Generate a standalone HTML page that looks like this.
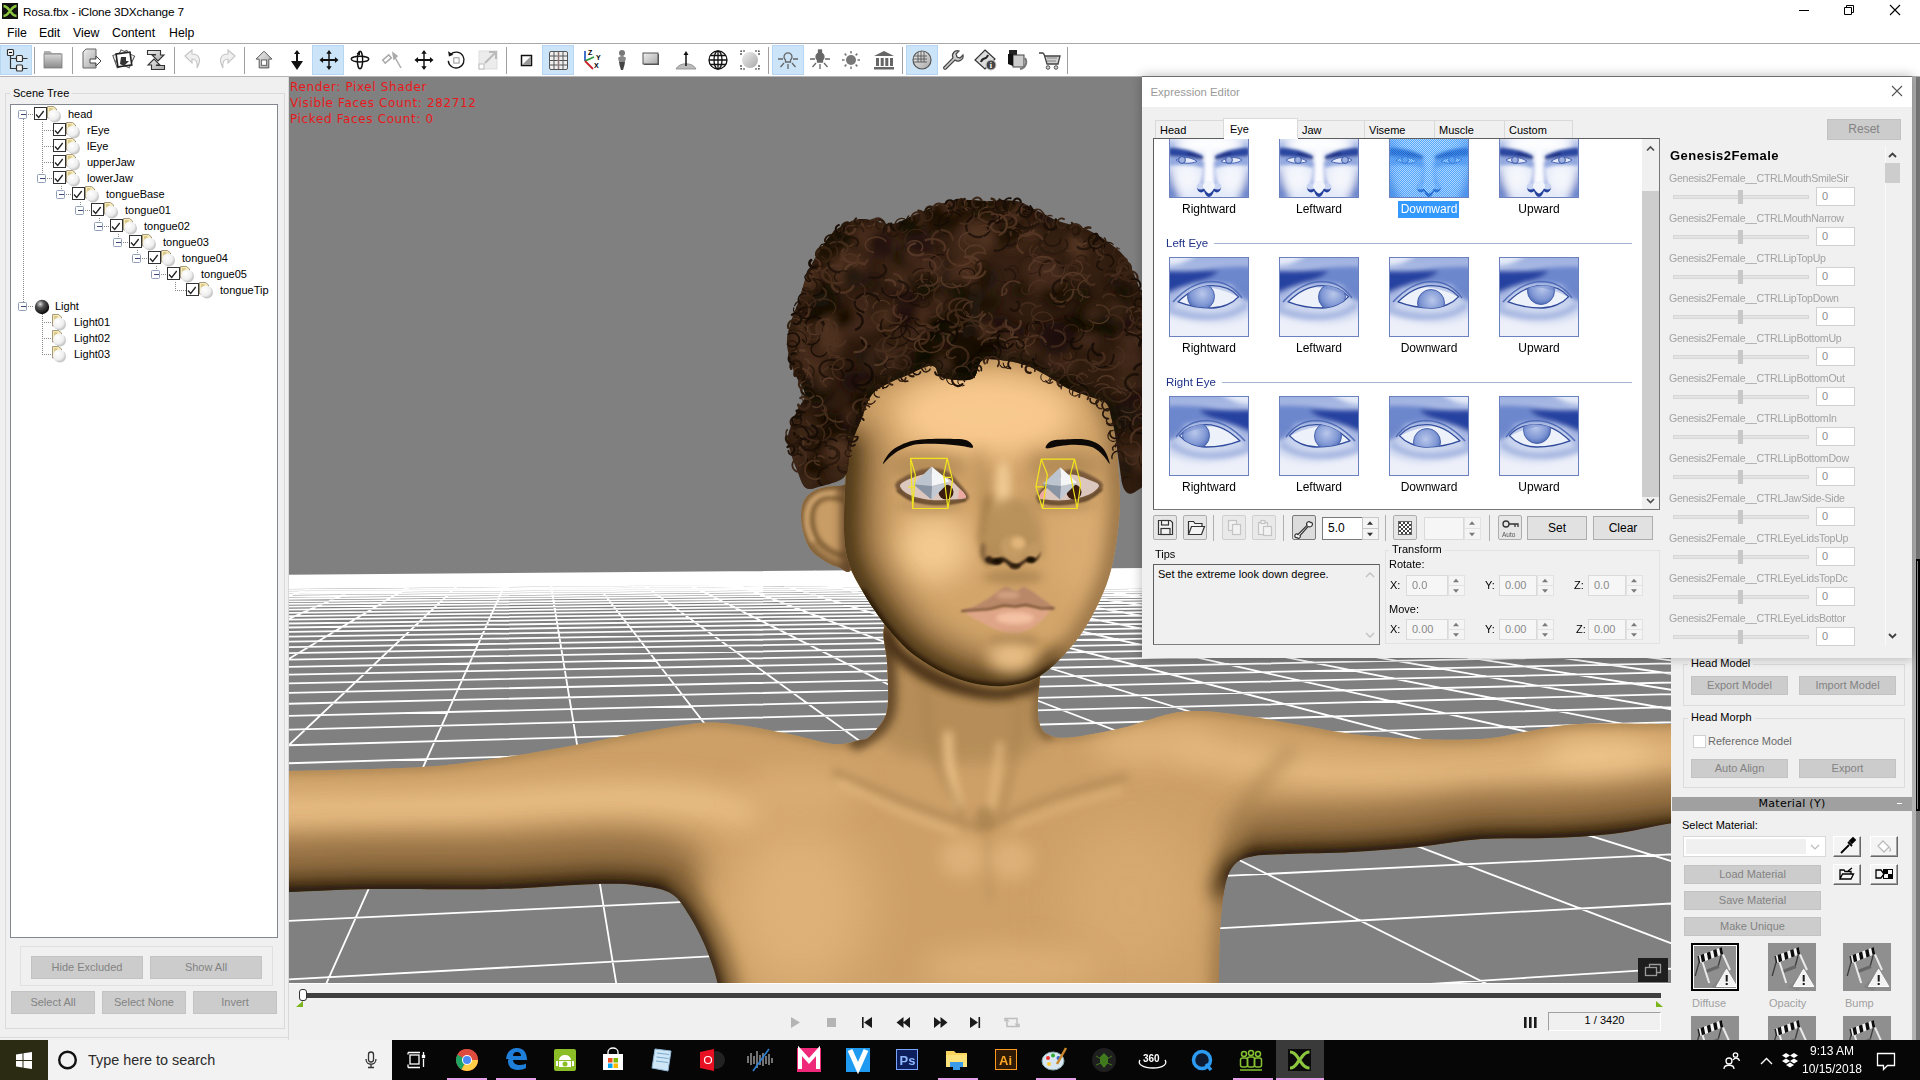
<!DOCTYPE html><html><head><meta charset="utf-8"><title>Rosa.fbx - iClone 3DXchange 7</title><style>*{box-sizing:border-box;margin:0;padding:0}
html,body{width:1920px;height:1080px;overflow:hidden;background:#f0f0f0;font-family:"Liberation Sans",sans-serif;font-size:12px;color:#000}
.a{position:absolute}
.t{position:absolute;white-space:nowrap;line-height:14px}
.btn{position:absolute;background:#ccc;border:1px solid #c3c3c3;color:#838383;text-align:center;font-size:11px;line-height:17px;white-space:nowrap}
.gb{position:absolute;border:1px solid #dcdcdc}
.hl{position:absolute;background:#cce4f7;border:1px solid #b5d7f3}
.sep{position:absolute;width:1px;background:#a0a0a0}
.glab{position:absolute;font-size:10.6px;color:#a2a2a2;white-space:nowrap;line-height:13px;letter-spacing:-0.27px}
.strk{position:absolute;height:4px;background:#e4e4e4;border:1px solid #d6d6d6}
.sthm{position:absolute;width:5px;height:14px;background:#c8c8c8}
.vbox{position:absolute;width:39px;height:19px;background:#fff;border:1px solid #d0d0d0;color:#8c8c8c;font-size:11px;line-height:17px;padding-left:5px}
.thl{position:absolute;font-size:12px;text-align:center;width:110px;line-height:14px}
.tab{position:absolute;background:#f0f0f0;border:1px solid #d9d9d9;border-bottom:none;font-size:11px;line-height:13px;padding:3px 0 0 4px}
.spin{position:absolute;width:38px;height:20px;background:#f4f4f4;border:1px solid #d5d5d5;color:#8a8a8a;font-size:11px;line-height:18px;padding-left:5px}
.lbl{position:absolute;font-size:11px;line-height:13px;white-space:nowrap}
.ti{position:absolute;font-size:11px;line-height:13px;white-space:nowrap}
svg{position:absolute;overflow:visible}
</style></head><body>
<div class="a" style="left:0;top:0;width:1920px;height:43px;background:#fff"></div>
<div class="a" style="left:0;top:43px;width:1920px;height:1px;background:#a8a8a8"></div>
<div class="a" style="left:0;top:44px;width:1920px;height:32px;background:#fff"></div>
<div class="a" style="left:0;top:76px;width:1920px;height:1px;background:#b4b4b4"></div>
<svg style="left:2px;top:3px" width="16" height="16" viewBox="0 0 16 16"><rect width="16" height="16" fill="#111"/><path d="M1.5 3 C5 3 6.5 6 8 8 C9.5 10 11 13 14.5 13 M14.5 3 C11 3 9.5 6 8 8 C6.5 10 5 13 1.5 13" stroke="#8cc63f" stroke-width="2.4" fill="none"/></svg>
<div class="t" style="left:23px;top:5px;font-size:11.8px;letter-spacing:-.15px;line-height:15px">Rosa.fbx - iClone 3DXchange 7</div>
<svg style="left:1790px;top:0" width="120" height="22" viewBox="0 0 120 22"><path d="M9 10.5h10" stroke="#000" stroke-width="1"/><path d="M54.5 7.5h7v7h-7z M56.5 7.5v-2h7v7h-2" stroke="#000" fill="none" stroke-width="1"/><path d="M100 5l10 10M110 5l-10 10" stroke="#000" stroke-width="1.1"/></svg>
<div class="t" style="left:7px;top:26px;font-size:12.3px;line-height:15px">File</div>
<div class="t" style="left:39px;top:26px;font-size:12.3px;line-height:15px">Edit</div>
<div class="t" style="left:73px;top:26px;font-size:12.3px;line-height:15px">View</div>
<div class="t" style="left:112px;top:26px;font-size:12.3px;line-height:15px">Content</div>
<div class="t" style="left:169px;top:26px;font-size:12.3px;line-height:15px">Help</div>
<div class="hl" style="left:0px;top:45px;width:32px;height:30px"></div>
<div class="hl" style="left:312px;top:45px;width:32px;height:30px"></div>
<div class="hl" style="left:542px;top:45px;width:32px;height:30px"></div>
<div class="hl" style="left:772px;top:45px;width:32px;height:30px"></div>
<div class="hl" style="left:906px;top:45px;width:32px;height:30px"></div>
<div class="sep" style="left:34px;top:47px;height:27px"></div>
<div class="sep" style="left:72px;top:47px;height:27px"></div>
<div class="sep" style="left:174px;top:47px;height:27px"></div>
<div class="sep" style="left:244px;top:47px;height:27px"></div>
<div class="sep" style="left:506px;top:47px;height:27px"></div>
<div class="sep" style="left:768px;top:47px;height:27px"></div>
<div class="sep" style="left:902px;top:47px;height:27px"></div>
<div class="sep" style="left:1067px;top:47px;height:27px"></div>
<svg width="0" height="0" style="left:0;top:0"><defs><linearGradient id="gg" x1="0" y1="0" x2="0" y2="1"><stop offset="0" stop-color="#d8d8d8"/><stop offset="1" stop-color="#8a8a8a"/></linearGradient><linearGradient id="gl" x1="0" y1="0" x2="1" y2="1"><stop offset="0" stop-color="#efefef"/><stop offset="1" stop-color="#a8a8a8"/></linearGradient></defs></svg>
<svg style="left:5px;top:48px" width="24" height="24" viewBox="0 0 24 24"><g fill="none" stroke="#333" stroke-width="1.2"><rect x="2.5" y="1.5" width="6" height="6" rx="1" fill="#fff"/><path d="M4 4.5h3" stroke="#000"/><path d="M5.5 7.5v13h6M5.5 10.5h6M17.5 10.5h5M17.5 20.500h5"/><rect x="11.500" y="7.500" width="6" height="6" rx="1" fill="#f4f4f4"/><rect x="11.500" y="17" width="6" height="6" rx="1" fill="#f4f4f4"/></g></svg>
<svg style="left:41px;top:48px" width="24" height="24" viewBox="0 0 24 24"><path d="M3 3h6l2 2h9v2H3z" fill="#b0b0b0"/><rect x="3" y="6" width="18" height="14" fill="url(#gg)" stroke="#7a7a7a" stroke-width=".8"/></svg>
<svg style="left:78px;top:48px" width="24" height="24" viewBox="0 0 24 24"><path d="M5 4l3-3h10v19H5z" fill="url(#gl)" stroke="#666" stroke-width="1"/><path d="M12 11h6v-3l5 5-5 5v-3h-6z" fill="#fff" stroke="#444" stroke-width="1"/></svg>
<svg style="left:112px;top:48px" width="24" height="24" viewBox="0 0 24 24"><g stroke="#555" stroke-width="1" fill="#f2f2f2"><rect x="3" y="4" width="15" height="13" transform="rotate(-20 12 12)"/><rect x="5" y="4" width="15" height="13" transform="rotate(25 12 12)"/><rect x="5" y="5" width="14" height="13" transform="rotate(-8 12 12)" fill="#fff" stroke="#222" stroke-width="1.6"/></g><path d="M9 9h5v4h3l-5 5-4-2z" fill="#333"/></svg>
<svg style="left:144px;top:48px" width="24" height="24" viewBox="0 0 24 24"><path d="M3.500 2.500h13v4.500h3.500l-6 6-6-6h3.500v-.5h-8z" fill="url(#gl)" stroke="#333" stroke-width="1.100"/><path d="M20.500 21.500h-13v-4.500h-3.500l6-6 6 6h-3.500v.5h8z" fill="url(#gl)" stroke="#333" stroke-width="1.100"/></svg>
<svg style="left:182px;top:48px" width="24" height="24" viewBox="0 0 24 24"><path d="M3 8l7-6v4c7 0 10 5 5 14 1-6-1-9-5-9v4z" fill="#f0f0f0" stroke="#c4c4c4" stroke-width="1.1"/></svg>
<svg style="left:214px;top:48px" width="24" height="24" viewBox="0 0 24 24"><path d="M21 8l-7-6v4c-7 0-10 5-5 14-1-6 1-9 5-9v4z" fill="#f0f0f0" stroke="#c4c4c4" stroke-width="1.1"/></svg>
<svg style="left:252px;top:48px" width="24" height="24" viewBox="0 0 24 24"><g transform="translate(12 12) scale(0.88) translate(-12 -12)"><path d="M12 2l9 9h-3.500v10h-11V11H3z" fill="url(#gl)" stroke="#555" stroke-width="1.1"/><rect x="9" y="12" width="6" height="6" fill="#fff" stroke="#555"/></g></svg>
<svg style="left:285px;top:48px" width="24" height="24" viewBox="0 0 24 24"><path d="M12 2l3 4h-2v7h5l-6 9-6-9h5V6H9z" fill="#111"/></svg>
<svg style="left:317px;top:48px" width="24" height="24" viewBox="0 0 24 24"><g transform="translate(12 12) scale(0.9) translate(-12 -12)"><g fill="#111"><path d="M12 1l3 4h-2.200v5.800H18.600V8.600l4 3.400-4 3.400v-2.200h-5.800V19H15l-3 4-3-4h2.200v-5.800H5.400v2.200L1.400 12l4-3.400v2.200h5.800V5H9z"/></g></g></svg>
<svg style="left:348px;top:48px" width="24" height="24" viewBox="0 0 24 24"><g transform="translate(12 12) scale(0.88) translate(-12 -12)"><g fill="none" stroke="#111" stroke-width="1.6"><ellipse cx="12" cy="11" rx="10" ry="3.200"/><ellipse cx="12" cy="12" rx="3" ry="10"/></g><path d="M8 5l4-3v5z" fill="#111"/></g></svg>
<svg style="left:380px;top:48px" width="24" height="24" viewBox="0 0 24 24"><g stroke="#aaa" stroke-width="1.5" fill="none"><rect x="3" y="9" width="8" height="4" transform="rotate(-40 7 11)"/><path d="M13 6l8 14"/><path d="M13 5l1 6 3-3z" fill="#aaa"/></g></svg>
<svg style="left:412px;top:48px" width="24" height="24" viewBox="0 0 24 24"><g transform="translate(12 12) scale(0.9) translate(-12 -12)"><g fill="#111"><path d="M12 1l3 4h-2.200v5.800H18.600V8.600l4 3.400-4 3.400v-2.200h-5.800V19H15l-3 4-3-4h2.200v-5.800H5.400v2.200L1.400 12l4-3.400v2.200h5.800V5H9z"/></g></g></svg>
<svg style="left:444px;top:48px" width="24" height="24" viewBox="0 0 24 24"><g transform="translate(12 12) scale(0.88) translate(-12 -12)"><path d="M6 5.500A9 9 0 1 1 3.200 13" fill="none" stroke="#111" stroke-width="1.500"/><path d="M3 2l1 6 5-2z" fill="#111"/><rect x="9.500" y="9.500" width="6" height="6" fill="#fff" stroke="#888"/></g></svg>
<svg style="left:476px;top:48px" width="24" height="24" viewBox="0 0 24 24"><rect x="3" y="3" width="18" height="18" fill="#ececec" stroke="#ddd"/><path d="M9 15L19 5M13 4h7v7" fill="none" stroke="#bbb" stroke-width="2"/><rect x="3" y="16" width="5" height="5" fill="#fff" stroke="#bbb"/></svg>
<svg style="left:514px;top:48px" width="24" height="24" viewBox="0 0 24 24"><rect x="7.500" y="7.500" width="10" height="10" fill="#fff" stroke="#111" stroke-width="1.500"/><path d="M17 8v9H8z" fill="#999"/></svg>
<svg style="left:546px;top:48px" width="24" height="24" viewBox="0 0 24 24"><rect x="3.500" y="3.500" width="18" height="18" rx="1.500" fill="#eee" stroke="#555"/><path d="M8 4v17M12.500 4v17M17 4v17M4 8h17M4 12.500h17M4 17h17" stroke="#555" stroke-width="1"/><path d="M12.500 4v17" stroke="#b99" stroke-width="2.500" opacity=".5"/></svg>
<svg style="left:579px;top:48px" width="24" height="24" viewBox="0 0 24 24"><path d="M6 3v10" stroke="#2e62c8" stroke-width="1.800"/><path d="M6 13l9-4" stroke="#2a9a3a" stroke-width="1.800"/><path d="M6 13l8 8" stroke="#c8232c" stroke-width="1.800"/><text x="9" y="7" font-size="7" font-weight="bold" font-family="Liberation Sans,sans-serif">Z</text><text x="17" y="12" font-size="7" font-weight="bold" font-family="Liberation Sans,sans-serif">Y</text><text x="15" y="20" font-size="7" font-weight="bold" font-family="Liberation Sans,sans-serif">X</text></svg>
<svg style="left:610px;top:48px" width="24" height="24" viewBox="0 0 24 24"><circle cx="12" cy="5" r="3" fill="#777"/><path d="M8.500 10c0-2 7-2 7 0l-1 7-1.500 5h-2l-1.500-5z" fill="#444"/><path d="M8.500 10c0-2 7-2 7 0l-.5 4h-6z" fill="#888"/></svg>
<svg style="left:640px;top:48px" width="24" height="24" viewBox="0 0 24 24"><rect x="4" y="6" width="15" height="11" fill="#555"/><rect x="3" y="5" width="15" height="11" fill="url(#gl)" stroke="#555"/></svg>
<svg style="left:674px;top:48px" width="24" height="24" viewBox="0 0 24 24"><path d="M2 21c3-7 17-7 20 0z" fill="#bbb" stroke="#888" stroke-width=".8"/><path d="M12 18V6" stroke="#111" stroke-width="1.500"/><path d="M12 3l2.500 4h-5z" fill="#111"/></svg>
<svg style="left:706px;top:48px" width="24" height="24" viewBox="0 0 24 24"><g fill="none" stroke="#111" stroke-width="1.300"><circle cx="12" cy="12" r="9"/><ellipse cx="12" cy="12" rx="4" ry="9"/><path d="M12 3v18M3 12h18M4.500 7.500h15M4.500 16.500h15"/></g></svg>
<svg style="left:738px;top:48px" width="24" height="24" viewBox="0 0 24 24"><circle cx="12" cy="12" r="8" fill="url(#gl)"/><path d="M3 7V3h4M17 3h4v4M21 17v4h-4M7 21H3v-4" fill="none" stroke="#333" stroke-width="1.200" stroke-dasharray="2 1"/></svg>
<svg style="left:776px;top:48px" width="24" height="24" viewBox="0 0 24 24"><g fill="none" stroke="#666" stroke-width="1.300"><path d="M9.500 12a4 4 0 1 1 5 0v2h-5z"/><path d="M2 11h5M17 11h5M12 16v5M8 15l-3.500 4M16 15l3.500 4"/></g></svg>
<svg style="left:808px;top:48px" width="24" height="24" viewBox="0 0 24 24"><g stroke="#666" stroke-width="1.300"><path d="M9.500 12a4 4 0 1 1 5 0v2h-5z" fill="#666"/><rect x="10.500" y="2" width="3" height="3" fill="#666"/><path d="M2 11h5M17 11h5M12 16v5M8 15l-3.500 4M16 15l3.500 4"/></g></svg>
<svg style="left:839px;top:48px" width="24" height="24" viewBox="0 0 24 24"><circle cx="12" cy="12" r="5" fill="#777"/><g stroke="#777" stroke-width="1.500" stroke-dasharray="2.500 30"><path d="M12 3v3M12 21v-3M3 12h3M21 12h-3M5.600 5.600l2 2M18.400 18.400l-2-2M5.600 18.400l2-2M18.400 5.600l-2 2"/></g></svg>
<svg style="left:872px;top:48px" width="24" height="24" viewBox="0 0 24 24"><path d="M12 3l10 5H2z" fill="#666"/><path d="M4 10h3v8H4zM8.700 10h3v8h-3zM13.300 10h3v8h-3zM18 10h3v8h-3z" fill="#666"/><rect x="2" y="19" width="20" height="2.500" fill="#666"/></svg>
<svg style="left:910px;top:48px" width="24" height="24" viewBox="0 0 24 24"><circle cx="12" cy="12" r="9" fill="url(#gl)" stroke="#555" stroke-width="1.200"/><path d="M8 4v10M11 3v11M14 3.500v10.500M4 8h13M3.500 11h13.500M4 14h13" stroke="#555" stroke-width=".9"/></svg>
<svg style="left:941px;top:48px" width="24" height="24" viewBox="0 0 24 24"><path d="M4 20l9-9a5 5 0 0 1 6-7l-3 3 1 3 3 1 3-3a5 5 0 0 1-8 5l-9 9c-2 1-3-1-2-2z" fill="url(#gl)" stroke="#444" stroke-width="1.200" transform="translate(-1,-1)"/></svg>
<svg style="left:973px;top:48px" width="24" height="24" viewBox="0 0 24 24"><path d="M12 2l10 9-10 10L2 12z" fill="#ddd" stroke="#333" stroke-width="1.200"/><path d="M8 14c2-6 5-1 7-7" stroke="#222" stroke-width="2" fill="none"/><circle cx="18" cy="17" r="5" fill="#444" stroke="#ccc"/><text x="16.700" y="20" font-size="8" font-weight="bold" fill="#fff" font-family="Liberation Serif,serif">i</text></svg>
<svg style="left:1005px;top:48px" width="24" height="24" viewBox="0 0 24 24"><rect x="4" y="2" width="8" height="12" fill="#222"/><rect x="8" y="7" width="11" height="12" fill="#ccc" stroke="#444"/><path d="M3 6l5 0v12l-5-2z" fill="#111"/><path d="M20 10c3 5 0 10-5 11" stroke="#777" stroke-width="2" fill="none"/></svg>
<svg style="left:1038px;top:48px" width="24" height="24" viewBox="0 0 24 24"><path d="M1 5h4l2 3h15l-2 8H9L6 6" fill="#d0d0d0" stroke="#444" stroke-width="1.300"/><path d="M9 10h10M9 13h9" stroke="#888"/><circle cx="10" cy="19.500" r="1.800" fill="#ccc" stroke="#555"/><circle cx="18" cy="19.500" r="1.800" fill="#ccc" stroke="#555"/></svg>
<div class="a" style="left:0;top:77px;width:289px;height:963px;background:#f0f0f0"></div>
<div class="gb" style="left:5px;top:93px;width:280px;height:936px;border-color:#dadada"></div>
<div class="t" style="left:10px;top:86px;font-size:11px;background:#f0f0f0;padding:0 3px">Scene Tree</div>
<div class="a" style="left:10px;top:104px;width:268px;height:834px;background:#fff;border:1px solid #828790"></div>
<div class="gb" style="left:20px;top:946px;width:253px;height:40px;border-color:#e0e0e0"></div>
<div class="btn" style="left:31px;top:956px;width:112px;height:23px;line-height:21px">Hide Excluded</div>
<div class="btn" style="left:150px;top:956px;width:112px;height:23px;line-height:21px">Show All</div>
<div class="btn" style="left:11px;top:991px;width:84px;height:23px;line-height:21px">Select All</div>
<div class="btn" style="left:102px;top:991px;width:84px;height:23px;line-height:21px">Select None</div>
<div class="btn" style="left:193px;top:991px;width:84px;height:23px;line-height:21px">Invert</div>
<svg style="left:0;top:0" width="289" height="400" viewBox="0 0 289 400"><defs><radialGradient id="ball" cx=".4" cy=".35" r=".7"><stop offset="0" stop-color="#fff"/><stop offset=".7" stop-color="#eee"/><stop offset="1" stop-color="#c8c8c8"/></radialGradient><radialGradient id="bball" cx=".38" cy=".3" r=".75"><stop offset="0" stop-color="#ddd"/><stop offset=".35" stop-color="#555"/><stop offset="1" stop-color="#000"/></radialGradient></defs><path d="M23.500 119V306" stroke="#888" stroke-width="1" stroke-dasharray="1 1" fill="none"/><path d="M42.500 122V178" stroke="#888" stroke-width="1" stroke-dasharray="1 1" fill="none"/><path d="M42.500 314V354" stroke="#888" stroke-width="1" stroke-dasharray="1 1" fill="none"/><rect x="18.5" y="110.5" width="8" height="8" rx="1" fill="#fff" stroke="#919eb8"/><path d="M21 114.5h5" stroke="#3b4a7a"/><path d="M28 114.5h6" stroke="#888" stroke-width="1" stroke-dasharray="1 1" fill="none"/><rect x="34.5" y="107.5" width="12" height="12" fill="#fff" stroke="#333"/><path d="M36 114.5l2.700 3 5-6.500" stroke="#222" stroke-width="1.300" fill="none"/><path d="M47.5 106.5h6l3 2.500v9h-9z" fill="#f7eab5" stroke="#8d8468" stroke-width=".8"/><path d="M49 109h3.500M49 111h3.500" stroke="#b9a25a" stroke-width=".9"/><circle cx="55.0" cy="116.5" r="6" fill="#9a9a9a" opacity=".55"/><circle cx="54.0" cy="115.5" r="6" fill="url(#ball)"/><path d="M42 130.5H53" stroke="#888" stroke-width="1" stroke-dasharray="1 1" fill="none"/><rect x="53.5" y="123.5" width="12" height="12" fill="#fff" stroke="#333"/><path d="M55 130.5l2.700 3 5-6.500" stroke="#222" stroke-width="1.300" fill="none"/><path d="M66.5 122.5h6l3 2.500v9h-9z" fill="#f7eab5" stroke="#8d8468" stroke-width=".8"/><path d="M68 125h3.500M68 127h3.500" stroke="#b9a25a" stroke-width=".9"/><circle cx="74.0" cy="132.5" r="6" fill="#9a9a9a" opacity=".55"/><circle cx="73.0" cy="131.5" r="6" fill="url(#ball)"/><path d="M42 146.5H53" stroke="#888" stroke-width="1" stroke-dasharray="1 1" fill="none"/><rect x="53.5" y="139.5" width="12" height="12" fill="#fff" stroke="#333"/><path d="M55 146.5l2.700 3 5-6.500" stroke="#222" stroke-width="1.300" fill="none"/><path d="M66.5 138.5h6l3 2.500v9h-9z" fill="#f7eab5" stroke="#8d8468" stroke-width=".8"/><path d="M68 141h3.500M68 143h3.500" stroke="#b9a25a" stroke-width=".9"/><circle cx="74.0" cy="148.5" r="6" fill="#9a9a9a" opacity=".55"/><circle cx="73.0" cy="147.5" r="6" fill="url(#ball)"/><path d="M42 162.5H53" stroke="#888" stroke-width="1" stroke-dasharray="1 1" fill="none"/><rect x="53.5" y="155.5" width="12" height="12" fill="#fff" stroke="#333"/><path d="M55 162.5l2.700 3 5-6.500" stroke="#222" stroke-width="1.300" fill="none"/><path d="M66.5 154.5h6l3 2.500v9h-9z" fill="#f7eab5" stroke="#8d8468" stroke-width=".8"/><path d="M68 157h3.500M68 159h3.500" stroke="#b9a25a" stroke-width=".9"/><circle cx="74.0" cy="164.5" r="6" fill="#9a9a9a" opacity=".55"/><circle cx="73.0" cy="163.5" r="6" fill="url(#ball)"/><rect x="37.5" y="174.5" width="8" height="8" rx="1" fill="#fff" stroke="#919eb8"/><path d="M40 178.5h5" stroke="#3b4a7a"/><path d="M47 178.5h6" stroke="#888" stroke-width="1" stroke-dasharray="1 1" fill="none"/><rect x="53.5" y="171.5" width="12" height="12" fill="#fff" stroke="#333"/><path d="M55 178.5l2.700 3 5-6.500" stroke="#222" stroke-width="1.300" fill="none"/><path d="M66.5 170.5h6l3 2.500v9h-9z" fill="#f7eab5" stroke="#8d8468" stroke-width=".8"/><path d="M68 173h3.500M68 175h3.500" stroke="#b9a25a" stroke-width=".9"/><circle cx="74.0" cy="180.5" r="6" fill="#9a9a9a" opacity=".55"/><circle cx="73.0" cy="179.5" r="6" fill="url(#ball)"/><path d="M61.5 186V190" stroke="#888" stroke-width="1" stroke-dasharray="1 1" fill="none"/><rect x="56.5" y="190.5" width="8" height="8" rx="1" fill="#fff" stroke="#919eb8"/><path d="M59 194.5h5" stroke="#3b4a7a"/><path d="M66 194.5h6" stroke="#888" stroke-width="1" stroke-dasharray="1 1" fill="none"/><rect x="72.5" y="187.5" width="12" height="12" fill="#fff" stroke="#333"/><path d="M74 194.5l2.700 3 5-6.500" stroke="#222" stroke-width="1.300" fill="none"/><path d="M85.5 186.5h6l3 2.500v9h-9z" fill="#f7eab5" stroke="#8d8468" stroke-width=".8"/><path d="M87 189h3.500M87 191h3.500" stroke="#b9a25a" stroke-width=".9"/><circle cx="93.0" cy="196.5" r="6" fill="#9a9a9a" opacity=".55"/><circle cx="92.0" cy="195.5" r="6" fill="url(#ball)"/><path d="M80.5 202V206" stroke="#888" stroke-width="1" stroke-dasharray="1 1" fill="none"/><rect x="75.5" y="206.5" width="8" height="8" rx="1" fill="#fff" stroke="#919eb8"/><path d="M78 210.5h5" stroke="#3b4a7a"/><path d="M85 210.5h6" stroke="#888" stroke-width="1" stroke-dasharray="1 1" fill="none"/><rect x="91.5" y="203.5" width="12" height="12" fill="#fff" stroke="#333"/><path d="M93 210.5l2.700 3 5-6.500" stroke="#222" stroke-width="1.300" fill="none"/><path d="M104.5 202.5h6l3 2.500v9h-9z" fill="#f7eab5" stroke="#8d8468" stroke-width=".8"/><path d="M106 205h3.500M106 207h3.500" stroke="#b9a25a" stroke-width=".9"/><circle cx="112.0" cy="212.5" r="6" fill="#9a9a9a" opacity=".55"/><circle cx="111.0" cy="211.5" r="6" fill="url(#ball)"/><path d="M99.5 218V222" stroke="#888" stroke-width="1" stroke-dasharray="1 1" fill="none"/><rect x="94.5" y="222.5" width="8" height="8" rx="1" fill="#fff" stroke="#919eb8"/><path d="M97 226.5h5" stroke="#3b4a7a"/><path d="M104 226.5h6" stroke="#888" stroke-width="1" stroke-dasharray="1 1" fill="none"/><rect x="110.5" y="219.5" width="12" height="12" fill="#fff" stroke="#333"/><path d="M112 226.5l2.700 3 5-6.500" stroke="#222" stroke-width="1.300" fill="none"/><path d="M123.5 218.5h6l3 2.500v9h-9z" fill="#f7eab5" stroke="#8d8468" stroke-width=".8"/><path d="M125 221h3.500M125 223h3.500" stroke="#b9a25a" stroke-width=".9"/><circle cx="131.0" cy="228.5" r="6" fill="#9a9a9a" opacity=".55"/><circle cx="130.0" cy="227.5" r="6" fill="url(#ball)"/><path d="M118.5 234V238" stroke="#888" stroke-width="1" stroke-dasharray="1 1" fill="none"/><rect x="113.5" y="238.5" width="8" height="8" rx="1" fill="#fff" stroke="#919eb8"/><path d="M116 242.5h5" stroke="#3b4a7a"/><path d="M123 242.5h6" stroke="#888" stroke-width="1" stroke-dasharray="1 1" fill="none"/><rect x="129.5" y="235.5" width="12" height="12" fill="#fff" stroke="#333"/><path d="M131 242.5l2.700 3 5-6.500" stroke="#222" stroke-width="1.300" fill="none"/><path d="M142.5 234.5h6l3 2.500v9h-9z" fill="#f7eab5" stroke="#8d8468" stroke-width=".8"/><path d="M144 237h3.500M144 239h3.500" stroke="#b9a25a" stroke-width=".9"/><circle cx="150.0" cy="244.5" r="6" fill="#9a9a9a" opacity=".55"/><circle cx="149.0" cy="243.5" r="6" fill="url(#ball)"/><path d="M137.5 250V254" stroke="#888" stroke-width="1" stroke-dasharray="1 1" fill="none"/><rect x="132.5" y="254.5" width="8" height="8" rx="1" fill="#fff" stroke="#919eb8"/><path d="M135 258.5h5" stroke="#3b4a7a"/><path d="M142 258.5h6" stroke="#888" stroke-width="1" stroke-dasharray="1 1" fill="none"/><rect x="148.5" y="251.5" width="12" height="12" fill="#fff" stroke="#333"/><path d="M150 258.5l2.700 3 5-6.500" stroke="#222" stroke-width="1.300" fill="none"/><path d="M161.5 250.5h6l3 2.500v9h-9z" fill="#f7eab5" stroke="#8d8468" stroke-width=".8"/><path d="M163 253h3.500M163 255h3.500" stroke="#b9a25a" stroke-width=".9"/><circle cx="169.0" cy="260.5" r="6" fill="#9a9a9a" opacity=".55"/><circle cx="168.0" cy="259.5" r="6" fill="url(#ball)"/><path d="M156.5 266V270" stroke="#888" stroke-width="1" stroke-dasharray="1 1" fill="none"/><rect x="151.5" y="270.5" width="8" height="8" rx="1" fill="#fff" stroke="#919eb8"/><path d="M154 274.5h5" stroke="#3b4a7a"/><path d="M161 274.5h6" stroke="#888" stroke-width="1" stroke-dasharray="1 1" fill="none"/><rect x="167.5" y="267.5" width="12" height="12" fill="#fff" stroke="#333"/><path d="M169 274.5l2.700 3 5-6.500" stroke="#222" stroke-width="1.300" fill="none"/><path d="M180.5 266.5h6l3 2.500v9h-9z" fill="#f7eab5" stroke="#8d8468" stroke-width=".8"/><path d="M182 269h3.500M182 271h3.500" stroke="#b9a25a" stroke-width=".9"/><circle cx="188.0" cy="276.5" r="6" fill="#9a9a9a" opacity=".55"/><circle cx="187.0" cy="275.5" r="6" fill="url(#ball)"/><path d="M175 290.5H186" stroke="#888" stroke-width="1" stroke-dasharray="1 1" fill="none"/><path d="M175.5 282V290" stroke="#888" stroke-width="1" stroke-dasharray="1 1" fill="none"/><rect x="186.5" y="283.5" width="12" height="12" fill="#fff" stroke="#333"/><path d="M188 290.5l2.700 3 5-6.500" stroke="#222" stroke-width="1.300" fill="none"/><path d="M199.5 282.5h6l3 2.500v9h-9z" fill="#f7eab5" stroke="#8d8468" stroke-width=".8"/><path d="M201 285h3.500M201 287h3.500" stroke="#b9a25a" stroke-width=".9"/><circle cx="207.0" cy="292.5" r="6" fill="#9a9a9a" opacity=".55"/><circle cx="206.0" cy="291.5" r="6" fill="url(#ball)"/><rect x="18.5" y="302.5" width="8" height="8" rx="1" fill="#fff" stroke="#919eb8"/><path d="M21 306.5h5" stroke="#3b4a7a"/><path d="M28 306.5h6" stroke="#888" stroke-width="1" stroke-dasharray="1 1" fill="none"/><circle cx="42" cy="307" r="7.200" fill="url(#bball)"/><path d="M42 322.5H53" stroke="#888" stroke-width="1" stroke-dasharray="1 1" fill="none"/><path d="M52.5 314.5h6l3 2.500v9h-9z" fill="#f7eab5" stroke="#8d8468" stroke-width=".8"/><path d="M54 317h3.500M54 319h3.500" stroke="#b9a25a" stroke-width=".9"/><circle cx="60.0" cy="324.5" r="6" fill="#9a9a9a" opacity=".55"/><circle cx="59.0" cy="323.5" r="6" fill="url(#ball)"/><path d="M42 338.5H53" stroke="#888" stroke-width="1" stroke-dasharray="1 1" fill="none"/><path d="M52.5 330.5h6l3 2.500v9h-9z" fill="#f7eab5" stroke="#8d8468" stroke-width=".8"/><path d="M54 333h3.500M54 335h3.500" stroke="#b9a25a" stroke-width=".9"/><circle cx="60.0" cy="340.5" r="6" fill="#9a9a9a" opacity=".55"/><circle cx="59.0" cy="339.5" r="6" fill="url(#ball)"/><path d="M42 354.5H53" stroke="#888" stroke-width="1" stroke-dasharray="1 1" fill="none"/><path d="M52.5 346.5h6l3 2.500v9h-9z" fill="#f7eab5" stroke="#8d8468" stroke-width=".8"/><path d="M54 349h3.500M54 351h3.500" stroke="#b9a25a" stroke-width=".9"/><circle cx="60.0" cy="356.5" r="6" fill="#9a9a9a" opacity=".55"/><circle cx="59.0" cy="355.5" r="6" fill="url(#ball)"/></svg>
<div class="ti" style="left:68px;top:108px">head</div>
<div class="ti" style="left:87px;top:124px">rEye</div>
<div class="ti" style="left:87px;top:140px">lEye</div>
<div class="ti" style="left:87px;top:156px">upperJaw</div>
<div class="ti" style="left:87px;top:172px">lowerJaw</div>
<div class="ti" style="left:106px;top:188px">tongueBase</div>
<div class="ti" style="left:125px;top:204px">tongue01</div>
<div class="ti" style="left:144px;top:220px">tongue02</div>
<div class="ti" style="left:163px;top:236px">tongue03</div>
<div class="ti" style="left:182px;top:252px">tongue04</div>
<div class="ti" style="left:201px;top:268px">tongue05</div>
<div class="ti" style="left:220px;top:284px">tongueTip</div>
<div class="ti" style="left:55px;top:300px">Light</div>
<div class="ti" style="left:74px;top:316px">Light01</div>
<div class="ti" style="left:74px;top:332px">Light02</div>
<div class="ti" style="left:74px;top:348px">Light03</div>
<div class="a" style="left:0;top:1037px;width:289px;height:1px;background:#dcdcdc"></div>
<svg style="left:289px;top:77px;overflow:hidden" width="1382" height="906" viewBox="289 77 1382 906"><rect x="289" y="77" width="1382" height="906" fill="#808080"/><path d="M-42416.4 10944.8L265.2 575.8M-36035.4 10944.8L306.9 575.5M-29654.5 10944.8L348.2 575.2M-23273.5 10944.8L389.2 574.8M-16892.5 10944.8L429.7 574.5M-10511.6 10944.8L469.8 574.2M-4130.6 10944.8L509.6 573.9M2250.4 10944.8L549.0 573.6M8631.3 10944.8L588.0 573.3M15012.3 10944.8L626.7 573.0M21393.3 10944.8L665.0 572.7M27774.2 10944.8L702.9 572.4M34155.2 10944.8L740.5 572.1M40536.2 10944.8L777.8 571.8M46917.1 10944.8L814.7 571.5M53298.1 10944.8L851.2 571.3M59679.1 10944.8L887.5 571.0M45529.5 7675.0L923.4 570.7M32866.0 5201.2L959.0 570.4M26702.3 3997.1L994.2 570.2M23056.2 3284.8L1029.2 569.9M20646.7 2814.2L1063.8 569.6M18936.0 2480.0L1098.2 569.4M17658.5 2230.4L1132.2 569.1M16668.3 2037.0L1166.0 568.8M15878.1 1882.6L1199.4 568.6M15233.0 1756.6L1232.6 568.3M14696.3 1651.8L1265.4 568.1M14242.9 1563.2L1298.0 567.8M13854.7 1487.4L1330.3 567.6M13518.6 1421.7L1362.4 567.3M13224.9 1364.3L1394.1 567.1M12965.9 1313.7L1425.6 566.8M12735.8 1268.8L1456.9 566.6M12530.1 1228.6L1487.8 566.3M12345.0 1192.4L1518.5 566.1M12177.7 1159.8L1549.0 565.9M12025.7 1130.1L1579.2 565.6M11886.9 1102.9L1609.1 565.4M11759.8 1078.1L1638.8 565.2M11642.8 1055.3L1668.3 564.9M11534.9 1034.2L1697.5 564.7M11435.1 1014.7L1726.5 564.5M11342.3 996.6L1755.3 564.3M11256.0 979.7L1783.8 564.0M11175.5 964.0L1812.1 563.8M11100.2 949.3L1840.2 563.6M11029.6 935.5L1868.0 563.4M10963.3 922.5L1895.6 563.2M10900.9 910.3L1923.0 563.0M10842.1 898.8L1950.2 562.8M10786.6 888.0L1977.2 562.6M10734.0 877.7L2004.0 562.3M10684.3 868.0L2030.5 562.1M10637.1 858.8L2056.9 561.9M10592.3 850.0L2083.1 561.7M10549.6 841.7L2109.0 561.5M10509.0 833.8L2134.8 561.3M61351.5 10944.8L10474.9 832.7M34398.1 10944.8L9567.7 803.2M7444.7 10944.8L8812.3 778.6M-19508.8 10944.8L8173.5 757.8M-46462.2 10944.8L7626.3 740.0M-73415.6 10944.8L7152.3 724.6M-100369.0 10944.8L6737.7 711.1M-127322.5 10944.8L6372.0 699.2M-154275.9 10944.8L6047.1 688.6M-181229.3 10944.8L5756.4 679.2M-208182.8 10944.8L5494.9 670.6M-235136.2 10944.8L5258.4 663.0M-120463.6 5490.0L5043.4 656.0M-46950.0 2464.1L4847.1 649.6M-29002.6 1725.3L4667.2 643.7M-20900.2 1391.8L4501.7 638.3M-16285.8 1201.9L4349.0 633.4M-13305.9 1079.2L4207.7 628.8M-11222.8 993.5L4076.4 624.5M-9684.6 930.2L3954.2 620.5M-8502.2 881.5L3840.2 616.8M-7564.9 842.9L3733.5 613.3M-6803.7 811.6L3633.5 610.1M-6173.3 785.7L3539.6 607.0M-5642.6 763.8L3451.2 604.2M-5189.6 745.2L3367.8 601.4M-4798.5 729.1L3289.1 598.9M-4457.4 715.0L3214.7 596.5M-4157.3 702.7L3144.2 594.2M-3891.2 691.7L3077.3 592.0M-3653.6 681.9L3013.8 589.9M-3440.2 673.2L2953.3 588.0M-3247.5 665.2L2895.7 586.1M-3072.6 658.0L2840.9 584.3M-2913.1 651.5L2788.5 582.6M-2767.2 645.5L2738.4 581.0M-2633.0 639.9L2690.6 579.4M-2509.4 634.9L2644.7 577.9M-2395.0 630.1L2600.8 576.5M-2288.9 625.8L2558.7 575.1M-2190.2 621.7L2518.2 573.8M-2098.1 617.9L2479.4 572.5M-2012.1 614.4L2442.0 571.3M-1931.5 611.1L2406.1 570.2M-1855.9 608.0L2371.5 569.0M-1784.7 605.0L2338.1 567.9M-1717.6 602.3L2305.9 566.9M-1654.3 599.7L2274.9 565.9M-1594.5 597.2L2244.9 564.9M-1537.8 594.9L2216.0 564.0M-1484.1 592.7L2188.0 563.1M-1433.1 590.6L2160.9 562.2M-1384.6 588.6L2134.8 561.3" stroke="#fff" stroke-width="1.8" fill="none"/><defs>
<filter id="b4" filterUnits="userSpaceOnUse" x="289" y="77" width="1382" height="906"><feGaussianBlur stdDeviation="4"/></filter>
<filter id="b8" filterUnits="userSpaceOnUse" x="289" y="77" width="1382" height="906"><feGaussianBlur stdDeviation="8"/></filter>
<filter id="b14" filterUnits="userSpaceOnUse" x="289" y="77" width="1382" height="906"><feGaussianBlur stdDeviation="14"/></filter>
<filter id="b25" filterUnits="userSpaceOnUse" x="289" y="77" width="1382" height="906"><feGaussianBlur stdDeviation="25"/></filter>
<filter id="b2" filterUnits="userSpaceOnUse" x="289" y="77" width="1382" height="906"><feGaussianBlur stdDeviation="2"/></filter>
<filter id="b1" filterUnits="userSpaceOnUse" x="289" y="77" width="1382" height="906"><feGaussianBlur stdDeviation="1"/></filter>
</defs><clipPath id="cpT"><path d="M260.0 771.0C264.7 750.8 261.0 771.7 288.0 771.0C315.0 770.3 385.7 769.3 422.0 767.0C458.3 764.7 479.5 760.8 506.0 757.0C532.5 753.2 558.2 748.2 581.0 744.0C603.8 739.8 623.0 735.5 643.0 732.0C663.0 728.5 685.0 724.2 701.0 723.0C717.0 721.8 724.3 723.2 739.0 725.0C753.7 726.8 773.2 730.8 789.0 734.0C804.8 737.2 822.2 743.0 834.0 744.0C845.8 745.0 854.2 741.2 860.0 740.0C865.8 738.8 865.0 740.5 869.0 737.0C873.0 733.5 880.8 725.2 884.0 719.0C887.2 712.8 887.5 709.5 888.0 700.0C888.5 690.5 887.7 674.0 887.0 662.0C886.3 650.0 881.8 635.3 884.0 628.0C886.2 620.7 875.7 616.0 900.0 618.0C924.3 620.0 1006.5 633.0 1030.0 640.0C1053.5 647.0 1039.3 653.7 1041.0 660.0C1042.7 666.3 1040.5 671.3 1040.0 678.0C1039.5 684.7 1038.2 692.7 1038.0 700.0C1037.8 707.3 1037.5 716.3 1039.0 722.0C1040.5 727.7 1042.0 731.4 1047.0 734.0C1052.0 736.6 1056.5 738.5 1069.0 737.5C1081.5 736.5 1105.3 731.9 1122.0 728.0C1138.7 724.1 1156.0 716.8 1169.0 714.0C1182.0 711.2 1187.0 710.7 1200.0 711.0C1213.0 711.3 1230.3 713.7 1247.0 716.0C1263.7 718.3 1282.5 722.0 1300.0 725.0C1317.5 728.0 1332.5 731.7 1352.0 734.0C1371.5 736.3 1395.5 738.2 1417.0 739.0C1438.5 739.8 1462.2 740.3 1481.0 739.0C1499.8 737.7 1513.7 733.5 1530.0 731.0C1546.3 728.5 1555.3 725.2 1579.0 724.0C1602.7 722.8 1651.8 724.0 1672.0 724.0C1692.2 724.0 1695.3 707.5 1700.0 724.0C1704.7 740.5 1704.7 806.5 1700.0 823.0C1695.3 839.5 1686.8 821.2 1672.0 823.0C1657.2 824.8 1632.0 831.5 1611.0 834.0C1590.0 836.5 1567.7 837.2 1546.0 838.0C1524.3 838.8 1502.5 837.5 1481.0 839.0C1459.5 840.5 1438.5 844.8 1417.0 847.0C1395.5 849.2 1373.7 850.8 1352.0 852.0C1330.3 853.2 1303.3 853.3 1287.0 854.0C1270.7 854.7 1262.7 854.3 1254.0 856.0C1245.3 857.7 1239.8 859.0 1235.0 864.0C1230.2 869.0 1227.5 874.7 1225.0 886.0C1222.5 897.3 1221.0 915.5 1220.0 932.0C1219.0 948.5 1219.2 972.0 1219.0 985.0C1218.8 998.0 1302.5 1005.8 1219.0 1010.0C1135.5 1014.2 801.5 1014.2 718.0 1010.0C634.5 1005.8 720.0 995.3 718.0 985.0C716.0 974.7 710.8 959.7 706.0 948.0C701.2 936.3 694.7 924.0 689.0 915.0C683.3 906.0 679.7 898.8 672.0 894.0C664.3 889.2 655.5 887.7 643.0 886.0C630.5 884.3 621.3 883.5 597.0 884.0C572.7 884.5 534.5 888.2 497.0 889.0C459.5 889.8 406.8 888.5 372.0 889.0C337.2 889.5 306.7 891.5 288.0 892.0C269.3 892.5 264.7 912.2 260.0 892.0C255.3 871.8 255.3 791.2 260.0 771.0Z"/></clipPath><path d="M260.0 771.0C264.7 750.8 261.0 771.7 288.0 771.0C315.0 770.3 385.7 769.3 422.0 767.0C458.3 764.7 479.5 760.8 506.0 757.0C532.5 753.2 558.2 748.2 581.0 744.0C603.8 739.8 623.0 735.5 643.0 732.0C663.0 728.5 685.0 724.2 701.0 723.0C717.0 721.8 724.3 723.2 739.0 725.0C753.7 726.8 773.2 730.8 789.0 734.0C804.8 737.2 822.2 743.0 834.0 744.0C845.8 745.0 854.2 741.2 860.0 740.0C865.8 738.8 865.0 740.5 869.0 737.0C873.0 733.5 880.8 725.2 884.0 719.0C887.2 712.8 887.5 709.5 888.0 700.0C888.5 690.5 887.7 674.0 887.0 662.0C886.3 650.0 881.8 635.3 884.0 628.0C886.2 620.7 875.7 616.0 900.0 618.0C924.3 620.0 1006.5 633.0 1030.0 640.0C1053.5 647.0 1039.3 653.7 1041.0 660.0C1042.7 666.3 1040.5 671.3 1040.0 678.0C1039.5 684.7 1038.2 692.7 1038.0 700.0C1037.8 707.3 1037.5 716.3 1039.0 722.0C1040.5 727.7 1042.0 731.4 1047.0 734.0C1052.0 736.6 1056.5 738.5 1069.0 737.5C1081.5 736.5 1105.3 731.9 1122.0 728.0C1138.7 724.1 1156.0 716.8 1169.0 714.0C1182.0 711.2 1187.0 710.7 1200.0 711.0C1213.0 711.3 1230.3 713.7 1247.0 716.0C1263.7 718.3 1282.5 722.0 1300.0 725.0C1317.5 728.0 1332.5 731.7 1352.0 734.0C1371.5 736.3 1395.5 738.2 1417.0 739.0C1438.5 739.8 1462.2 740.3 1481.0 739.0C1499.8 737.7 1513.7 733.5 1530.0 731.0C1546.3 728.5 1555.3 725.2 1579.0 724.0C1602.7 722.8 1651.8 724.0 1672.0 724.0C1692.2 724.0 1695.3 707.5 1700.0 724.0C1704.7 740.5 1704.7 806.5 1700.0 823.0C1695.3 839.5 1686.8 821.2 1672.0 823.0C1657.2 824.8 1632.0 831.5 1611.0 834.0C1590.0 836.5 1567.7 837.2 1546.0 838.0C1524.3 838.8 1502.5 837.5 1481.0 839.0C1459.5 840.5 1438.5 844.8 1417.0 847.0C1395.5 849.2 1373.7 850.8 1352.0 852.0C1330.3 853.2 1303.3 853.3 1287.0 854.0C1270.7 854.7 1262.7 854.3 1254.0 856.0C1245.3 857.7 1239.8 859.0 1235.0 864.0C1230.2 869.0 1227.5 874.7 1225.0 886.0C1222.5 897.3 1221.0 915.5 1220.0 932.0C1219.0 948.5 1219.2 972.0 1219.0 985.0C1218.8 998.0 1302.5 1005.8 1219.0 1010.0C1135.5 1014.2 801.5 1014.2 718.0 1010.0C634.5 1005.8 720.0 995.3 718.0 985.0C716.0 974.7 710.8 959.7 706.0 948.0C701.2 936.3 694.7 924.0 689.0 915.0C683.3 906.0 679.7 898.8 672.0 894.0C664.3 889.2 655.5 887.7 643.0 886.0C630.5 884.3 621.3 883.5 597.0 884.0C572.7 884.5 534.5 888.2 497.0 889.0C459.5 889.8 406.8 888.5 372.0 889.0C337.2 889.5 306.7 891.5 288.0 892.0C269.3 892.5 264.7 912.2 260.0 892.0C255.3 871.8 255.3 791.2 260.0 771.0Z" fill="#cda068"/><g clip-path="url(#cpT)"><path d="M260.0 813.0C287.0 812.5 381.0 811.3 422.0 810.0C463.0 808.7 479.5 806.7 506.0 805.0C532.5 803.3 558.2 801.0 581.0 800.0C603.8 799.0 623.0 798.5 643.0 799.0C663.0 799.5 684.0 800.7 701.0 803.0C718.0 805.3 737.7 811.3 745.0 813.0" fill="none" stroke="#edc389" stroke-width="32" filter="url(#b14)" opacity="0.95" stroke-linecap="round"/><path d="M260.0 871.0C278.7 870.5 332.5 868.5 372.0 868.0C411.5 867.5 459.5 868.8 497.0 868.0C534.5 867.2 572.7 863.5 597.0 863.0C621.3 862.5 630.5 863.3 643.0 865.0C655.5 866.7 667.2 871.7 672.0 873.0" fill="none" stroke="#8a683c" stroke-width="62" filter="url(#b14)" opacity="0.9" stroke-linecap="round"/><path d="M260.0 893.0C278.7 892.5 332.5 890.5 372.0 890.0C411.5 889.5 459.5 890.8 497.0 890.0C534.5 889.2 572.7 885.5 597.0 885.0C621.3 884.5 630.5 885.3 643.0 887.0C655.5 888.7 664.3 890.2 672.0 895.0C679.7 899.8 683.3 907.0 689.0 916.0C694.7 925.0 701.3 937.5 706.0 949.0C710.7 960.5 714.7 974.8 717.0 985.0C719.3 995.2 719.5 1005.8 720.0 1010.0" fill="none" stroke="#553c1e" stroke-width="36" filter="url(#b8)" opacity="0.95" stroke-linecap="round"/><path d="M260.0 893.0C278.7 892.5 332.5 890.5 372.0 890.0C411.5 889.5 459.5 890.8 497.0 890.0C534.5 889.2 572.7 885.5 597.0 885.0C621.3 884.5 630.5 885.3 643.0 887.0C655.5 888.7 664.3 890.2 672.0 895.0C679.7 899.8 683.3 907.0 689.0 916.0C694.7 925.0 701.3 937.5 706.0 949.0C710.7 960.5 714.7 974.8 717.0 985.0C719.3 995.2 719.5 1005.8 720.0 1010.0" fill="none" stroke="#24170a" stroke-width="11" filter="url(#b4)" opacity="0.95" stroke-linecap="round"/><path d="M260.0 770.0C287.0 769.3 381.0 768.3 422.0 766.0C463.0 763.7 479.5 759.8 506.0 756.0C532.5 752.2 558.2 747.2 581.0 743.0C603.8 738.8 623.0 734.5 643.0 731.0C663.0 727.5 685.0 723.2 701.0 722.0C717.0 720.8 724.3 722.2 739.0 724.0C753.7 725.8 773.2 729.8 789.0 733.0C804.8 736.2 822.2 742.0 834.0 743.0C845.8 744.0 855.7 739.7 860.0 739.0" fill="none" stroke="#a27d4b" stroke-width="9" filter="url(#b4)" opacity="0.75" stroke-linecap="round"/><path d="M1190.0 748.0C1206.2 751.3 1260.0 763.7 1287.0 768.0C1314.0 772.3 1319.7 773.0 1352.0 774.0C1384.3 775.0 1443.2 775.7 1481.0 774.0C1518.8 772.3 1542.5 766.7 1579.0 764.0C1615.5 761.3 1679.8 759.0 1700.0 758.0" fill="none" stroke="#e8bd83" stroke-width="30" filter="url(#b14)" opacity="0.95" stroke-linecap="round"/><ellipse cx="1600" cy="757" rx="55" ry="20" fill="#f1c88e" filter="url(#b14)" opacity="0.8"/><path d="M1700.0 804.0C1685.2 805.8 1636.7 812.5 1611.0 815.0C1585.3 817.5 1567.7 818.2 1546.0 819.0C1524.3 819.8 1502.5 818.5 1481.0 820.0C1459.5 821.5 1438.5 825.8 1417.0 828.0C1395.5 830.2 1373.7 831.8 1352.0 833.0C1330.3 834.2 1303.3 834.3 1287.0 835.0C1270.7 835.7 1259.5 836.7 1254.0 837.0" fill="none" stroke="#8a683c" stroke-width="56" filter="url(#b14)" opacity="0.9" stroke-linecap="round"/><path d="M1700.0 824.0C1685.2 825.8 1636.7 832.5 1611.0 835.0C1585.3 837.5 1567.7 838.2 1546.0 839.0C1524.3 839.8 1502.5 838.5 1481.0 840.0C1459.5 841.5 1438.5 845.8 1417.0 848.0C1395.5 850.2 1373.7 851.8 1352.0 853.0C1330.3 854.2 1303.3 854.3 1287.0 855.0C1270.7 855.7 1262.5 855.3 1254.0 857.0C1245.5 858.7 1240.7 860.0 1236.0 865.0C1231.3 870.0 1227.7 883.3 1226.0 887.0" fill="none" stroke="#553c1e" stroke-width="34" filter="url(#b8)" opacity="0.95" stroke-linecap="round"/><path d="M1700.0 824.0C1685.2 825.8 1636.7 832.5 1611.0 835.0C1585.3 837.5 1567.7 838.2 1546.0 839.0C1524.3 839.8 1502.5 838.5 1481.0 840.0C1459.5 841.5 1438.5 845.8 1417.0 848.0C1395.5 850.2 1373.7 851.8 1352.0 853.0C1330.3 854.2 1303.3 854.3 1287.0 855.0C1270.7 855.7 1262.5 855.3 1254.0 857.0C1245.5 858.7 1240.7 860.0 1236.0 865.0C1231.3 870.0 1227.7 883.3 1226.0 887.0" fill="none" stroke="#24170a" stroke-width="11" filter="url(#b4)" opacity="0.95" stroke-linecap="round"/><path d="M1226.0 887.0C1225.2 894.5 1222.0 915.7 1221.0 932.0C1220.0 948.3 1220.2 972.0 1220.0 985.0C1219.8 998.0 1220.0 1005.8 1220.0 1010.0" fill="none" stroke="#8a683c" stroke-width="16" filter="url(#b8)" opacity="0.8" stroke-linecap="round"/><path d="M1047.0 733.0C1050.7 733.6 1056.5 737.5 1069.0 736.5C1081.5 735.5 1105.3 730.9 1122.0 727.0C1138.7 723.1 1156.0 715.8 1169.0 713.0C1182.0 710.2 1187.0 709.7 1200.0 710.0C1213.0 710.3 1230.3 712.7 1247.0 715.0C1263.7 717.3 1282.5 721.0 1300.0 724.0C1317.5 727.0 1332.5 730.7 1352.0 733.0C1371.5 735.3 1395.5 737.2 1417.0 738.0C1438.5 738.8 1462.2 739.3 1481.0 738.0C1499.8 736.7 1513.7 732.5 1530.0 730.0C1546.3 727.5 1550.7 724.2 1579.0 723.0C1607.3 721.8 1679.8 723.0 1700.0 723.0" fill="none" stroke="#a27d4b" stroke-width="9" filter="url(#b4)" opacity="0.75" stroke-linecap="round"/><ellipse cx="800" cy="905" rx="70" ry="85" fill="#e3b77d" filter="url(#b25)" opacity="0.75"/><ellipse cx="1130" cy="900" rx="70" ry="80" fill="#ddb177" filter="url(#b25)" opacity="0.55"/><ellipse cx="1010" cy="968" rx="90" ry="22" fill="#e2b67c" filter="url(#b14)" opacity="0.7"/><ellipse cx="800" cy="790" rx="60" ry="24" fill="#e0b47b" filter="url(#b14)" opacity="0.6"/><ellipse cx="1150" cy="745" rx="60" ry="20" fill="#e4b87e" filter="url(#b14)" opacity="0.8"/><path d="M676.0 884.0C680.3 888.0 694.2 897.3 702.0 908.0C709.8 918.7 717.0 931.8 723.0 948.0C729.0 964.2 735.5 995.5 738.0 1005.0" fill="none" stroke="#a07b49" stroke-width="12" filter="url(#b8)" opacity="0.6" stroke-linecap="round"/><path d="M1290.0 752.0C1285.3 757.0 1270.3 770.3 1262.0 782.0C1253.7 793.7 1245.0 809.0 1240.0 822.0C1235.0 835.0 1233.3 853.7 1232.0 860.0" fill="none" stroke="#a37e4c" stroke-width="14" filter="url(#b8)" opacity="0.5" stroke-linecap="round"/><path d="M880.0 620.0C907.7 600.8 1018.7 600.8 1046.0 620.0C1073.3 639.2 1051.7 711.7 1044.0 735.0C1036.3 758.3 1017.3 755.8 1000.0 760.0C982.7 764.2 960.0 764.2 940.0 760.0C920.0 755.8 890.0 758.3 880.0 735.0C870.0 711.7 852.3 639.2 880.0 620.0Z" fill="#b58d59" filter="url(#b8)" opacity=".95"/><path d="M886.0 628.0C886.3 633.7 887.5 650.0 888.0 662.0C888.5 674.0 889.5 690.7 889.0 700.0C888.5 709.3 887.7 712.5 885.0 718.0C882.3 723.5 877.7 729.0 873.0 733.0C868.3 737.0 859.7 740.5 857.0 742.0" fill="none" stroke="#5f4526" stroke-width="16" filter="url(#b4)" opacity="0.9" stroke-linecap="round"/><path d="M1041.0 672.0C1040.7 678.8 1039.0 703.8 1039.0 713.0C1039.0 722.2 1039.5 723.3 1041.0 727.0C1042.5 730.7 1046.8 733.7 1048.0 735.0" fill="none" stroke="#7d5e37" stroke-width="12" filter="url(#b4)" opacity="0.85" stroke-linecap="round"/><path d="M884.0 628.0C888.0 629.2 899.5 645.2 908.0 652.0C916.5 658.8 924.8 663.8 935.0 669.0C945.2 674.2 957.8 679.8 969.0 683.0C980.2 686.2 991.8 688.3 1002.0 688.0C1012.2 687.7 1023.3 683.3 1030.0 681.0C1036.7 678.7 1040.0 673.5 1042.0 674.0C1044.0 674.5 1044.0 680.7 1042.0 684.0C1040.0 687.3 1037.0 691.3 1030.0 694.0C1023.0 696.7 1010.8 699.7 1000.0 700.0C989.2 700.3 976.7 698.7 965.0 696.0C953.3 693.3 940.8 689.3 930.0 684.0C919.2 678.7 907.7 670.5 900.0 664.0C892.3 657.5 886.7 651.0 884.0 645.0C881.3 639.0 880.0 626.8 884.0 628.0Z" fill="#4a3318" filter="url(#b4)" opacity=".95"/><path d="M948.0 735.0C948.3 740.8 948.3 758.3 950.0 770.0C951.7 781.7 956.7 799.2 958.0 805.0" fill="none" stroke="#f0c88e" stroke-width="9" filter="url(#b4)" opacity="0.85" stroke-linecap="round"/><path d="M1000.0 745.0C999.3 750.8 997.3 769.5 996.0 780.0C994.7 790.5 992.7 803.3 992.0 808.0" fill="none" stroke="#e8be84" stroke-width="8" filter="url(#b4)" opacity="0.7" stroke-linecap="round"/><path d="M925.0 690.0C926.2 700.0 925.8 729.2 932.0 750.0C938.2 770.8 957.0 804.2 962.0 815.0" fill="none" stroke="#a8834f" stroke-width="8" filter="url(#b4)" opacity="0.55" stroke-linecap="round"/><path d="M1020.0 700.0C1019.0 710.0 1017.3 740.8 1014.0 760.0C1010.7 779.2 1002.3 805.8 1000.0 815.0" fill="none" stroke="#a8834f" stroke-width="8" filter="url(#b4)" opacity="0.5" stroke-linecap="round"/><path d="M835.0 772.0C845.8 776.7 880.0 792.0 900.0 800.0C920.0 808.0 941.3 815.3 955.0 820.0C968.7 824.7 977.5 826.7 982.0 828.0" fill="none" stroke="#ad8652" stroke-width="7" filter="url(#b4)" opacity="0.8" stroke-linecap="round"/><path d="M988.0 828.0C992.0 825.7 1000.0 819.5 1012.0 814.0C1024.0 808.5 1041.2 801.2 1060.0 795.0C1078.8 788.8 1114.2 780.0 1125.0 777.0" fill="none" stroke="#ad8652" stroke-width="7" filter="url(#b4)" opacity="0.75" stroke-linecap="round"/><path d="M840.0 783.0C850.0 787.7 880.8 802.8 900.0 811.0C919.2 819.2 945.8 828.5 955.0 832.0" fill="none" stroke="#e6bb82" stroke-width="7" filter="url(#b4)" opacity="0.7" stroke-linecap="round"/><path d="M1015.0 826.0C1022.5 823.0 1042.5 814.0 1060.0 808.0C1077.5 802.0 1110.0 793.0 1120.0 790.0" fill="none" stroke="#e4b97f" stroke-width="7" filter="url(#b4)" opacity="0.6" stroke-linecap="round"/><ellipse cx="985" cy="818" rx="10" ry="12" fill="#9c7847" filter="url(#b4)" opacity="0.6"/><path d="M987.0 835.0C987.5 845.8 989.5 889.2 990.0 900.0" fill="none" stroke="#b78f5b" stroke-width="6" filter="url(#b4)" opacity="0.5" stroke-linecap="round"/><ellipse cx="962" cy="858" rx="22" ry="20" fill="#e3b880" filter="url(#b8)" opacity="0.7"/><ellipse cx="1012" cy="860" rx="22" ry="20" fill="#e3b880" filter="url(#b8)" opacity="0.7"/></g><clipPath id="cpF"><path d="M846.0 470.0C846.7 453.3 846.0 442.5 848.0 430.0C850.0 417.5 852.7 405.0 858.0 395.0C863.3 385.0 869.7 377.5 880.0 370.0C890.3 362.5 906.7 354.2 920.0 350.0C933.3 345.8 945.3 346.3 960.0 345.0C974.7 343.7 993.0 340.8 1008.0 342.0C1023.0 343.2 1037.2 347.0 1050.0 352.0C1062.8 357.0 1075.7 364.8 1085.0 372.0C1094.3 379.2 1101.2 385.3 1106.0 395.0C1110.8 404.7 1112.0 418.8 1114.0 430.0C1116.0 441.2 1117.0 449.8 1118.0 462.0C1119.0 474.2 1120.2 490.5 1120.0 503.0C1119.8 515.5 1118.5 525.8 1117.0 537.0C1115.5 548.2 1113.8 559.5 1111.0 570.0C1108.2 580.5 1105.0 589.3 1100.0 600.0C1095.0 610.7 1088.2 623.7 1081.0 634.0C1073.8 644.3 1064.8 654.5 1057.0 662.0C1049.2 669.5 1042.8 675.0 1034.0 679.0C1025.2 683.0 1014.3 685.3 1004.0 686.0C993.7 686.7 982.0 685.2 972.0 683.0C962.0 680.8 953.2 677.3 944.0 673.0C934.8 668.7 924.7 662.5 917.0 657.0C909.3 651.5 904.2 646.5 898.0 640.0C891.8 633.5 885.8 626.0 880.0 618.0C874.2 610.0 868.2 601.0 863.0 592.0C857.8 583.0 852.2 574.3 849.0 564.0C845.8 553.7 844.5 545.7 844.0 530.0C843.5 514.3 845.3 486.7 846.0 470.0Z"/></clipPath><clipPath id="cpE"><path d="M852.0 492.0C849.7 478.7 843.7 486.5 838.0 486.0C832.3 485.5 823.5 486.8 818.0 489.0C812.5 491.2 807.8 494.7 805.0 499.0C802.2 503.3 801.2 509.0 801.0 515.0C800.8 521.0 802.3 529.2 804.0 535.0C805.7 540.8 807.8 545.8 811.0 550.0C814.2 554.2 818.5 557.2 823.0 560.0C827.5 562.8 833.2 566.0 838.0 567.0C842.8 568.0 849.7 578.5 852.0 566.0C854.3 553.5 854.3 505.3 852.0 492.0Z"/></clipPath><path d="M852.0 492.0C849.7 478.7 843.7 486.5 838.0 486.0C832.3 485.5 823.5 486.8 818.0 489.0C812.5 491.2 807.8 494.7 805.0 499.0C802.2 503.3 801.2 509.0 801.0 515.0C800.8 521.0 802.3 529.2 804.0 535.0C805.7 540.8 807.8 545.8 811.0 550.0C814.2 554.2 818.5 557.2 823.0 560.0C827.5 562.8 833.2 566.0 838.0 567.0C842.8 568.0 849.7 578.5 852.0 566.0C854.3 553.5 854.3 505.3 852.0 492.0Z" fill="#c99d66"/><g clip-path="url(#cpE)"><path d="M852.0 492.0C849.7 478.7 843.7 486.5 838.0 486.0C832.3 485.5 823.5 486.8 818.0 489.0C812.5 491.2 807.8 494.7 805.0 499.0C802.2 503.3 801.2 509.0 801.0 515.0C800.8 521.0 802.3 529.2 804.0 535.0C805.7 540.8 807.8 545.8 811.0 550.0C814.2 554.2 818.5 557.2 823.0 560.0C827.5 562.8 833.2 566.0 838.0 567.0C842.8 568.0 849.7 578.5 852.0 566.0C854.3 553.5 854.3 505.3 852.0 492.0Z" fill="none" stroke="#6a4d2b" stroke-width="9" filter="url(#b4)"/><path d="M845.0 500.0C842.2 499.5 833.0 496.2 828.0 497.0C823.0 497.8 817.7 500.8 815.0 505.0C812.3 509.2 811.5 516.2 812.0 522.0C812.5 527.8 814.7 535.0 818.0 540.0C821.3 545.0 827.3 549.3 832.0 552.0C836.7 554.7 843.7 555.3 846.0 556.0" fill="none" stroke="#7d5d36" stroke-width="6" filter="url(#b2)" opacity=".9"/><path d="M836.0 493.0C833.3 493.3 824.5 492.8 820.0 495.0C815.5 497.2 811.2 501.0 809.0 506.0C806.8 511.0 806.3 519.0 807.0 525.0C807.7 531.0 812.0 539.2 813.0 542.0" fill="none" stroke="#e0b47c" stroke-width="4" filter="url(#b2)" opacity=".9"/><rect x="840" y="480" width="16" height="95" fill="#5e4325" filter="url(#b4)" opacity=".8"/></g><path d="M846.0 470.0C846.7 453.3 846.0 442.5 848.0 430.0C850.0 417.5 852.7 405.0 858.0 395.0C863.3 385.0 869.7 377.5 880.0 370.0C890.3 362.5 906.7 354.2 920.0 350.0C933.3 345.8 945.3 346.3 960.0 345.0C974.7 343.7 993.0 340.8 1008.0 342.0C1023.0 343.2 1037.2 347.0 1050.0 352.0C1062.8 357.0 1075.7 364.8 1085.0 372.0C1094.3 379.2 1101.2 385.3 1106.0 395.0C1110.8 404.7 1112.0 418.8 1114.0 430.0C1116.0 441.2 1117.0 449.8 1118.0 462.0C1119.0 474.2 1120.2 490.5 1120.0 503.0C1119.8 515.5 1118.5 525.8 1117.0 537.0C1115.5 548.2 1113.8 559.5 1111.0 570.0C1108.2 580.5 1105.0 589.3 1100.0 600.0C1095.0 610.7 1088.2 623.7 1081.0 634.0C1073.8 644.3 1064.8 654.5 1057.0 662.0C1049.2 669.5 1042.8 675.0 1034.0 679.0C1025.2 683.0 1014.3 685.3 1004.0 686.0C993.7 686.7 982.0 685.2 972.0 683.0C962.0 680.8 953.2 677.3 944.0 673.0C934.8 668.7 924.7 662.5 917.0 657.0C909.3 651.5 904.2 646.5 898.0 640.0C891.8 633.5 885.8 626.0 880.0 618.0C874.2 610.0 868.2 601.0 863.0 592.0C857.8 583.0 852.2 574.3 849.0 564.0C845.8 553.7 844.5 545.7 844.0 530.0C843.5 514.3 845.3 486.7 846.0 470.0Z" fill="#d2a56b"/><g clip-path="url(#cpF)"><ellipse cx="985" cy="415" rx="90" ry="42" fill="#facb90" filter="url(#b14)" opacity="0.95"/><ellipse cx="1078" cy="545" rx="28" ry="52" fill="#dbae74" filter="url(#b14)" opacity="0.8"/><ellipse cx="934" cy="548" rx="36" ry="34" fill="#f6cc93" filter="url(#b14)" opacity="0.95"/><path d="M846.0 450.0C845.7 463.3 843.5 511.0 844.0 530.0C844.5 549.0 845.8 553.7 849.0 564.0C852.2 574.3 857.8 583.0 863.0 592.0C868.2 601.0 874.2 610.0 880.0 618.0C885.8 626.0 891.8 633.5 898.0 640.0C904.2 646.5 909.3 651.5 917.0 657.0C924.7 662.5 934.8 668.7 944.0 673.0C953.2 677.3 967.3 681.3 972.0 683.0" fill="none" stroke="#7a5a32" stroke-width="64" filter="url(#b14)" opacity="0.85" stroke-linecap="round"/><path d="M846.0 450.0C845.7 463.3 843.5 511.0 844.0 530.0C844.5 549.0 845.8 553.7 849.0 564.0C852.2 574.3 857.8 583.0 863.0 592.0C868.2 601.0 874.2 610.0 880.0 618.0C885.8 626.0 891.8 633.5 898.0 640.0C904.2 646.5 909.3 651.5 917.0 657.0C924.7 662.5 934.8 668.7 944.0 673.0C953.2 677.3 962.0 680.8 972.0 683.0C982.0 685.2 993.7 686.7 1004.0 686.0C1014.3 685.3 1025.2 683.0 1034.0 679.0C1042.8 675.0 1053.2 664.8 1057.0 662.0" fill="none" stroke="#4e3719" stroke-width="26" filter="url(#b8)" opacity="0.95" stroke-linecap="round"/><path d="M863.0 592.0C865.8 596.3 874.2 610.0 880.0 618.0C885.8 626.0 891.8 633.5 898.0 640.0C904.2 646.5 909.3 651.5 917.0 657.0C924.7 662.5 934.8 668.7 944.0 673.0C953.2 677.3 962.0 680.8 972.0 683.0C982.0 685.2 993.7 686.7 1004.0 686.0C1014.3 685.3 1025.2 683.0 1034.0 679.0C1042.8 675.0 1053.2 664.8 1057.0 662.0" fill="none" stroke="#1a1006" stroke-width="5" filter="url(#b2)" opacity="0.9" stroke-linecap="round"/><path d="M1057.0 662.0C1061.0 657.3 1073.8 644.3 1081.0 634.0C1088.2 623.7 1095.0 610.7 1100.0 600.0C1105.0 589.3 1108.2 580.5 1111.0 570.0C1113.8 559.5 1115.5 548.2 1117.0 537.0C1118.5 525.8 1119.8 515.5 1120.0 503.0C1120.2 490.5 1119.0 474.2 1118.0 462.0C1117.0 449.8 1116.0 441.2 1114.0 430.0C1112.0 418.8 1107.3 400.8 1106.0 395.0" fill="none" stroke="#8a683c" stroke-width="20" filter="url(#b8)" opacity="0.8" stroke-linecap="round"/><path d="M858.0 400.0C861.7 396.7 869.7 386.0 880.0 380.0C890.3 374.0 906.7 367.3 920.0 364.0C933.3 360.7 945.3 361.3 960.0 360.0C974.7 358.7 993.0 355.0 1008.0 356.0C1023.0 357.0 1037.2 361.3 1050.0 366.0C1062.8 370.7 1076.0 377.7 1085.0 384.0C1094.0 390.3 1100.8 400.7 1104.0 404.0" fill="none" stroke="#9b7746" stroke-width="14" filter="url(#b8)" opacity="0.6" stroke-linecap="round"/><ellipse cx="928" cy="466" rx="40" ry="13" fill="#a8824f" filter="url(#b8)" opacity="0.75"/><ellipse cx="1066" cy="465" rx="38" ry="13" fill="#a8824f" filter="url(#b8)" opacity="0.75"/><ellipse cx="930" cy="506" rx="34" ry="7" fill="#b58e5a" filter="url(#b4)" opacity="0.6"/><ellipse cx="1062" cy="505" rx="34" ry="7" fill="#b58e5a" filter="url(#b4)" opacity="0.6"/><path d="M978.0 455.0C979.0 458.8 982.7 470.5 984.0 478.0C985.3 485.5 985.7 496.3 986.0 500.0" fill="none" stroke="#a8824f" stroke-width="12" filter="url(#b8)" opacity="0.6" stroke-linecap="round"/><path d="M1038.0 455.0C1037.3 458.8 1034.7 470.5 1034.0 478.0C1033.3 485.5 1034.0 496.3 1034.0 500.0" fill="none" stroke="#b08956" stroke-width="10" filter="url(#b8)" opacity="0.5" stroke-linecap="round"/><ellipse cx="1003" cy="488" rx="8" ry="28" fill="#f1cc96" filter="url(#b4)" opacity="0.9"/><ellipse cx="1010" cy="522" rx="7" ry="12" fill="#d9ae74" filter="url(#b4)" opacity="0.6"/><path d="M988.0 500.0C987.5 503.3 985.8 513.3 985.0 520.0C984.2 526.7 983.3 536.7 983.0 540.0" fill="none" stroke="#94713f" stroke-width="10" filter="url(#b4)" opacity="0.7" stroke-linecap="round"/><path d="M1036.0 515.0C1036.5 518.3 1038.5 531.7 1039.0 535.0" fill="none" stroke="#b08956" stroke-width="7" filter="url(#b4)" opacity="0.5" stroke-linecap="round"/><path d="M992.0 508.0C995.0 501.3 997.0 501.3 1002.0 500.0C1007.0 498.7 1017.2 498.3 1022.0 500.0C1026.8 501.7 1028.0 503.3 1031.0 510.0C1034.0 516.7 1038.5 532.3 1040.0 540.0C1041.5 547.7 1044.7 552.3 1040.0 556.0C1035.3 559.7 1021.0 561.7 1012.0 562.0C1003.0 562.3 990.7 561.7 986.0 558.0C981.3 554.3 983.0 548.3 984.0 540.0C985.0 531.7 989.0 514.7 992.0 508.0Z" fill="#b48d59" filter="url(#b4)" opacity="0.85"/><ellipse cx="992" cy="553" rx="9" ry="9" fill="#b58d58" filter="url(#b2)" opacity="0.95"/><ellipse cx="1034" cy="551" rx="8" ry="8.5" fill="#c39a63" filter="url(#b2)" opacity="0.9"/><ellipse cx="1014" cy="547" rx="13" ry="12" fill="#c59c65" filter="url(#b2)" opacity="0.95"/><ellipse cx="1018" cy="543" rx="7" ry="6" fill="#e3b77d" filter="url(#b2)" opacity="0.95"/><path d="M983.0 545.0C983.0 546.8 982.2 553.0 983.0 556.0C983.8 559.0 987.2 561.8 988.0 563.0" fill="none" stroke="#6d5030" stroke-width="4" filter="url(#b2)" opacity="0.9" stroke-linecap="round"/><path d="M985.0 560.0C985.2 561.3 987.8 563.2 990.0 564.0C992.2 564.8 995.7 565.3 998.0 565.0C1000.3 564.7 1002.2 561.8 1004.0 562.0C1005.8 562.2 1007.2 564.8 1009.0 566.0C1010.8 567.2 1013.0 569.0 1015.0 569.0C1017.0 569.0 1019.2 567.2 1021.0 566.0C1022.8 564.8 1024.2 562.5 1026.0 562.0C1027.8 561.5 1030.0 563.5 1032.0 563.0C1034.0 562.5 1036.5 560.8 1038.0 559.0C1039.5 557.2 1041.3 552.2 1041.0 552.0C1040.7 551.8 1038.0 557.2 1036.0 558.0C1034.0 558.8 1031.0 556.7 1029.0 557.0C1027.0 557.3 1026.2 558.8 1024.0 560.0C1021.8 561.2 1018.7 564.0 1016.0 564.0C1013.3 564.0 1010.3 561.2 1008.0 560.0C1005.7 558.8 1004.2 557.2 1002.0 557.0C999.8 556.8 997.2 559.2 995.0 559.0C992.8 558.8 990.7 555.8 989.0 556.0C987.3 556.2 984.8 558.7 985.0 560.0Z" fill="#2e1e0e" filter="url(#b1)" opacity="0.95"/><ellipse cx="997" cy="561" rx="4.5" ry="2.8" fill="#120a04" filter="url(#b1)" opacity="1.0"/><ellipse cx="1031" cy="559.5" rx="4" ry="2.6" fill="#120a04" filter="url(#b1)" opacity="1.0"/><ellipse cx="1015" cy="566.5" rx="5" ry="2.2" fill="#120a04" filter="url(#b1)" opacity="0.85"/><ellipse cx="1013" cy="577" rx="30" ry="7" fill="#a47e4b" filter="url(#b4)" opacity="0.7"/><path d="M962.0 611.0C959.7 610.5 970.5 608.2 975.0 606.0C979.5 603.8 984.2 601.1 989.0 598.0C993.8 594.9 1000.2 589.2 1003.7 587.5C1007.2 585.8 1008.0 587.4 1010.0 588.0C1012.0 588.6 1013.9 591.0 1015.7 591.0C1017.5 591.0 1019.3 588.6 1021.0 588.0C1022.7 587.4 1022.8 586.0 1026.0 587.5C1029.2 589.0 1035.4 593.5 1040.0 597.0C1044.6 600.5 1053.6 606.4 1053.7 608.3C1053.8 610.2 1045.3 608.8 1040.7 608.3C1036.1 607.8 1030.3 605.5 1026.0 605.2C1021.7 604.9 1018.5 606.4 1014.8 606.5C1011.1 606.6 1008.0 605.2 1003.7 605.6C999.4 606.0 996.0 608.1 989.0 609.0C982.0 609.9 964.3 611.5 962.0 611.0Z" fill="#b98869" filter="url(#b1)" opacity="1.0"/><path d="M966.0 612.0C966.7 609.7 982.7 610.8 989.0 610.0C995.3 609.2 999.4 607.3 1003.7 607.0C1008.0 606.7 1011.1 608.1 1014.8 608.0C1018.5 607.9 1021.7 606.2 1026.0 606.5C1030.3 606.8 1036.7 608.9 1040.7 609.5C1044.7 610.1 1050.1 607.9 1050.0 610.0C1049.9 612.1 1043.7 618.7 1040.0 622.0C1036.3 625.3 1032.2 628.1 1028.0 630.0C1023.8 631.9 1019.5 633.1 1014.8 633.3C1010.1 633.5 1005.0 632.5 1000.0 631.0C995.0 629.5 990.7 627.2 985.0 624.0C979.3 620.8 965.3 614.3 966.0 612.0Z" fill="#dfa587" filter="url(#b1)" opacity="1.0"/><ellipse cx="1015" cy="618" rx="19" ry="6" fill="#f5c3a6" filter="url(#b2)" opacity="0.95"/><ellipse cx="1008" cy="595" rx="12" ry="3.5" fill="#d9aa8a" filter="url(#b2)" opacity="0.8"/><path d="M962.0 611.0C966.5 610.7 982.0 609.9 989.0 609.0C996.0 608.1 999.4 606.0 1003.7 605.6C1008.0 605.2 1011.1 606.6 1014.8 606.5C1018.5 606.4 1021.7 604.9 1026.0 605.2C1030.3 605.5 1036.1 607.8 1040.7 608.3C1045.3 608.8 1051.5 608.3 1053.7 608.3" fill="none" stroke="#6e4a30" stroke-width="2.2" filter="url(#b1)" opacity="0.9" stroke-linecap="round"/><ellipse cx="1014" cy="641" rx="26" ry="6" fill="#9c7747" filter="url(#b4)" opacity="0.75"/><ellipse cx="1011" cy="657" rx="22" ry="13" fill="#edc48c" filter="url(#b8)" opacity="0.9"/></g><path d="M895.0 485.0C895.3 481.0 904.2 476.8 910.0 474.0C915.8 471.2 923.7 468.3 930.0 468.0C936.3 467.7 943.0 469.3 948.0 472.0C953.0 474.7 956.5 479.7 960.0 484.0C963.5 488.3 969.8 495.0 969.0 498.0C968.2 501.0 961.3 501.2 955.0 502.0C948.7 502.8 938.8 503.7 931.0 503.0C923.2 502.3 914.0 501.0 908.0 498.0C902.0 495.0 894.7 489.0 895.0 485.0Z" fill="#7a5a3a" filter="url(#b1)"/><path d="M900.0 485.5C900.3 482.7 907.0 480.0 912.0 478.0C917.0 476.0 924.3 473.7 930.0 473.5C935.7 473.3 941.3 474.8 946.0 477.0C950.7 479.2 954.7 483.6 958.0 487.0C961.3 490.4 967.0 495.4 966.0 497.5C965.0 499.6 957.8 499.1 952.0 499.5C946.2 499.9 938.0 500.8 931.0 500.0C924.0 499.2 915.2 497.4 910.0 495.0C904.8 492.6 899.7 488.3 900.0 485.5Z" fill="#dcc7be"/><circle cx="946" cy="492" r="7.500" fill="#3a1d0e"/><path d="M959 489q6 3 7 9l-8 1z" fill="#eeaaa2"/><path d="M897.0 490.0C899.2 491.5 904.3 496.8 910.0 499.0C915.7 501.2 924.0 502.8 931.0 503.5C938.0 504.2 946.2 503.6 952.0 503.0C957.8 502.4 963.7 500.5 966.0 500.0" fill="none" stroke="#5a4028" stroke-width="2.500" filter="url(#b1)"/><path d="M1036.0 498.0C1035.7 494.8 1042.3 488.0 1046.0 484.0C1049.7 480.0 1053.7 476.5 1058.0 474.0C1062.3 471.5 1067.0 469.0 1072.0 469.0C1077.0 469.0 1082.8 471.3 1088.0 474.0C1093.2 476.7 1102.7 481.0 1103.0 485.0C1103.3 489.0 1096.2 495.0 1090.0 498.0C1083.8 501.0 1073.0 502.2 1066.0 503.0C1059.0 503.8 1053.0 503.8 1048.0 503.0C1043.0 502.2 1036.3 501.2 1036.0 498.0Z" fill="#7a5a3a" filter="url(#b1)"/><path d="M1039.0 497.5C1038.7 495.3 1044.5 490.2 1048.0 487.0C1051.5 483.8 1056.0 480.1 1060.0 478.0C1064.0 475.9 1067.5 474.3 1072.0 474.5C1076.5 474.7 1082.5 477.2 1087.0 479.0C1091.5 480.8 1098.8 482.8 1099.0 485.5C1099.2 488.2 1093.5 492.6 1088.0 495.0C1082.5 497.4 1072.3 499.2 1066.0 500.0C1059.7 500.8 1054.5 500.4 1050.0 500.0C1045.5 499.6 1039.3 499.7 1039.0 497.5Z" fill="#dcc7be"/><circle cx="1074" cy="492" r="7.500" fill="#3a1d0e"/><path d="M1039 498q1 -6 6 -9l1 10z" fill="#eeaaa2"/><path d="M1038.0 501.0C1040.0 501.4 1045.3 503.1 1050.0 503.5C1054.7 503.9 1059.7 504.2 1066.0 503.5C1072.3 502.8 1082.0 501.4 1088.0 499.0C1094.0 496.6 1099.7 490.7 1102.0 489.0" fill="none" stroke="#5a4028" stroke-width="2.500" filter="url(#b1)"/><path d="M931.6 466.6L932 486L913.3 484.2Z" fill="#bcc4cf"/><path d="M931.6 466.6L949.9 481.5L932 486Z" fill="#f3f5f7"/><path d="M913.3 484.2L932 486L931.6 499.7Z" fill="#8893a3"/><path d="M932 486L949.9 481.5L931.6 499.7Z" fill="#c3c9d2"/><path d="M1060.3 467.2L1061 486L1042.6 484.2Z" fill="#bcc4cf"/><path d="M1060.3 467.2L1077.2 482.8L1061 486Z" fill="#f3f5f7"/><path d="M1042.6 484.2L1061 486L1060.3 499.7Z" fill="#8893a3"/><path d="M1061 486L1077.2 482.8L1060.3 499.7Z" fill="#c3c9d2"/><path d="M910.600 458.400H947.200L952.600 480.100L947.900 508.500H912.700ZM910.600 458.400L915.300 474.700L912.700 508.500M947.200 458.400L943.800 474.700L947.900 508.500M907.900 487H914.700M943.200 477.400H951" stroke="#f2e61c" stroke-width="1.200" fill="none" stroke-linejoin="round"/><path d="M1041.300 459.100H1074.500L1080.600 484.200L1077.200 508.500H1042.600L1035.900 486.900ZM1041.300 459.100L1047.400 474.700L1042.600 508.500M1074.500 459.100L1070.400 474.700L1077.200 508.500M1035.900 486.900H1044" stroke="#f2e61c" stroke-width="1.200" fill="none" stroke-linejoin="round"/><path d="M882.9 463.9C882.6 463.4 886.1 456.8 888.5 454.0C890.9 451.2 893.3 449.1 897.0 447.0C900.7 444.9 905.9 442.5 910.6 441.2C915.3 439.9 919.3 439.6 925.0 439.2C930.7 438.8 938.1 438.6 945.0 438.8C951.9 439.0 961.9 438.7 966.5 440.2C971.1 441.7 974.0 446.7 972.9 447.6C971.8 448.5 965.5 446.4 960.0 445.8C954.5 445.2 946.7 444.3 940.0 444.0C933.3 443.7 925.2 443.6 920.0 444.0C914.8 444.4 912.7 445.0 909.0 446.2C905.3 447.4 901.2 449.2 898.0 451.0C894.8 452.8 892.5 454.9 890.0 457.0C887.5 459.1 883.1 464.4 882.9 463.9Z" fill="#0c0906"/><path d="M1046.0 448.3C1044.6 447.5 1047.4 442.5 1051.4 441.0C1055.4 439.5 1064.4 439.6 1070.0 439.3C1075.6 439.1 1080.7 438.9 1085.0 439.5C1089.3 440.1 1093.0 441.3 1096.0 442.8C1099.0 444.3 1101.2 446.3 1103.0 448.3C1104.8 450.3 1105.9 452.4 1107.0 455.0C1108.1 457.6 1110.1 463.6 1109.7 463.9C1109.3 464.2 1106.4 459.1 1104.5 457.0C1102.6 454.9 1100.9 452.8 1098.5 451.0C1096.1 449.2 1093.9 447.5 1090.0 446.5C1086.1 445.5 1080.0 444.9 1075.0 444.8C1070.0 444.7 1064.8 445.4 1060.0 446.0C1055.2 446.6 1047.4 449.1 1046.0 448.3Z" fill="#0c0906"/><clipPath id="cpH"><path d="M806.0 488.0C801.8 485.3 799.7 476.3 797.0 470.0C794.3 463.7 791.5 455.7 790.0 450.0C788.5 444.3 786.8 442.5 788.0 436.0C789.2 429.5 794.2 418.0 797.0 411.0C799.8 404.0 805.5 400.5 805.0 394.0C804.5 387.5 797.0 380.3 794.0 372.0C791.0 363.7 787.5 352.3 787.0 344.0C786.5 335.7 789.0 329.3 791.0 322.0C793.0 314.7 796.2 308.3 799.0 300.0C801.8 291.7 804.2 280.8 808.0 272.0C811.8 263.2 817.3 254.0 822.0 247.0C826.7 240.0 829.7 234.7 836.0 230.0C842.3 225.3 850.8 220.0 860.0 219.0C869.2 218.0 882.7 224.3 891.0 224.0C899.3 223.7 902.5 220.0 910.0 217.0C917.5 214.0 928.0 208.8 936.0 206.0C944.0 203.2 949.7 200.8 958.0 200.0C966.3 199.2 976.3 200.8 986.0 201.0C995.7 201.2 1007.7 199.5 1016.0 201.0C1024.3 202.5 1029.0 206.7 1036.0 210.0C1043.0 213.3 1049.7 217.8 1058.0 221.0C1066.3 224.2 1077.7 225.5 1086.0 229.0C1094.3 232.5 1101.7 237.5 1108.0 242.0C1114.3 246.5 1119.8 251.0 1124.0 256.0C1128.2 261.0 1130.2 265.7 1133.0 272.0C1135.8 278.3 1138.2 284.3 1141.0 294.0C1143.8 303.7 1147.2 312.3 1150.0 330.0C1152.8 347.7 1157.7 376.7 1158.0 400.0C1158.3 423.3 1155.8 454.7 1152.0 470.0C1148.2 485.3 1139.7 488.8 1135.0 492.0C1130.3 495.2 1126.7 494.0 1124.0 489.0C1121.3 484.0 1120.5 471.2 1119.0 462.0C1117.5 452.8 1116.2 441.0 1115.0 434.0C1113.8 427.0 1113.5 425.2 1112.0 420.0C1110.5 414.8 1109.8 406.9 1106.0 403.0C1102.2 399.1 1095.5 399.0 1089.0 396.5C1082.5 394.0 1074.2 391.6 1067.0 388.0C1059.8 384.4 1053.0 378.8 1046.0 375.0C1039.0 371.2 1032.0 367.4 1025.0 365.0C1018.0 362.6 1011.2 361.2 1004.0 360.5C996.8 359.8 987.3 357.4 982.0 360.5C976.7 363.6 978.7 376.2 972.0 379.0C965.3 381.8 948.2 379.5 942.0 377.5C935.8 375.5 937.8 368.8 935.0 367.0C932.2 365.2 929.5 365.7 925.0 367.0C920.5 368.3 913.7 372.5 908.0 375.0C902.3 377.5 897.0 378.8 891.0 382.0C885.0 385.2 877.0 388.2 872.0 394.5C867.0 400.8 864.2 412.4 861.0 420.0C857.8 427.6 855.0 433.7 853.0 440.0C851.0 446.3 850.0 452.7 849.0 458.0C848.0 463.3 848.5 468.3 847.0 472.0C845.5 475.7 844.2 477.7 840.0 480.0C835.8 482.3 827.7 484.7 822.0 486.0C816.3 487.3 810.2 490.7 806.0 488.0Z"/></clipPath><path d="M806.0 488.0C801.8 485.3 799.7 476.3 797.0 470.0C794.3 463.7 791.5 455.7 790.0 450.0C788.5 444.3 786.8 442.5 788.0 436.0C789.2 429.5 794.2 418.0 797.0 411.0C799.8 404.0 805.5 400.5 805.0 394.0C804.5 387.5 797.0 380.3 794.0 372.0C791.0 363.7 787.5 352.3 787.0 344.0C786.5 335.7 789.0 329.3 791.0 322.0C793.0 314.7 796.2 308.3 799.0 300.0C801.8 291.7 804.2 280.8 808.0 272.0C811.8 263.2 817.3 254.0 822.0 247.0C826.7 240.0 829.7 234.7 836.0 230.0C842.3 225.3 850.8 220.0 860.0 219.0C869.2 218.0 882.7 224.3 891.0 224.0C899.3 223.7 902.5 220.0 910.0 217.0C917.5 214.0 928.0 208.8 936.0 206.0C944.0 203.2 949.7 200.8 958.0 200.0C966.3 199.2 976.3 200.8 986.0 201.0C995.7 201.2 1007.7 199.5 1016.0 201.0C1024.3 202.5 1029.0 206.7 1036.0 210.0C1043.0 213.3 1049.7 217.8 1058.0 221.0C1066.3 224.2 1077.7 225.5 1086.0 229.0C1094.3 232.5 1101.7 237.5 1108.0 242.0C1114.3 246.5 1119.8 251.0 1124.0 256.0C1128.2 261.0 1130.2 265.7 1133.0 272.0C1135.8 278.3 1138.2 284.3 1141.0 294.0C1143.8 303.7 1147.2 312.3 1150.0 330.0C1152.8 347.7 1157.7 376.7 1158.0 400.0C1158.3 423.3 1155.8 454.7 1152.0 470.0C1148.2 485.3 1139.7 488.8 1135.0 492.0C1130.3 495.2 1126.7 494.0 1124.0 489.0C1121.3 484.0 1120.5 471.2 1119.0 462.0C1117.5 452.8 1116.2 441.0 1115.0 434.0C1113.8 427.0 1113.5 425.2 1112.0 420.0C1110.5 414.8 1109.8 406.9 1106.0 403.0C1102.2 399.1 1095.5 399.0 1089.0 396.5C1082.5 394.0 1074.2 391.6 1067.0 388.0C1059.8 384.4 1053.0 378.8 1046.0 375.0C1039.0 371.2 1032.0 367.4 1025.0 365.0C1018.0 362.6 1011.2 361.2 1004.0 360.5C996.8 359.8 987.3 357.4 982.0 360.5C976.7 363.6 978.7 376.2 972.0 379.0C965.3 381.8 948.2 379.5 942.0 377.5C935.8 375.5 937.8 368.8 935.0 367.0C932.2 365.2 929.5 365.7 925.0 367.0C920.5 368.3 913.7 372.5 908.0 375.0C902.3 377.5 897.0 378.8 891.0 382.0C885.0 385.2 877.0 388.2 872.0 394.5C867.0 400.8 864.2 412.4 861.0 420.0C857.8 427.6 855.0 433.7 853.0 440.0C851.0 446.3 850.0 452.7 849.0 458.0C848.0 463.3 848.5 468.3 847.0 472.0C845.5 475.7 844.2 477.7 840.0 480.0C835.8 482.3 827.7 484.7 822.0 486.0C816.3 487.3 810.2 490.7 806.0 488.0Z" fill="#2f1c0f"/><g clip-path="url(#cpH)"><g filter="url(#b4)" opacity=".9"><ellipse cx="955" cy="364" rx="16" ry="13" fill="#130a05" transform="rotate(47 955 364)"/><ellipse cx="1086" cy="339" rx="13" ry="9" fill="#44291a" transform="rotate(23 1086 339)"/><ellipse cx="934" cy="333" rx="14" ry="12" fill="#1a0f08" transform="rotate(15 934 333)"/><ellipse cx="798" cy="459" rx="13" ry="12" fill="#44291a" transform="rotate(132 798 459)"/><ellipse cx="873" cy="285" rx="7" ry="4" fill="#0d0703" transform="rotate(141 873 285)"/><ellipse cx="1050" cy="292" rx="9" ry="7" fill="#4b2e1d" transform="rotate(102 1050 292)"/><ellipse cx="825" cy="284" rx="8" ry="5" fill="#130a05" transform="rotate(53 825 284)"/><ellipse cx="942" cy="366" rx="9" ry="8" fill="#523422" transform="rotate(85 942 366)"/><ellipse cx="959" cy="343" rx="14" ry="9" fill="#130a05" transform="rotate(107 959 343)"/><ellipse cx="1026" cy="233" rx="11" ry="8" fill="#523422" transform="rotate(5 1026 233)"/><ellipse cx="864" cy="315" rx="16" ry="13" fill="#44291a" transform="rotate(54 864 315)"/><ellipse cx="930" cy="220" rx="9" ry="8" fill="#523422" transform="rotate(95 930 220)"/><ellipse cx="1018" cy="236" rx="13" ry="12" fill="#3e2516" transform="rotate(46 1018 236)"/><ellipse cx="1020" cy="290" rx="9" ry="8" fill="#130a05" transform="rotate(161 1020 290)"/><ellipse cx="1141" cy="460" rx="13" ry="10" fill="#4b2e1d" transform="rotate(131 1141 460)"/><ellipse cx="1049" cy="274" rx="15" ry="13" fill="#44291a" transform="rotate(17 1049 274)"/><ellipse cx="832" cy="340" rx="14" ry="11" fill="#44291a" transform="rotate(52 832 340)"/><ellipse cx="939" cy="272" rx="7" ry="5" fill="#130a05" transform="rotate(23 939 272)"/><ellipse cx="1153" cy="393" rx="14" ry="12" fill="#4b2e1d" transform="rotate(4 1153 393)"/><ellipse cx="963" cy="304" rx="10" ry="6" fill="#1a0f08" transform="rotate(123 963 304)"/><ellipse cx="810" cy="290" rx="8" ry="5" fill="#523422" transform="rotate(11 810 290)"/><ellipse cx="1123" cy="417" rx="14" ry="13" fill="#1f120a" transform="rotate(21 1123 417)"/><ellipse cx="1112" cy="322" rx="15" ry="14" fill="#0d0703" transform="rotate(97 1112 322)"/><ellipse cx="815" cy="388" rx="17" ry="16" fill="#0d0703" transform="rotate(177 815 388)"/><ellipse cx="1003" cy="329" rx="15" ry="10" fill="#1a0f08" transform="rotate(79 1003 329)"/><ellipse cx="1010" cy="341" rx="9" ry="8" fill="#3e2516" transform="rotate(65 1010 341)"/><ellipse cx="1121" cy="307" rx="8" ry="7" fill="#1f120a" transform="rotate(168 1121 307)"/><ellipse cx="1134" cy="346" rx="9" ry="7" fill="#3e2516" transform="rotate(51 1134 346)"/><ellipse cx="1115" cy="312" rx="13" ry="9" fill="#3e2516" transform="rotate(89 1115 312)"/><ellipse cx="889" cy="248" rx="12" ry="8" fill="#3e2516" transform="rotate(97 889 248)"/><ellipse cx="1020" cy="345" rx="10" ry="10" fill="#0d0703" transform="rotate(82 1020 345)"/><ellipse cx="1051" cy="367" rx="10" ry="9" fill="#44291a" transform="rotate(103 1051 367)"/><ellipse cx="956" cy="205" rx="15" ry="11" fill="#4b2e1d" transform="rotate(161 956 205)"/><ellipse cx="923" cy="221" rx="9" ry="8" fill="#4b2e1d" transform="rotate(120 923 221)"/><ellipse cx="986" cy="209" rx="9" ry="8" fill="#130a05" transform="rotate(100 986 209)"/><ellipse cx="869" cy="320" rx="16" ry="12" fill="#44291a" transform="rotate(160 869 320)"/><ellipse cx="914" cy="295" rx="17" ry="11" fill="#1a0f08" transform="rotate(54 914 295)"/><ellipse cx="876" cy="314" rx="8" ry="6" fill="#1f120a" transform="rotate(67 876 314)"/><ellipse cx="1126" cy="452" rx="10" ry="7" fill="#3e2516" transform="rotate(70 1126 452)"/><ellipse cx="968" cy="206" rx="15" ry="9" fill="#130a05" transform="rotate(136 968 206)"/><ellipse cx="838" cy="242" rx="12" ry="11" fill="#0d0703" transform="rotate(126 838 242)"/><ellipse cx="1069" cy="329" rx="13" ry="12" fill="#130a05" transform="rotate(133 1069 329)"/><ellipse cx="1143" cy="456" rx="13" ry="9" fill="#523422" transform="rotate(146 1143 456)"/><ellipse cx="972" cy="320" rx="8" ry="5" fill="#4b2e1d" transform="rotate(132 972 320)"/><ellipse cx="1129" cy="360" rx="17" ry="11" fill="#44291a" transform="rotate(16 1129 360)"/><ellipse cx="1134" cy="334" rx="16" ry="15" fill="#44291a" transform="rotate(121 1134 334)"/><ellipse cx="970" cy="299" rx="16" ry="16" fill="#1f120a" transform="rotate(27 970 299)"/><ellipse cx="857" cy="382" rx="16" ry="11" fill="#1a0f08" transform="rotate(9 857 382)"/><ellipse cx="858" cy="265" rx="14" ry="10" fill="#3e2516" transform="rotate(26 858 265)"/><ellipse cx="972" cy="371" rx="16" ry="13" fill="#0d0703" transform="rotate(5 972 371)"/><ellipse cx="926" cy="321" rx="12" ry="8" fill="#44291a" transform="rotate(135 926 321)"/><ellipse cx="866" cy="359" rx="13" ry="8" fill="#1f120a" transform="rotate(46 866 359)"/><ellipse cx="903" cy="292" rx="16" ry="11" fill="#1a0f08" transform="rotate(34 903 292)"/><ellipse cx="818" cy="313" rx="11" ry="11" fill="#130a05" transform="rotate(51 818 313)"/><ellipse cx="992" cy="351" rx="13" ry="8" fill="#44291a" transform="rotate(44 992 351)"/><ellipse cx="808" cy="481" rx="12" ry="11" fill="#3e2516" transform="rotate(109 808 481)"/><ellipse cx="978" cy="326" rx="13" ry="8" fill="#130a05" transform="rotate(46 978 326)"/><ellipse cx="938" cy="305" rx="11" ry="10" fill="#1a0f08" transform="rotate(131 938 305)"/><ellipse cx="1082" cy="294" rx="8" ry="7" fill="#0d0703" transform="rotate(145 1082 294)"/><ellipse cx="1010" cy="348" rx="17" ry="16" fill="#4b2e1d" transform="rotate(40 1010 348)"/><ellipse cx="1090" cy="318" rx="16" ry="15" fill="#0d0703" transform="rotate(46 1090 318)"/><ellipse cx="811" cy="299" rx="12" ry="7" fill="#4b2e1d" transform="rotate(59 811 299)"/><ellipse cx="897" cy="262" rx="11" ry="7" fill="#3e2516" transform="rotate(164 897 262)"/><ellipse cx="865" cy="234" rx="11" ry="9" fill="#4b2e1d" transform="rotate(60 865 234)"/><ellipse cx="881" cy="317" rx="8" ry="5" fill="#4b2e1d" transform="rotate(66 881 317)"/><ellipse cx="991" cy="349" rx="17" ry="14" fill="#0d0703" transform="rotate(165 991 349)"/><ellipse cx="814" cy="375" rx="15" ry="9" fill="#130a05" transform="rotate(98 814 375)"/><ellipse cx="962" cy="248" rx="12" ry="10" fill="#3e2516" transform="rotate(107 962 248)"/><ellipse cx="892" cy="316" rx="10" ry="8" fill="#523422" transform="rotate(143 892 316)"/><ellipse cx="1134" cy="395" rx="14" ry="9" fill="#1a0f08" transform="rotate(162 1134 395)"/><ellipse cx="844" cy="422" rx="11" ry="10" fill="#1a0f08" transform="rotate(148 844 422)"/><ellipse cx="813" cy="467" rx="11" ry="9" fill="#130a05" transform="rotate(11 813 467)"/><ellipse cx="1056" cy="337" rx="17" ry="16" fill="#1a0f08" transform="rotate(12 1056 337)"/><ellipse cx="1019" cy="333" rx="9" ry="6" fill="#1a0f08" transform="rotate(93 1019 333)"/><ellipse cx="956" cy="276" rx="13" ry="10" fill="#130a05" transform="rotate(74 956 276)"/><ellipse cx="1060" cy="269" rx="8" ry="8" fill="#1f120a" transform="rotate(70 1060 269)"/><ellipse cx="856" cy="272" rx="17" ry="16" fill="#1a0f08" transform="rotate(160 856 272)"/><ellipse cx="808" cy="278" rx="11" ry="10" fill="#523422" transform="rotate(18 808 278)"/><ellipse cx="845" cy="268" rx="17" ry="13" fill="#523422" transform="rotate(87 845 268)"/><ellipse cx="970" cy="238" rx="16" ry="14" fill="#44291a" transform="rotate(113 970 238)"/><ellipse cx="944" cy="275" rx="15" ry="11" fill="#1f120a" transform="rotate(74 944 275)"/><ellipse cx="1130" cy="325" rx="11" ry="7" fill="#1a0f08" transform="rotate(139 1130 325)"/><ellipse cx="816" cy="366" rx="12" ry="10" fill="#4b2e1d" transform="rotate(19 816 366)"/><ellipse cx="867" cy="393" rx="10" ry="10" fill="#3e2516" transform="rotate(145 867 393)"/><ellipse cx="1043" cy="281" rx="12" ry="12" fill="#44291a" transform="rotate(102 1043 281)"/><ellipse cx="1148" cy="415" rx="12" ry="8" fill="#1a0f08" transform="rotate(93 1148 415)"/><ellipse cx="923" cy="314" rx="9" ry="7" fill="#4b2e1d" transform="rotate(116 923 314)"/><ellipse cx="1115" cy="282" rx="7" ry="6" fill="#1f120a" transform="rotate(5 1115 282)"/><ellipse cx="809" cy="360" rx="15" ry="9" fill="#4b2e1d" transform="rotate(80 809 360)"/><ellipse cx="817" cy="386" rx="8" ry="8" fill="#130a05" transform="rotate(56 817 386)"/><ellipse cx="912" cy="334" rx="11" ry="10" fill="#44291a" transform="rotate(126 912 334)"/><ellipse cx="812" cy="382" rx="7" ry="7" fill="#1f120a" transform="rotate(0 812 382)"/><ellipse cx="1025" cy="354" rx="14" ry="13" fill="#3e2516" transform="rotate(37 1025 354)"/><ellipse cx="877" cy="246" rx="13" ry="12" fill="#3e2516" transform="rotate(108 877 246)"/><ellipse cx="983" cy="279" rx="16" ry="13" fill="#1f120a" transform="rotate(165 983 279)"/><ellipse cx="843" cy="471" rx="16" ry="15" fill="#3e2516" transform="rotate(9 843 471)"/><ellipse cx="902" cy="257" rx="11" ry="9" fill="#0d0703" transform="rotate(152 902 257)"/><ellipse cx="976" cy="329" rx="16" ry="12" fill="#1f120a" transform="rotate(160 976 329)"/><ellipse cx="965" cy="275" rx="16" ry="15" fill="#4b2e1d" transform="rotate(123 965 275)"/><ellipse cx="1108" cy="317" rx="9" ry="6" fill="#1f120a" transform="rotate(14 1108 317)"/><ellipse cx="1032" cy="269" rx="7" ry="6" fill="#44291a" transform="rotate(107 1032 269)"/><ellipse cx="1012" cy="245" rx="9" ry="6" fill="#44291a" transform="rotate(163 1012 245)"/><ellipse cx="1063" cy="382" rx="12" ry="8" fill="#130a05" transform="rotate(0 1063 382)"/><ellipse cx="841" cy="236" rx="11" ry="9" fill="#0d0703" transform="rotate(177 841 236)"/><ellipse cx="819" cy="443" rx="9" ry="7" fill="#130a05" transform="rotate(79 819 443)"/><ellipse cx="904" cy="318" rx="13" ry="13" fill="#1a0f08" transform="rotate(92 904 318)"/><ellipse cx="831" cy="330" rx="16" ry="14" fill="#523422" transform="rotate(144 831 330)"/><ellipse cx="827" cy="427" rx="16" ry="15" fill="#130a05" transform="rotate(74 827 427)"/><ellipse cx="1068" cy="363" rx="8" ry="5" fill="#4b2e1d" transform="rotate(84 1068 363)"/><ellipse cx="901" cy="279" rx="12" ry="10" fill="#3e2516" transform="rotate(23 901 279)"/><ellipse cx="823" cy="383" rx="8" ry="7" fill="#44291a" transform="rotate(102 823 383)"/><ellipse cx="799" cy="336" rx="14" ry="9" fill="#4b2e1d" transform="rotate(111 799 336)"/><ellipse cx="938" cy="220" rx="16" ry="12" fill="#130a05" transform="rotate(37 938 220)"/><ellipse cx="1093" cy="313" rx="10" ry="8" fill="#3e2516" transform="rotate(156 1093 313)"/><ellipse cx="1013" cy="204" rx="10" ry="8" fill="#1a0f08" transform="rotate(142 1013 204)"/><ellipse cx="927" cy="349" rx="15" ry="14" fill="#130a05" transform="rotate(64 927 349)"/><ellipse cx="991" cy="303" rx="12" ry="8" fill="#130a05" transform="rotate(145 991 303)"/><ellipse cx="1139" cy="384" rx="9" ry="6" fill="#3e2516" transform="rotate(178 1139 384)"/><ellipse cx="910" cy="225" rx="16" ry="11" fill="#0d0703" transform="rotate(34 910 225)"/><ellipse cx="874" cy="367" rx="12" ry="8" fill="#130a05" transform="rotate(85 874 367)"/><ellipse cx="1011" cy="234" rx="15" ry="11" fill="#130a05" transform="rotate(146 1011 234)"/><ellipse cx="921" cy="247" rx="13" ry="12" fill="#3e2516" transform="rotate(46 921 247)"/><ellipse cx="1125" cy="381" rx="13" ry="12" fill="#3e2516" transform="rotate(119 1125 381)"/><ellipse cx="797" cy="355" rx="8" ry="6" fill="#44291a" transform="rotate(67 797 355)"/><ellipse cx="805" cy="431" rx="14" ry="13" fill="#3e2516" transform="rotate(153 805 431)"/><ellipse cx="823" cy="301" rx="16" ry="15" fill="#0d0703" transform="rotate(72 823 301)"/><ellipse cx="938" cy="327" rx="13" ry="12" fill="#0d0703" transform="rotate(107 938 327)"/><ellipse cx="1124" cy="293" rx="8" ry="7" fill="#0d0703" transform="rotate(152 1124 293)"/><ellipse cx="1150" cy="339" rx="8" ry="8" fill="#0d0703" transform="rotate(60 1150 339)"/><ellipse cx="923" cy="360" rx="13" ry="8" fill="#0d0703" transform="rotate(145 923 360)"/><ellipse cx="980" cy="237" rx="16" ry="13" fill="#523422" transform="rotate(62 980 237)"/><ellipse cx="850" cy="329" rx="12" ry="9" fill="#44291a" transform="rotate(11 850 329)"/><ellipse cx="900" cy="333" rx="10" ry="7" fill="#3e2516" transform="rotate(52 900 333)"/><ellipse cx="1045" cy="216" rx="10" ry="10" fill="#1a0f08" transform="rotate(44 1045 216)"/><ellipse cx="995" cy="356" rx="9" ry="9" fill="#1a0f08" transform="rotate(78 995 356)"/><ellipse cx="1057" cy="291" rx="16" ry="15" fill="#130a05" transform="rotate(85 1057 291)"/><ellipse cx="952" cy="221" rx="9" ry="7" fill="#130a05" transform="rotate(68 952 221)"/><ellipse cx="853" cy="268" rx="14" ry="13" fill="#4b2e1d" transform="rotate(151 853 268)"/><ellipse cx="870" cy="237" rx="14" ry="11" fill="#4b2e1d" transform="rotate(135 870 237)"/><ellipse cx="1005" cy="358" rx="11" ry="9" fill="#44291a" transform="rotate(62 1005 358)"/><ellipse cx="852" cy="416" rx="7" ry="7" fill="#4b2e1d" transform="rotate(159 852 416)"/><ellipse cx="972" cy="251" rx="13" ry="11" fill="#3e2516" transform="rotate(8 972 251)"/><ellipse cx="979" cy="348" rx="15" ry="14" fill="#130a05" transform="rotate(152 979 348)"/><ellipse cx="1077" cy="247" rx="13" ry="9" fill="#523422" transform="rotate(60 1077 247)"/><ellipse cx="882" cy="360" rx="16" ry="13" fill="#44291a" transform="rotate(152 882 360)"/><ellipse cx="828" cy="251" rx="13" ry="11" fill="#130a05" transform="rotate(13 828 251)"/><ellipse cx="982" cy="277" rx="13" ry="8" fill="#130a05" transform="rotate(96 982 277)"/><ellipse cx="881" cy="245" rx="14" ry="13" fill="#1a0f08" transform="rotate(80 881 245)"/><ellipse cx="939" cy="306" rx="9" ry="9" fill="#3e2516" transform="rotate(153 939 306)"/><ellipse cx="932" cy="287" rx="11" ry="7" fill="#44291a" transform="rotate(75 932 287)"/><ellipse cx="880" cy="362" rx="9" ry="7" fill="#1f120a" transform="rotate(79 880 362)"/><ellipse cx="1014" cy="210" rx="11" ry="9" fill="#523422" transform="rotate(145 1014 210)"/><ellipse cx="958" cy="315" rx="15" ry="12" fill="#130a05" transform="rotate(107 958 315)"/><ellipse cx="915" cy="253" rx="12" ry="8" fill="#44291a" transform="rotate(152 915 253)"/><ellipse cx="960" cy="290" rx="11" ry="11" fill="#0d0703" transform="rotate(52 960 290)"/><ellipse cx="988" cy="322" rx="7" ry="5" fill="#1a0f08" transform="rotate(132 988 322)"/><ellipse cx="853" cy="276" rx="11" ry="11" fill="#1f120a" transform="rotate(26 853 276)"/><ellipse cx="920" cy="244" rx="16" ry="12" fill="#1a0f08" transform="rotate(5 920 244)"/><ellipse cx="928" cy="274" rx="16" ry="14" fill="#44291a" transform="rotate(125 928 274)"/><ellipse cx="1008" cy="207" rx="10" ry="8" fill="#130a05" transform="rotate(132 1008 207)"/><ellipse cx="1050" cy="275" rx="14" ry="12" fill="#44291a" transform="rotate(71 1050 275)"/><ellipse cx="986" cy="331" rx="8" ry="7" fill="#4b2e1d" transform="rotate(74 986 331)"/><ellipse cx="838" cy="450" rx="14" ry="11" fill="#523422" transform="rotate(169 838 450)"/><ellipse cx="866" cy="403" rx="14" ry="13" fill="#130a05" transform="rotate(161 866 403)"/><ellipse cx="830" cy="344" rx="12" ry="12" fill="#523422" transform="rotate(56 830 344)"/><ellipse cx="844" cy="318" rx="12" ry="8" fill="#130a05" transform="rotate(133 844 318)"/><ellipse cx="820" cy="300" rx="11" ry="7" fill="#1f120a" transform="rotate(179 820 300)"/><ellipse cx="1128" cy="466" rx="8" ry="8" fill="#1f120a" transform="rotate(13 1128 466)"/><ellipse cx="925" cy="286" rx="15" ry="14" fill="#0d0703" transform="rotate(157 925 286)"/><ellipse cx="866" cy="220" rx="7" ry="6" fill="#1a0f08" transform="rotate(70 866 220)"/></g><g fill="none" stroke-linecap="round" opacity=".75"><path d="M819.5 334.0A9.0 8.3 0 0 1 802.6 339.6" stroke="#0f0804" stroke-width="1.5"/><path d="M838.2 251.3A7.1 4.2 0 0 1 847.6 257.0" stroke="#23140b" stroke-width="1.0"/><path d="M885.8 225.2A5.2 3.9 0 0 1 886.1 232.5" stroke="#583a28" stroke-width="2.5"/><path d="M1083.6 245.8A10.6 7.9 0 1 1 1104.6 246.8" stroke="#0f0804" stroke-width="1.6"/><path d="M1028.5 354.0A10.8 10.5 0 1 1 1046.0 343.6" stroke="#583a28" stroke-width="2.4"/><path d="M1104.5 289.5A12.6 7.8 0 1 1 1127.3 294.7" stroke="#23140b" stroke-width="2.4"/><path d="M914.1 289.0A11.8 9.8 0 1 1 895.7 297.3" stroke="#23140b" stroke-width="2.0"/><path d="M836.0 423.2A7.4 6.3 0 0 1 824.9 416.4" stroke="#0f0804" stroke-width="1.4"/><path d="M1034.3 329.0A10.7 10.6 0 1 1 1051.5 328.7" stroke="#4e3222" stroke-width="1.3"/><path d="M860.8 294.9A9.8 9.5 0 0 1 856.6 313.3" stroke="#5e3f2c" stroke-width="1.3"/><path d="M802.7 319.1A12.8 11.4 0 0 1 822.8 330.8" stroke="#23140b" stroke-width="2.2"/><path d="M1052.6 366.4A12.2 7.8 0 0 1 1033.1 359.6" stroke="#0f0804" stroke-width="2.4"/><path d="M945.6 252.2A13.0 9.2 0 1 1 952.0 234.6" stroke="#23140b" stroke-width="1.4"/><path d="M869.8 346.4A8.3 5.2 0 0 1 862.8 339.0" stroke="#0f0804" stroke-width="2.1"/><path d="M825.7 438.0A13.9 10.3 0 0 1 833.9 422.4" stroke="#23140b" stroke-width="1.9"/><path d="M865.4 390.1A12.4 8.9 0 0 1 856.7 374.9" stroke="#160c06" stroke-width="2.6"/><path d="M1059.4 253.1A5.2 3.3 0 0 1 1051.6 250.1" stroke="#48301f" stroke-width="1.0"/><path d="M1000.3 212.2A9.2 6.9 0 0 1 996.2 223.2" stroke="#0f0804" stroke-width="2.3"/><path d="M1141.4 324.4A11.3 6.9 0 1 1 1152.0 315.0" stroke="#583a28" stroke-width="1.4"/><path d="M934.7 299.0A10.9 9.3 0 0 1 930.0 317.0" stroke="#48301f" stroke-width="1.5"/><path d="M809.1 399.0A10.3 7.0 0 0 1 803.7 386.5" stroke="#4e3222" stroke-width="2.2"/><path d="M847.8 232.5A6.3 3.8 0 0 1 854.5 226.1" stroke="#4e3222" stroke-width="1.6"/><path d="M909.4 367.0A13.6 9.9 0 1 1 915.7 350.9" stroke="#40271a" stroke-width="1.9"/><path d="M892.1 338.7A13.4 12.8 0 1 1 914.6 348.1" stroke="#0f0804" stroke-width="1.1"/><path d="M1125.3 429.5A9.7 8.4 0 1 1 1108.5 423.1" stroke="#4e3222" stroke-width="1.3"/><path d="M1097.4 381.0A9.5 8.9 0 0 1 1114.0 379.7" stroke="#5e3f2c" stroke-width="1.7"/><path d="M982.6 311.6A9.9 8.0 0 1 1 972.4 301.5" stroke="#5e3f2c" stroke-width="1.7"/><path d="M1073.3 290.2A11.6 11.0 0 0 1 1050.6 294.1" stroke="#583a28" stroke-width="2.2"/><path d="M1086.0 242.9A6.0 4.2 0 0 1 1075.2 240.2" stroke="#583a28" stroke-width="2.4"/><path d="M1040.1 275.8A12.3 11.6 0 1 1 1064.0 271.0" stroke="#160c06" stroke-width="1.8"/><path d="M833.7 322.2A11.8 9.4 0 0 1 829.2 337.7" stroke="#4e3222" stroke-width="2.2"/><path d="M1090.5 246.7A8.3 6.1 0 0 1 1077.0 246.6" stroke="#160c06" stroke-width="2.3"/><path d="M834.0 245.3A8.5 8.2 0 1 1 821.8 256.3" stroke="#40271a" stroke-width="1.1"/><path d="M1035.9 354.3A7.8 6.5 0 1 1 1024.8 350.3" stroke="#23140b" stroke-width="1.6"/><path d="M1032.5 254.2A6.9 5.7 0 0 1 1036.6 264.1" stroke="#4e3222" stroke-width="1.2"/><path d="M822.0 485.7A10.5 10.5 0 0 1 827.3 467.1" stroke="#160c06" stroke-width="2.2"/><path d="M925.4 295.5A8.7 6.7 0 1 1 918.2 283.6" stroke="#23140b" stroke-width="1.4"/><path d="M829.3 234.3A5.9 4.7 0 0 1 841.0 234.3" stroke="#40271a" stroke-width="1.5"/><path d="M1106.6 272.0A12.7 12.4 0 0 1 1118.7 293.7" stroke="#23140b" stroke-width="1.3"/><path d="M933.1 270.1A10.8 9.0 0 0 1 943.7 255.0" stroke="#0f0804" stroke-width="1.5"/><path d="M881.7 317.3A6.2 4.8 0 0 1 875.1 324.8" stroke="#48301f" stroke-width="1.2"/><path d="M1111.8 423.0A5.9 4.1 0 0 1 1118.7 429.6" stroke="#48301f" stroke-width="1.0"/><path d="M807.6 372.6A11.3 10.7 0 1 1 789.1 365.1" stroke="#583a28" stroke-width="1.8"/><path d="M916.9 329.3A7.8 7.8 0 1 1 921.8 343.7" stroke="#4e3222" stroke-width="2.6"/><path d="M960.5 324.5A10.9 7.5 0 1 1 968.6 314.7" stroke="#48301f" stroke-width="2.3"/><path d="M990.5 226.7A12.2 10.7 0 1 1 975.8 216.0" stroke="#0f0804" stroke-width="2.1"/><path d="M1136.9 342.7A13.0 9.7 0 0 1 1151.8 329.3" stroke="#48301f" stroke-width="2.5"/><path d="M924.2 361.7A9.8 7.1 0 1 1 916.6 350.1" stroke="#40271a" stroke-width="1.1"/><path d="M976.4 296.0A8.2 6.4 0 1 1 978.4 283.4" stroke="#160c06" stroke-width="1.9"/><path d="M853.8 226.1A6.2 5.0 0 1 1 842.8 227.6" stroke="#583a28" stroke-width="2.6"/><path d="M988.7 312.6A10.5 8.0 0 1 1 972.6 314.9" stroke="#4e3222" stroke-width="1.4"/><path d="M1075.6 237.4A11.6 9.9 0 0 1 1087.1 221.0" stroke="#23140b" stroke-width="1.2"/><path d="M801.9 327.1A5.7 5.5 0 0 1 797.6 318.4" stroke="#48301f" stroke-width="2.4"/><path d="M1007.4 233.7A13.8 11.8 0 0 1 994.5 250.7" stroke="#0f0804" stroke-width="2.2"/><path d="M873.1 308.3A8.9 6.8 0 0 1 889.7 304.1" stroke="#5e3f2c" stroke-width="1.2"/><path d="M896.9 359.8A6.5 6.0 0 0 1 904.2 350.2" stroke="#40271a" stroke-width="2.1"/><path d="M1140.6 344.3A9.7 8.2 0 0 1 1145.4 359.9" stroke="#40271a" stroke-width="1.0"/><path d="M914.5 283.0A10.5 8.4 0 0 1 933.8 288.3" stroke="#48301f" stroke-width="1.1"/><path d="M821.9 266.1A7.4 7.0 0 0 1 818.8 279.8" stroke="#23140b" stroke-width="1.1"/><path d="M1000.9 232.1A8.6 5.3 0 0 1 993.4 223.2" stroke="#583a28" stroke-width="2.3"/><path d="M1081.1 384.1A5.5 4.7 0 0 1 1085.6 390.8" stroke="#583a28" stroke-width="2.5"/><path d="M1145.6 421.8A10.2 7.8 0 1 1 1127.9 416.2" stroke="#40271a" stroke-width="1.3"/><path d="M816.6 395.8A6.3 5.8 0 1 1 812.8 406.3" stroke="#5e3f2c" stroke-width="1.5"/><path d="M817.9 443.6A11.0 7.1 0 0 1 836.7 441.0" stroke="#0f0804" stroke-width="2.1"/><path d="M1040.3 236.6A12.8 8.4 0 0 1 1017.2 230.4" stroke="#40271a" stroke-width="1.2"/><path d="M899.6 314.2A13.1 11.5 0 0 1 883.3 329.9" stroke="#5e3f2c" stroke-width="1.8"/><path d="M1053.1 318.1A12.0 8.0 0 1 1 1041.5 305.4" stroke="#48301f" stroke-width="1.3"/><path d="M908.0 243.3A8.1 6.2 0 1 1 921.2 250.6" stroke="#5e3f2c" stroke-width="1.6"/><path d="M997.4 349.2A13.8 9.6 0 1 1 1016.3 336.4" stroke="#0f0804" stroke-width="1.6"/><path d="M943.3 202.6A13.3 9.3 0 0 1 943.0 220.3" stroke="#160c06" stroke-width="1.7"/><path d="M1141.8 468.9A9.1 8.2 0 0 1 1157.4 462.4" stroke="#40271a" stroke-width="2.1"/><path d="M964.4 251.5A13.9 11.1 0 0 1 969.2 231.9" stroke="#5e3f2c" stroke-width="1.2"/><path d="M1151.6 430.0A12.3 8.4 0 1 1 1140.3 416.7" stroke="#160c06" stroke-width="2.4"/><path d="M1064.0 306.2A6.5 6.5 0 0 1 1055.5 298.2" stroke="#48301f" stroke-width="2.1"/><path d="M1052.6 275.6A12.7 8.9 0 0 1 1063.1 290.9" stroke="#4e3222" stroke-width="1.3"/><path d="M1111.5 394.6A7.6 4.8 0 0 1 1125.9 395.3" stroke="#4e3222" stroke-width="1.5"/><path d="M896.0 359.5A12.9 12.1 0 1 1 895.3 338.6" stroke="#40271a" stroke-width="1.9"/><path d="M1069.8 353.0A10.9 7.7 0 1 1 1049.8 354.3" stroke="#4e3222" stroke-width="1.7"/><path d="M1067.7 392.5A9.9 7.3 0 1 1 1086.3 394.8" stroke="#160c06" stroke-width="2.5"/><path d="M975.5 371.3A8.1 5.2 0 1 1 982.2 364.2" stroke="#40271a" stroke-width="1.5"/><path d="M928.7 301.7A6.3 4.1 0 1 1 916.6 302.2" stroke="#23140b" stroke-width="1.9"/><path d="M1156.3 393.7A12.7 8.0 0 1 1 1149.4 409.1" stroke="#583a28" stroke-width="1.1"/><path d="M1135.8 463.2A5.9 5.2 0 0 1 1126.1 458.9" stroke="#4e3222" stroke-width="1.9"/><path d="M1147.8 370.0A6.2 5.5 0 0 1 1149.2 359.3" stroke="#583a28" stroke-width="2.6"/><path d="M1152.9 468.8A12.7 10.1 0 0 1 1142.8 482.9" stroke="#48301f" stroke-width="2.5"/><path d="M830.8 354.8A13.6 12.9 0 0 1 808.2 361.7" stroke="#4e3222" stroke-width="1.7"/><path d="M846.9 245.9A10.4 9.1 0 1 1 830.6 254.8" stroke="#40271a" stroke-width="1.0"/><path d="M817.3 425.1A13.8 10.1 0 0 1 806.1 443.5" stroke="#48301f" stroke-width="1.6"/><path d="M1118.2 273.0A5.4 4.4 0 1 1 1127.3 269.2" stroke="#48301f" stroke-width="1.7"/><path d="M843.7 243.3A7.3 5.3 0 1 1 856.4 246.1" stroke="#160c06" stroke-width="2.1"/><path d="M813.0 357.2A11.7 8.1 0 0 1 798.0 349.1" stroke="#40271a" stroke-width="1.1"/><path d="M1065.3 273.3A7.0 5.2 0 1 1 1075.7 274.6" stroke="#48301f" stroke-width="1.1"/><path d="M800.2 450.8A14.0 9.7 0 1 1 826.4 446.3" stroke="#160c06" stroke-width="1.6"/><path d="M881.1 375.3A11.7 7.1 0 1 1 900.8 379.3" stroke="#5e3f2c" stroke-width="1.1"/><path d="M1148.7 326.3A6.4 5.1 0 0 1 1137.1 326.5" stroke="#160c06" stroke-width="2.5"/><path d="M842.9 421.2A13.5 11.8 0 0 1 825.1 407.3" stroke="#5e3f2c" stroke-width="1.6"/><path d="M837.8 447.7A13.9 9.0 0 1 1 834.6 464.9" stroke="#48301f" stroke-width="1.3"/><path d="M822.1 351.2A9.9 8.0 0 1 1 834.5 362.0" stroke="#40271a" stroke-width="1.1"/><path d="M869.1 214.6A7.8 6.2 0 1 1 861.1 222.4" stroke="#583a28" stroke-width="2.5"/><path d="M1031.6 224.8A9.4 6.9 0 1 1 1015.5 231.5" stroke="#5e3f2c" stroke-width="1.7"/><path d="M1073.9 321.1A5.5 4.9 0 0 1 1065.6 316.2" stroke="#160c06" stroke-width="2.5"/><path d="M783.7 318.6A13.7 8.3 0 0 1 806.3 320.2" stroke="#48301f" stroke-width="1.0"/><path d="M874.5 382.8A8.3 6.1 0 1 1 890.8 383.2" stroke="#48301f" stroke-width="1.2"/><path d="M953.0 370.3A7.3 6.4 0 1 1 939.1 374.1" stroke="#583a28" stroke-width="1.7"/><path d="M900.0 355.8A8.6 7.4 0 0 1 908.1 368.5" stroke="#4e3222" stroke-width="1.6"/><path d="M981.5 345.0A13.3 8.0 0 0 1 1007.8 344.1" stroke="#5e3f2c" stroke-width="1.6"/><path d="M993.2 210.8A7.9 5.2 0 0 1 1005.8 213.2" stroke="#4e3222" stroke-width="1.4"/><path d="M952.2 234.3A12.2 11.2 0 1 1 960.4 216.0" stroke="#0f0804" stroke-width="1.3"/><path d="M1030.1 231.2A8.2 7.7 0 0 1 1016.6 233.8" stroke="#583a28" stroke-width="1.5"/><path d="M1103.1 354.5A8.1 7.5 0 0 1 1093.3 343.8" stroke="#0f0804" stroke-width="2.6"/><path d="M1126.0 390.6A12.2 11.2 0 1 1 1121.2 410.2" stroke="#583a28" stroke-width="1.2"/><path d="M794.1 428.4A13.6 11.7 0 0 1 809.3 447.8" stroke="#23140b" stroke-width="2.5"/><path d="M1035.1 223.8A11.0 10.4 0 1 1 1032.1 208.1" stroke="#0f0804" stroke-width="1.4"/><path d="M1029.1 330.8A8.7 5.2 0 1 1 1044.5 328.1" stroke="#0f0804" stroke-width="2.5"/><path d="M1019.6 348.6A8.5 5.6 0 0 1 1019.7 339.6" stroke="#160c06" stroke-width="1.4"/><path d="M1011.1 235.3A6.4 5.6 0 0 1 1022.6 230.4" stroke="#4e3222" stroke-width="2.0"/><path d="M1116.9 275.9A13.6 12.3 0 1 1 1119.9 294.9" stroke="#48301f" stroke-width="1.2"/><path d="M1075.6 351.8A7.6 5.9 0 0 1 1063.1 358.3" stroke="#23140b" stroke-width="1.1"/><path d="M813.8 301.2A9.7 7.5 0 1 1 794.9 302.6" stroke="#23140b" stroke-width="2.5"/><path d="M806.6 329.8A9.3 8.6 0 1 1 823.9 324.6" stroke="#0f0804" stroke-width="1.9"/><path d="M1161.6 379.6A6.7 5.5 0 1 1 1149.9 377.3" stroke="#48301f" stroke-width="1.4"/><path d="M845.2 269.8A13.1 10.3 0 0 1 864.6 264.2" stroke="#5e3f2c" stroke-width="2.4"/><path d="M1080.1 280.1A12.3 9.4 0 1 1 1089.7 265.7" stroke="#40271a" stroke-width="2.1"/><path d="M958.2 205.3A5.7 3.6 0 0 1 966.9 200.6" stroke="#160c06" stroke-width="2.4"/><path d="M975.3 372.0A7.8 5.7 0 0 1 964.0 377.6" stroke="#160c06" stroke-width="2.3"/><path d="M1063.3 364.1A11.7 7.1 0 0 1 1056.0 376.5" stroke="#40271a" stroke-width="2.1"/><path d="M944.6 308.9A8.9 7.6 0 0 1 959.7 301.4" stroke="#23140b" stroke-width="2.4"/><path d="M1010.1 217.3A11.6 10.0 0 1 1 1024.7 232.8" stroke="#23140b" stroke-width="2.4"/><path d="M807.5 261.1A7.1 7.0 0 1 1 817.0 271.2" stroke="#5e3f2c" stroke-width="1.7"/><path d="M1018.4 263.0A11.9 8.8 0 1 1 1029.1 273.9" stroke="#23140b" stroke-width="1.0"/><path d="M876.7 383.0A7.0 4.7 0 1 1 887.2 383.6" stroke="#23140b" stroke-width="1.1"/><path d="M1096.5 305.2A10.3 9.3 0 1 1 1093.6 322.1" stroke="#5e3f2c" stroke-width="1.4"/><path d="M1059.3 363.9A9.9 9.0 0 0 1 1044.5 372.5" stroke="#48301f" stroke-width="2.3"/><path d="M969.4 211.6A11.8 8.6 0 1 1 987.0 207.3" stroke="#5e3f2c" stroke-width="2.1"/><path d="M932.4 243.7A10.5 10.4 0 1 1 952.9 240.0" stroke="#4e3222" stroke-width="2.5"/><path d="M809.1 279.4A11.2 8.4 0 1 1 806.9 294.2" stroke="#0f0804" stroke-width="1.2"/><path d="M994.0 356.0A9.9 9.0 0 0 1 1008.4 343.8" stroke="#160c06" stroke-width="1.3"/><path d="M1030.5 206.7A6.7 5.6 0 0 1 1020.5 210.8" stroke="#0f0804" stroke-width="2.4"/><path d="M858.4 413.6A11.3 7.8 0 1 1 875.5 407.6" stroke="#5e3f2c" stroke-width="2.1"/><path d="M1074.5 287.8A9.5 8.0 0 1 1 1087.9 276.5" stroke="#48301f" stroke-width="1.2"/><path d="M960.7 321.8A12.4 8.3 0 1 1 937.6 325.9" stroke="#48301f" stroke-width="2.0"/><path d="M960.0 208.2A9.4 8.5 0 1 1 959.9 222.9" stroke="#4e3222" stroke-width="1.2"/><path d="M790.4 297.8A13.9 8.7 0 1 1 799.8 311.5" stroke="#40271a" stroke-width="1.7"/><path d="M1135.4 382.9A10.0 8.7 0 0 1 1117.8 385.7" stroke="#4e3222" stroke-width="1.7"/><path d="M888.2 369.3A8.2 5.9 0 0 1 893.8 358.8" stroke="#0f0804" stroke-width="1.0"/><path d="M924.6 325.4A6.6 4.2 0 0 1 915.2 320.9" stroke="#160c06" stroke-width="1.5"/><path d="M1111.9 414.8A10.6 8.5 0 1 1 1117.4 430.4" stroke="#23140b" stroke-width="2.3"/><path d="M912.8 273.1A9.0 8.3 0 1 1 917.7 284.7" stroke="#160c06" stroke-width="1.5"/><path d="M906.6 316.5A10.8 8.8 0 0 1 885.4 312.7" stroke="#48301f" stroke-width="2.4"/><path d="M962.8 309.4A10.0 9.6 0 1 1 947.7 310.0" stroke="#160c06" stroke-width="1.1"/><path d="M993.8 345.0A7.8 7.8 0 1 1 983.2 356.3" stroke="#40271a" stroke-width="1.9"/><path d="M824.5 446.1A12.2 9.5 0 1 1 821.0 463.5" stroke="#23140b" stroke-width="1.9"/><path d="M1000.3 217.9A11.4 7.9 0 1 1 985.6 207.3" stroke="#5e3f2c" stroke-width="1.3"/><path d="M945.5 357.2A8.0 4.9 0 1 1 957.5 363.3" stroke="#160c06" stroke-width="2.2"/><path d="M1129.0 383.8A7.2 6.9 0 0 1 1128.5 371.2" stroke="#40271a" stroke-width="2.6"/><path d="M856.0 262.8A12.2 9.0 0 0 1 843.5 249.4" stroke="#583a28" stroke-width="2.3"/><path d="M1122.1 377.8A13.9 12.4 0 1 1 1103.6 390.1" stroke="#48301f" stroke-width="2.0"/><path d="M805.1 358.6A8.4 7.5 0 0 1 802.9 372.6" stroke="#583a28" stroke-width="1.7"/><path d="M1029.3 214.9A10.3 6.5 0 0 1 1024.3 203.3" stroke="#0f0804" stroke-width="1.3"/><path d="M870.1 273.7A12.6 10.9 0 1 1 862.8 289.2" stroke="#23140b" stroke-width="2.5"/><path d="M938.8 377.2A6.1 4.5 0 0 1 933.8 370.2" stroke="#48301f" stroke-width="1.9"/><path d="M1029.0 333.6A9.4 9.2 0 1 1 1011.6 327.2" stroke="#583a28" stroke-width="1.3"/><path d="M807.7 446.4A6.3 3.9 0 0 1 798.2 443.9" stroke="#23140b" stroke-width="1.2"/><path d="M1060.5 238.7A8.1 6.8 0 1 1 1047.0 234.2" stroke="#160c06" stroke-width="1.5"/><path d="M852.3 227.8A6.8 4.5 0 0 1 863.4 231.4" stroke="#23140b" stroke-width="1.7"/><path d="M783.7 443.4A13.4 12.6 0 1 1 808.0 442.2" stroke="#0f0804" stroke-width="1.9"/><path d="M894.2 273.8A11.8 11.4 0 1 1 883.0 292.7" stroke="#583a28" stroke-width="2.0"/><path d="M1102.6 297.5A7.3 5.6 0 0 1 1115.2 296.2" stroke="#48301f" stroke-width="1.9"/><path d="M1048.7 363.6A12.9 9.0 0 0 1 1034.8 377.9" stroke="#5e3f2c" stroke-width="2.0"/><path d="M937.6 360.4A6.2 5.3 0 0 1 941.5 368.5" stroke="#0f0804" stroke-width="1.3"/><path d="M1139.5 309.7A7.4 4.5 0 1 1 1139.3 317.5" stroke="#583a28" stroke-width="1.6"/><path d="M1049.2 263.2A12.6 9.3 0 1 1 1043.8 245.1" stroke="#4e3222" stroke-width="1.2"/><path d="M1034.9 338.9A9.6 9.3 0 0 1 1015.9 337.0" stroke="#5e3f2c" stroke-width="1.3"/><path d="M957.3 346.5A11.1 7.7 0 1 1 962.3 331.6" stroke="#5e3f2c" stroke-width="1.9"/><path d="M822.3 380.2A11.2 9.1 0 1 1 841.8 380.5" stroke="#160c06" stroke-width="1.9"/><path d="M793.4 323.7A12.4 11.7 0 1 1 801.2 345.9" stroke="#48301f" stroke-width="2.5"/><path d="M814.0 395.7A9.3 8.7 0 1 1 801.0 383.5" stroke="#583a28" stroke-width="1.9"/><path d="M826.1 386.2A12.4 10.8 0 0 1 828.1 367.3" stroke="#48301f" stroke-width="2.4"/><path d="M1105.5 410.6A13.8 11.8 0 1 1 1120.7 393.4" stroke="#5e3f2c" stroke-width="1.3"/><path d="M837.6 281.9A9.9 6.3 0 0 1 847.3 271.2" stroke="#0f0804" stroke-width="1.1"/><path d="M1020.5 320.9A7.5 7.3 0 1 1 1006.1 320.4" stroke="#5e3f2c" stroke-width="2.4"/><path d="M1061.2 353.1A13.7 11.3 0 0 1 1035.5 360.8" stroke="#40271a" stroke-width="2.0"/><path d="M1066.2 333.9A7.7 5.2 0 1 1 1078.6 331.6" stroke="#4e3222" stroke-width="1.0"/><path d="M853.2 244.0A6.5 5.8 0 1 1 849.9 234.7" stroke="#583a28" stroke-width="1.3"/><path d="M957.2 376.3A5.5 3.6 0 0 1 948.5 380.3" stroke="#40271a" stroke-width="1.2"/><path d="M1077.2 257.0A5.4 3.9 0 0 1 1085.9 261.6" stroke="#23140b" stroke-width="1.3"/><path d="M1038.8 216.7A13.3 9.7 0 1 1 1012.9 219.2" stroke="#23140b" stroke-width="2.4"/><path d="M983.5 237.4A9.9 6.9 0 1 1 966.9 234.8" stroke="#48301f" stroke-width="2.4"/><path d="M1004.8 269.8A7.2 7.0 0 1 1 1004.0 281.7" stroke="#160c06" stroke-width="1.7"/><path d="M842.7 437.9A9.5 7.1 0 0 1 856.5 447.3" stroke="#583a28" stroke-width="1.4"/><path d="M1006.7 271.4A5.8 5.8 0 1 1 1018.2 272.4" stroke="#23140b" stroke-width="1.7"/><path d="M1022.3 314.0A8.7 6.4 0 1 1 1036.2 306.8" stroke="#48301f" stroke-width="1.9"/><path d="M853.4 285.9A11.1 9.2 0 0 1 831.6 283.2" stroke="#583a28" stroke-width="2.5"/><path d="M902.3 314.9A6.1 5.8 0 1 1 897.1 304.7" stroke="#40271a" stroke-width="1.9"/><path d="M1081.9 345.8A5.8 5.7 0 1 1 1073.6 338.5" stroke="#0f0804" stroke-width="2.5"/><path d="M1089.6 296.9A9.3 8.5 0 1 1 1087.2 280.2" stroke="#5e3f2c" stroke-width="1.3"/><path d="M1077.1 378.2A5.1 3.7 0 1 1 1087.2 377.3" stroke="#4e3222" stroke-width="1.8"/><path d="M944.9 270.8A6.2 5.4 0 1 1 949.5 280.0" stroke="#40271a" stroke-width="1.2"/><path d="M989.0 230.0A5.8 5.8 0 0 1 994.6 221.1" stroke="#0f0804" stroke-width="2.4"/><path d="M1133.0 424.7A10.8 9.4 0 1 1 1152.2 428.9" stroke="#583a28" stroke-width="1.8"/><path d="M1071.5 317.9A12.4 12.2 0 1 1 1061.2 336.3" stroke="#0f0804" stroke-width="1.2"/><path d="M830.5 243.5A10.2 6.5 0 1 1 841.5 254.2" stroke="#48301f" stroke-width="2.3"/><path d="M819.3 465.2A5.6 4.7 0 1 1 824.4 457.7" stroke="#583a28" stroke-width="1.7"/><path d="M979.8 264.3A9.2 5.9 0 1 1 985.3 253.5" stroke="#583a28" stroke-width="2.0"/><path d="M1006.7 356.2A9.4 8.1 0 0 1 992.5 364.9" stroke="#583a28" stroke-width="1.8"/><path d="M1040.5 321.9A11.3 9.4 0 1 1 1024.4 335.2" stroke="#40271a" stroke-width="1.6"/><path d="M806.8 279.7A12.6 12.4 0 0 1 831.6 280.9" stroke="#4e3222" stroke-width="1.7"/><path d="M921.1 324.2A11.2 9.2 0 0 1 930.8 340.4" stroke="#583a28" stroke-width="1.2"/><path d="M1126.8 352.9A13.1 9.7 0 0 1 1145.5 364.6" stroke="#40271a" stroke-width="1.5"/><path d="M918.0 287.9A6.2 4.7 0 1 1 923.2 295.1" stroke="#583a28" stroke-width="1.3"/><path d="M917.6 340.6A11.9 11.6 0 1 1 919.1 320.0" stroke="#160c06" stroke-width="1.3"/><path d="M1055.8 294.5A9.1 8.3 0 0 1 1066.7 281.3" stroke="#0f0804" stroke-width="2.5"/><path d="M801.1 285.0A8.1 7.6 0 0 1 814.2 280.6" stroke="#48301f" stroke-width="1.3"/><path d="M1079.5 236.4A7.7 6.7 0 1 1 1092.9 238.0" stroke="#160c06" stroke-width="1.1"/><path d="M1134.8 440.6A8.6 6.6 0 1 1 1126.9 431.0" stroke="#23140b" stroke-width="1.4"/><path d="M1065.7 301.2A7.0 5.4 0 0 1 1054.3 303.0" stroke="#0f0804" stroke-width="1.6"/><path d="M994.5 280.8A5.2 4.1 0 0 1 1000.9 287.0" stroke="#23140b" stroke-width="1.1"/><path d="M1071.7 238.6A7.1 6.4 0 1 1 1065.0 249.7" stroke="#4e3222" stroke-width="1.6"/><path d="M955.6 356.7A5.2 4.3 0 1 1 951.0 349.8" stroke="#5e3f2c" stroke-width="1.2"/><path d="M938.2 276.5A8.5 7.8 0 1 1 922.0 275.0" stroke="#583a28" stroke-width="2.1"/><path d="M948.0 354.9A10.2 9.6 0 1 1 962.6 365.0" stroke="#4e3222" stroke-width="2.3"/><path d="M1102.5 353.3A10.0 6.5 0 1 1 1085.5 359.9" stroke="#4e3222" stroke-width="2.5"/><path d="M846.9 359.6A6.3 5.6 0 1 1 846.4 370.8" stroke="#0f0804" stroke-width="2.3"/><path d="M937.4 303.7A13.0 11.9 0 1 1 959.7 293.5" stroke="#40271a" stroke-width="1.7"/><path d="M817.3 334.1A7.2 5.4 0 1 1 812.3 324.0" stroke="#5e3f2c" stroke-width="1.2"/><path d="M960.6 284.6A11.1 8.4 0 0 1 941.5 276.9" stroke="#5e3f2c" stroke-width="1.8"/><path d="M834.5 286.3A5.2 4.2 0 1 1 830.7 292.9" stroke="#160c06" stroke-width="1.3"/><path d="M1121.1 333.1A11.3 9.8 0 0 1 1137.6 345.6" stroke="#583a28" stroke-width="1.1"/><path d="M883.5 265.3A12.1 7.7 0 0 1 870.1 277.3" stroke="#0f0804" stroke-width="2.6"/><path d="M1055.0 330.1A11.7 8.3 0 1 1 1051.5 346.5" stroke="#48301f" stroke-width="2.2"/><path d="M842.4 282.2A13.6 8.8 0 1 1 839.6 266.0" stroke="#4e3222" stroke-width="2.5"/><path d="M1092.3 361.0A5.7 5.3 0 1 1 1088.6 369.7" stroke="#4e3222" stroke-width="1.6"/><path d="M809.6 365.3A11.2 8.1 0 0 1 804.2 379.8" stroke="#23140b" stroke-width="1.6"/><path d="M1022.6 208.0A13.1 10.3 0 1 1 1016.0 225.8" stroke="#160c06" stroke-width="1.2"/><path d="M1065.6 240.0A13.9 9.1 0 1 1 1041.2 240.2" stroke="#23140b" stroke-width="2.3"/><path d="M1000.7 230.6A12.2 8.2 0 1 1 1005.0 245.9" stroke="#0f0804" stroke-width="2.0"/><path d="M914.9 294.5A5.6 4.9 0 0 1 923.4 298.0" stroke="#4e3222" stroke-width="2.1"/><path d="M1131.4 442.3A13.9 11.8 0 0 1 1145.1 427.6" stroke="#583a28" stroke-width="2.4"/><path d="M1017.0 301.5A5.0 5.0 0 1 1 1010.6 309.0" stroke="#160c06" stroke-width="2.4"/><path d="M896.2 309.8A13.9 12.2 0 0 1 911.8 290.8" stroke="#40271a" stroke-width="1.9"/><path d="M827.3 351.4A8.2 7.2 0 1 1 813.0 344.9" stroke="#0f0804" stroke-width="1.4"/><path d="M1111.5 283.5A9.4 7.6 0 0 1 1129.3 281.3" stroke="#40271a" stroke-width="1.7"/><path d="M901.6 317.7A8.1 7.6 0 0 1 894.3 306.6" stroke="#583a28" stroke-width="2.3"/><path d="M818.9 334.2A9.2 9.0 0 0 1 829.0 319.7" stroke="#4e3222" stroke-width="2.6"/><path d="M928.6 226.7A11.0 7.9 0 0 1 922.4 212.6" stroke="#23140b" stroke-width="1.5"/><path d="M1141.0 277.4A12.4 7.8 0 1 1 1122.4 267.3" stroke="#40271a" stroke-width="1.8"/><path d="M1033.3 260.7A11.5 7.5 0 1 1 1044.0 271.9" stroke="#5e3f2c" stroke-width="2.4"/><path d="M966.4 326.6A7.4 5.8 0 0 1 977.6 329.0" stroke="#40271a" stroke-width="1.5"/><path d="M857.3 313.3A11.5 9.3 0 0 1 855.8 329.6" stroke="#0f0804" stroke-width="2.4"/><path d="M1038.5 288.5A5.8 5.6 0 0 1 1043.9 279.6" stroke="#40271a" stroke-width="2.5"/><path d="M1012.0 218.2A6.5 5.5 0 1 1 1000.9 213.1" stroke="#0f0804" stroke-width="1.4"/><path d="M1094.1 250.5A10.2 9.7 0 1 1 1112.5 242.1" stroke="#0f0804" stroke-width="2.3"/><path d="M980.6 226.5A5.3 3.3 0 1 1 983.5 231.7" stroke="#583a28" stroke-width="1.4"/><path d="M1064.0 269.4A6.4 6.2 0 1 1 1054.3 265.4" stroke="#5e3f2c" stroke-width="1.1"/><path d="M814.0 283.4A5.4 3.4 0 0 1 807.7 288.7" stroke="#48301f" stroke-width="1.1"/><path d="M1102.5 270.0A8.2 5.3 0 0 1 1099.7 260.9" stroke="#0f0804" stroke-width="1.7"/><path d="M830.6 378.4A12.4 9.3 0 1 1 835.2 360.2" stroke="#160c06" stroke-width="2.1"/><path d="M1142.7 409.0A7.0 5.0 0 1 1 1138.3 399.5" stroke="#40271a" stroke-width="1.8"/><path d="M972.9 215.8A10.7 10.6 0 1 1 993.0 217.8" stroke="#160c06" stroke-width="1.3"/><path d="M1093.3 382.0A9.3 6.1 0 1 1 1082.8 372.4" stroke="#583a28" stroke-width="1.0"/><path d="M996.0 331.3A8.6 5.7 0 1 1 1011.8 335.1" stroke="#5e3f2c" stroke-width="2.4"/><path d="M860.8 337.5A11.6 7.9 0 0 1 854.5 352.2" stroke="#5e3f2c" stroke-width="2.2"/><path d="M906.1 323.6A12.8 12.2 0 1 1 882.9 319.4" stroke="#0f0804" stroke-width="1.5"/><path d="M1108.1 364.7A10.6 7.9 0 1 1 1127.4 371.1" stroke="#40271a" stroke-width="2.2"/><path d="M960.8 263.6A5.8 5.3 0 1 1 969.4 256.5" stroke="#40271a" stroke-width="1.9"/><path d="M946.4 243.3A9.1 5.8 0 0 1 930.5 244.4" stroke="#23140b" stroke-width="1.2"/><path d="M817.4 321.7A11.1 9.4 0 1 1 801.5 329.3" stroke="#4e3222" stroke-width="1.0"/><path d="M922.9 232.3A11.7 7.8 0 0 1 904.0 228.8" stroke="#160c06" stroke-width="1.9"/><path d="M867.5 259.7A5.1 4.9 0 1 1 860.1 254.5" stroke="#583a28" stroke-width="2.0"/><path d="M918.7 305.2A6.7 5.4 0 1 1 922.5 297.5" stroke="#0f0804" stroke-width="1.4"/><path d="M861.9 426.7A12.3 8.2 0 1 1 858.4 410.5" stroke="#4e3222" stroke-width="1.4"/><path d="M1033.4 291.3A6.0 4.2 0 1 1 1022.7 287.8" stroke="#40271a" stroke-width="1.3"/><path d="M973.3 254.2A13.0 11.5 0 1 1 948.5 249.4" stroke="#583a28" stroke-width="2.0"/><path d="M1131.1 390.5A10.2 8.5 0 0 1 1137.6 374.5" stroke="#160c06" stroke-width="2.6"/><path d="M925.6 240.2A12.9 8.3 0 0 1 944.2 250.4" stroke="#583a28" stroke-width="2.4"/><path d="M980.3 349.0A10.5 8.6 0 1 1 996.7 358.5" stroke="#160c06" stroke-width="1.5"/><path d="M1006.3 289.0A6.0 4.5 0 0 1 1001.5 295.2" stroke="#5e3f2c" stroke-width="1.8"/><path d="M1139.1 373.4A11.2 6.8 0 1 1 1137.9 385.4" stroke="#40271a" stroke-width="1.3"/><path d="M1056.8 363.3A11.2 8.8 0 1 1 1043.5 375.5" stroke="#583a28" stroke-width="1.5"/><path d="M1013.3 370.0A11.9 9.2 0 0 1 1015.4 351.8" stroke="#583a28" stroke-width="1.6"/><path d="M834.8 354.1A9.7 7.5 0 0 1 836.6 340.6" stroke="#40271a" stroke-width="1.0"/><path d="M991.8 214.4A11.1 10.9 0 0 1 999.7 234.8" stroke="#5e3f2c" stroke-width="2.2"/><path d="M836.6 436.9A6.6 4.8 0 0 1 849.0 437.4" stroke="#5e3f2c" stroke-width="1.0"/><path d="M1145.7 463.3A9.0 6.0 0 0 1 1157.8 472.2" stroke="#48301f" stroke-width="1.6"/><path d="M1003.4 323.7A6.7 4.9 0 1 1 990.8 321.8" stroke="#4e3222" stroke-width="2.5"/><path d="M865.3 302.6A9.4 6.5 0 0 1 878.3 294.4" stroke="#48301f" stroke-width="2.0"/><path d="M889.0 376.0A9.3 6.4 0 1 1 877.8 384.5" stroke="#48301f" stroke-width="1.6"/><path d="M938.0 321.3A6.3 4.4 0 0 1 927.6 326.2" stroke="#583a28" stroke-width="2.2"/><path d="M1094.3 284.3A5.3 4.9 0 1 1 1089.8 275.3" stroke="#4e3222" stroke-width="2.5"/><path d="M922.5 333.0A12.4 8.6 0 1 1 933.4 347.3" stroke="#40271a" stroke-width="2.5"/><path d="M1029.2 270.3A8.4 8.1 0 0 1 1040.8 261.8" stroke="#5e3f2c" stroke-width="1.4"/><path d="M845.4 429.5A9.4 7.9 0 0 1 835.4 419.4" stroke="#4e3222" stroke-width="1.3"/><path d="M972.6 248.0A5.8 3.5 0 0 1 981.8 250.3" stroke="#40271a" stroke-width="1.1"/><path d="M785.7 458.2A12.2 9.5 0 0 1 808.1 464.5" stroke="#160c06" stroke-width="1.7"/><path d="M973.2 260.4A10.1 7.8 0 1 1 985.3 252.4" stroke="#5e3f2c" stroke-width="1.4"/><path d="M878.4 325.0A12.0 7.5 0 0 1 887.2 311.1" stroke="#48301f" stroke-width="2.4"/><path d="M863.4 312.2A12.1 9.5 0 1 1 878.8 300.6" stroke="#0f0804" stroke-width="2.4"/><path d="M986.1 345.7A8.3 7.0 0 1 1 989.6 359.4" stroke="#0f0804" stroke-width="1.7"/><path d="M1001.0 218.6A8.2 6.2 0 1 1 1007.7 227.5" stroke="#583a28" stroke-width="2.2"/><path d="M835.1 357.4A7.7 6.2 0 1 1 831.5 368.4" stroke="#583a28" stroke-width="1.1"/><path d="M1075.7 260.2A9.6 7.8 0 1 1 1066.8 273.6" stroke="#583a28" stroke-width="1.4"/><path d="M1061.5 283.7A12.1 10.3 0 0 1 1085.5 281.2" stroke="#5e3f2c" stroke-width="1.7"/><path d="M1113.6 354.8A12.9 11.7 0 1 1 1092.6 346.8" stroke="#160c06" stroke-width="1.9"/><path d="M817.3 289.9A10.7 8.0 0 0 1 803.7 277.5" stroke="#160c06" stroke-width="1.3"/><path d="M845.6 340.5A9.6 9.2 0 1 1 829.5 331.0" stroke="#4e3222" stroke-width="2.2"/><path d="M1144.2 324.4A9.0 8.4 0 0 1 1157.4 335.2" stroke="#23140b" stroke-width="1.4"/><path d="M1088.9 319.7A7.5 6.1 0 1 1 1080.4 329.4" stroke="#583a28" stroke-width="1.1"/><path d="M1022.7 252.9A13.5 10.9 0 1 1 1042.3 238.7" stroke="#583a28" stroke-width="2.4"/><path d="M1120.3 427.7A7.0 6.1 0 1 1 1130.5 420.5" stroke="#583a28" stroke-width="1.7"/><path d="M1013.2 343.9A8.4 8.2 0 1 1 999.0 335.2" stroke="#0f0804" stroke-width="2.2"/><path d="M800.6 455.9A8.3 6.1 0 1 1 810.3 461.7" stroke="#160c06" stroke-width="1.3"/><path d="M1058.8 381.4A12.7 10.0 0 0 1 1083.0 381.6" stroke="#5e3f2c" stroke-width="1.1"/><path d="M996.1 331.7A11.7 10.0 0 0 1 985.0 314.2" stroke="#5e3f2c" stroke-width="2.2"/><path d="M1047.6 258.2A11.6 8.7 0 0 1 1032.4 245.3" stroke="#48301f" stroke-width="1.5"/><path d="M873.4 252.3A10.9 7.7 0 1 1 885.9 241.4" stroke="#583a28" stroke-width="1.7"/><path d="M1156.6 449.9A11.3 11.0 0 1 1 1139.4 456.9" stroke="#23140b" stroke-width="1.3"/><path d="M948.8 212.1A10.1 10.0 0 0 1 962.7 198.0" stroke="#5e3f2c" stroke-width="1.1"/><path d="M935.1 334.0A12.6 10.9 0 0 1 956.1 341.0" stroke="#160c06" stroke-width="2.1"/><path d="M843.8 380.3A11.7 11.0 0 1 1 844.3 358.3" stroke="#48301f" stroke-width="1.6"/><path d="M886.3 353.9A11.0 8.1 0 0 1 875.2 365.0" stroke="#5e3f2c" stroke-width="2.3"/><path d="M923.3 260.0A8.8 7.6 0 0 1 931.5 273.4" stroke="#583a28" stroke-width="2.1"/><path d="M1126.3 335.2A9.8 7.6 0 0 1 1140.3 343.6" stroke="#0f0804" stroke-width="1.6"/><path d="M799.3 436.0A8.5 6.6 0 0 1 799.9 447.3" stroke="#583a28" stroke-width="2.1"/><path d="M882.9 331.4A6.2 4.0 0 0 1 879.0 324.7" stroke="#5e3f2c" stroke-width="1.7"/><path d="M883.5 232.9A11.9 10.8 0 0 1 904.5 224.8" stroke="#0f0804" stroke-width="1.5"/><path d="M951.8 312.0A11.3 8.2 0 1 1 971.5 307.7" stroke="#4e3222" stroke-width="1.9"/><path d="M1033.7 224.2A8.9 7.7 0 0 1 1048.4 232.8" stroke="#48301f" stroke-width="1.7"/><path d="M965.0 256.9A12.5 10.6 0 1 1 963.2 276.8" stroke="#5e3f2c" stroke-width="2.6"/><path d="M1063.9 295.8A9.6 7.2 0 1 1 1080.1 301.6" stroke="#5e3f2c" stroke-width="1.0"/><path d="M959.7 270.6A10.0 8.0 0 1 1 952.6 283.3" stroke="#5e3f2c" stroke-width="1.1"/><path d="M1007.6 347.0A9.6 6.5 0 0 1 1017.4 337.2" stroke="#5e3f2c" stroke-width="1.8"/><path d="M792.1 370.7A12.5 12.2 0 0 1 811.8 382.0" stroke="#583a28" stroke-width="2.4"/><path d="M840.5 260.9A9.1 6.6 0 1 1 854.1 266.4" stroke="#4e3222" stroke-width="2.1"/><path d="M935.8 323.9A13.3 12.0 0 0 1 952.1 342.9" stroke="#0f0804" stroke-width="2.5"/><path d="M1040.2 220.3A6.7 5.8 0 0 1 1036.7 211.4" stroke="#583a28" stroke-width="2.0"/><path d="M822.0 312.1A11.6 8.9 0 0 1 803.2 310.9" stroke="#160c06" stroke-width="1.4"/><path d="M942.9 336.3A12.5 11.7 0 1 1 924.7 331.0" stroke="#583a28" stroke-width="1.6"/><path d="M862.5 329.4A6.4 4.5 0 0 1 869.8 323.7" stroke="#40271a" stroke-width="1.9"/><path d="M822.2 410.2A10.8 8.7 0 1 1 806.4 420.2" stroke="#4e3222" stroke-width="1.7"/><path d="M1078.8 385.2A13.5 12.8 0 1 1 1093.6 369.1" stroke="#48301f" stroke-width="2.2"/><path d="M889.6 326.2A13.4 10.8 0 1 1 887.5 343.3" stroke="#160c06" stroke-width="1.3"/><path d="M1034.0 334.3A6.9 6.2 0 0 1 1033.9 322.1" stroke="#40271a" stroke-width="1.5"/><path d="M811.8 425.5A11.8 7.4 0 1 1 794.1 433.1" stroke="#0f0804" stroke-width="2.5"/><path d="M785.3 332.6A12.7 9.9 0 0 1 805.3 344.3" stroke="#160c06" stroke-width="1.0"/><path d="M978.4 217.9A10.0 6.9 0 0 1 997.8 216.5" stroke="#583a28" stroke-width="1.9"/><path d="M897.4 339.1A13.9 10.8 0 0 1 875.2 349.0" stroke="#48301f" stroke-width="2.2"/><path d="M865.1 363.8A11.6 11.2 0 1 1 856.4 384.6" stroke="#0f0804" stroke-width="2.3"/><path d="M926.9 282.1A10.6 6.8 0 0 1 908.9 277.4" stroke="#23140b" stroke-width="2.2"/><path d="M970.3 319.3A13.9 10.1 0 0 1 965.1 299.6" stroke="#4e3222" stroke-width="1.7"/><path d="M904.0 359.7A6.9 5.0 0 1 1 893.3 362.7" stroke="#4e3222" stroke-width="2.0"/><path d="M829.0 427.9A13.5 8.6 0 1 1 804.9 435.5" stroke="#40271a" stroke-width="1.8"/><path d="M1083.2 392.0A10.1 6.4 0 0 1 1068.4 385.5" stroke="#23140b" stroke-width="1.6"/><path d="M929.4 233.2A5.6 3.9 0 0 1 940.3 231.3" stroke="#160c06" stroke-width="1.6"/><path d="M908.5 247.3A11.3 10.4 0 1 1 926.3 235.0" stroke="#40271a" stroke-width="1.1"/><path d="M1010.4 217.7A10.3 6.8 0 0 1 1028.3 211.3" stroke="#48301f" stroke-width="1.1"/><path d="M839.0 355.9A9.8 7.1 0 1 1 837.3 341.9" stroke="#4e3222" stroke-width="1.8"/><path d="M1017.0 238.9A8.6 7.4 0 0 1 1007.9 248.1" stroke="#23140b" stroke-width="1.4"/><path d="M947.8 218.1A9.1 6.1 0 0 1 934.6 224.9" stroke="#0f0804" stroke-width="2.0"/><path d="M839.3 272.2A10.4 9.2 0 0 1 828.5 260.9" stroke="#0f0804" stroke-width="2.3"/><path d="M1099.4 257.3A7.8 6.6 0 1 1 1109.8 266.8" stroke="#160c06" stroke-width="1.6"/><path d="M959.6 274.5A7.6 5.0 0 1 1 974.3 274.8" stroke="#0f0804" stroke-width="1.2"/><path d="M1143.5 385.8A5.1 3.7 0 0 1 1149.7 380.1" stroke="#40271a" stroke-width="2.3"/><path d="M1002.3 295.1A11.6 11.6 0 0 1 1020.0 283.1" stroke="#5e3f2c" stroke-width="1.6"/><path d="M923.4 253.5A8.8 6.1 0 1 1 915.1 243.4" stroke="#5e3f2c" stroke-width="2.3"/><path d="M796.4 356.3A6.1 3.7 0 0 1 804.7 351.0" stroke="#5e3f2c" stroke-width="2.5"/><path d="M987.1 366.9A13.5 10.8 0 0 1 984.8 347.1" stroke="#0f0804" stroke-width="1.4"/><path d="M925.7 351.0A7.9 6.3 0 1 1 925.6 339.6" stroke="#5e3f2c" stroke-width="1.6"/><path d="M1126.5 312.1A8.0 7.4 0 0 1 1142.1 315.1" stroke="#583a28" stroke-width="1.8"/><path d="M1105.9 316.4A12.3 12.3 0 1 1 1107.3 338.5" stroke="#40271a" stroke-width="2.6"/><path d="M800.7 300.3A10.3 9.9 0 1 1 794.0 318.7" stroke="#583a28" stroke-width="2.2"/><path d="M898.5 280.9A13.1 8.4 0 1 1 882.1 288.3" stroke="#0f0804" stroke-width="2.2"/><path d="M1149.7 416.6A7.5 5.3 0 0 1 1136.3 414.6" stroke="#48301f" stroke-width="1.6"/><path d="M809.7 318.2A9.2 5.6 0 1 1 814.4 309.1" stroke="#0f0804" stroke-width="1.6"/><path d="M792.8 447.8A12.0 9.5 0 0 1 799.3 465.8" stroke="#4e3222" stroke-width="1.8"/><path d="M1119.0 362.2A14.0 10.0 0 0 1 1092.8 364.2" stroke="#4e3222" stroke-width="2.0"/><path d="M822.9 288.0A11.2 7.5 0 0 1 819.0 300.3" stroke="#48301f" stroke-width="1.9"/><path d="M820.7 441.2A10.4 9.2 0 1 1 799.9 440.8" stroke="#160c06" stroke-width="2.4"/><path d="M1122.2 483.8A6.2 5.1 0 0 1 1128.4 476.7" stroke="#160c06" stroke-width="1.0"/><path d="M1094.3 387.2A8.8 6.1 0 0 1 1109.6 386.8" stroke="#5e3f2c" stroke-width="1.1"/><path d="M823.0 381.5A6.2 4.4 0 0 1 832.9 379.0" stroke="#5e3f2c" stroke-width="1.8"/><path d="M985.3 271.5A12.1 8.9 0 0 1 967.0 276.7" stroke="#5e3f2c" stroke-width="2.3"/><path d="M955.7 373.2A7.3 4.6 0 1 1 969.1 371.3" stroke="#5e3f2c" stroke-width="1.3"/><path d="M923.2 255.2A12.7 8.4 0 1 1 924.5 270.7" stroke="#4e3222" stroke-width="1.2"/><path d="M860.2 283.3A9.6 9.0 0 1 1 845.9 291.5" stroke="#4e3222" stroke-width="1.1"/><path d="M918.0 294.2A10.5 8.0 0 1 1 897.6 290.8" stroke="#4e3222" stroke-width="1.3"/><path d="M957.0 263.2A7.2 6.5 0 1 1 944.0 259.7" stroke="#48301f" stroke-width="1.1"/><path d="M1134.3 369.2A11.8 7.6 0 0 1 1157.7 370.2" stroke="#0f0804" stroke-width="2.4"/><path d="M1021.4 207.7A6.9 6.2 0 1 1 1009.2 205.7" stroke="#4e3222" stroke-width="2.6"/><path d="M1028.8 291.7A11.7 11.3 0 0 1 1045.8 281.5" stroke="#4e3222" stroke-width="1.6"/><path d="M1101.2 255.6A8.1 6.2 0 0 1 1099.0 245.5" stroke="#4e3222" stroke-width="2.2"/><path d="M1110.1 310.0A13.7 12.7 0 1 1 1129.2 328.2" stroke="#48301f" stroke-width="2.2"/><path d="M819.3 478.2A9.9 9.4 0 1 1 819.1 461.3" stroke="#583a28" stroke-width="1.8"/><path d="M959.7 325.6A13.4 10.0 0 1 1 978.0 339.1" stroke="#48301f" stroke-width="2.3"/><path d="M1114.4 439.1A11.4 10.6 0 0 1 1124.6 420.2" stroke="#40271a" stroke-width="1.2"/><path d="M943.8 319.5A11.8 9.4 0 0 1 941.4 303.4" stroke="#583a28" stroke-width="1.7"/><path d="M906.4 345.4A11.8 11.1 0 1 1 889.8 335.9" stroke="#48301f" stroke-width="2.2"/><path d="M1052.8 225.6A8.7 8.3 0 0 1 1065.2 217.5" stroke="#48301f" stroke-width="1.2"/><path d="M866.2 306.9A5.7 4.4 0 1 1 864.7 299.7" stroke="#40271a" stroke-width="2.1"/><path d="M1006.4 348.2A9.6 5.9 0 1 1 1022.2 348.5" stroke="#160c06" stroke-width="1.7"/><path d="M823.2 405.3A9.6 5.9 0 0 1 814.9 415.5" stroke="#48301f" stroke-width="2.1"/><path d="M977.5 270.3A6.5 5.6 0 1 1 988.7 266.6" stroke="#23140b" stroke-width="1.9"/><path d="M1104.5 275.7A6.9 4.4 0 0 1 1116.4 279.0" stroke="#40271a" stroke-width="2.5"/><path d="M1038.2 332.6A7.6 6.7 0 1 1 1045.1 343.7" stroke="#23140b" stroke-width="1.1"/><path d="M800.1 385.1A13.5 11.6 0 0 1 809.6 364.6" stroke="#40271a" stroke-width="1.3"/><path d="M809.5 309.6A13.2 8.9 0 1 1 832.6 313.5" stroke="#48301f" stroke-width="1.2"/><path d="M1120.4 267.1A8.3 7.3 0 0 1 1111.6 275.8" stroke="#4e3222" stroke-width="2.6"/><path d="M913.9 274.8A14.0 11.1 0 1 1 931.2 291.0" stroke="#48301f" stroke-width="1.6"/><path d="M885.6 280.2A7.0 4.6 0 0 1 895.1 285.1" stroke="#5e3f2c" stroke-width="2.6"/><path d="M1072.6 260.0A9.6 5.9 0 1 1 1053.8 258.0" stroke="#40271a" stroke-width="1.7"/><path d="M795.5 414.7A5.7 3.4 0 0 1 804.0 412.5" stroke="#160c06" stroke-width="2.6"/><path d="M1131.2 441.3A7.9 7.5 0 1 1 1124.8 451.7" stroke="#4e3222" stroke-width="1.7"/><path d="M1005.6 200.4A9.0 7.2 0 1 1 990.5 206.8" stroke="#23140b" stroke-width="2.2"/><path d="M1149.0 327.0A12.6 9.1 0 0 1 1124.6 329.5" stroke="#160c06" stroke-width="2.0"/><path d="M830.0 448.6A5.4 5.1 0 1 1 829.4 457.7" stroke="#23140b" stroke-width="2.6"/><path d="M1117.0 346.3A11.7 10.2 0 1 1 1106.2 364.2" stroke="#48301f" stroke-width="1.3"/><path d="M1091.4 245.9A12.7 8.4 0 0 1 1100.4 259.9" stroke="#48301f" stroke-width="2.0"/><path d="M848.4 463.8A6.9 4.5 0 1 1 838.3 466.5" stroke="#23140b" stroke-width="2.5"/><path d="M955.5 314.8A7.1 6.8 0 0 1 950.3 327.1" stroke="#4e3222" stroke-width="2.3"/><path d="M817.1 287.9A11.1 9.6 0 0 1 795.9 282.7" stroke="#40271a" stroke-width="1.9"/><path d="M918.6 335.9A5.6 4.1 0 0 1 908.8 337.9" stroke="#5e3f2c" stroke-width="1.6"/></g><ellipse cx="960" cy="265" rx="150" ry="45" fill="#6a4630" opacity=".12" filter="url(#b14)"/><path d="M1115.0 434.0C1114.5 431.7 1113.5 425.2 1112.0 420.0C1110.5 414.8 1109.8 406.9 1106.0 403.0C1102.2 399.1 1095.5 399.0 1089.0 396.5C1082.5 394.0 1074.2 391.6 1067.0 388.0C1059.8 384.4 1053.0 378.8 1046.0 375.0C1039.0 371.2 1032.0 367.4 1025.0 365.0C1018.0 362.6 1011.2 361.2 1004.0 360.5C996.8 359.8 987.3 357.4 982.0 360.5C976.7 363.6 978.7 376.2 972.0 379.0C965.3 381.8 948.2 379.5 942.0 377.5C935.8 375.5 937.8 368.8 935.0 367.0C932.2 365.2 929.5 365.7 925.0 367.0C920.5 368.3 913.7 372.5 908.0 375.0C902.3 377.5 897.0 378.8 891.0 382.0C885.0 385.2 877.0 388.2 872.0 394.5C867.0 400.8 864.2 412.4 861.0 420.0C857.8 427.6 854.3 436.7 853.0 440.0" fill="none" stroke="#0d0703" stroke-width="16" opacity=".55" filter="url(#b4)"/></g><g fill="none" stroke-linecap="round"><path d="M799.6 471.9A6.8 6.8 0 1 1 805.3 462.3" stroke="#3a2416" stroke-width="1.8"/><path d="M794.0 453.1A5.9 5.9 0 1 1 796.8 463.0" stroke="#3a2416" stroke-width="2.1"/><path d="M795.5 446.2A4.8 4.8 0 1 1 788.4 450.6" stroke="#27170b" stroke-width="1.9"/><path d="M787.6 447.1A3.9 3.9 0 1 1 792.1 453.1" stroke="#1a0f07" stroke-width="2.4"/><path d="M798.7 436.3A6.4 6.4 0 1 1 786.6 436.2" stroke="#27170b" stroke-width="2.7"/><path d="M795.8 429.8A5.4 5.4 0 1 1 787.2 429.7" stroke="#33200f" stroke-width="1.5"/><path d="M800.8 421.0A5.2 5.2 0 1 1 793.3 417.5" stroke="#27170b" stroke-width="2.0"/><path d="M793.0 423.6A4.7 4.7 0 1 1 801.4 420.1" stroke="#1a0f07" stroke-width="1.8"/><path d="M796.8 410.9A3.4 3.4 0 1 1 795.3 416.8" stroke="#1a0f07" stroke-width="2.7"/><path d="M808.8 404.1A5.3 5.3 0 0 1 798.3 404.8" stroke="#3a2416" stroke-width="2.7"/><path d="M800.2 398.1A6.3 6.3 0 1 1 802.1 409.0" stroke="#3a2416" stroke-width="2.0"/><path d="M803.3 401.4A6.3 6.3 0 1 1 814.2 397.5" stroke="#3a2416" stroke-width="1.0"/><path d="M805.6 395.3A5.3 5.3 0 1 1 810.4 386.4" stroke="#27170b" stroke-width="2.3"/><path d="M801.2 389.0A7.2 7.2 0 1 1 812.7 386.7" stroke="#3a2416" stroke-width="2.3"/><path d="M798.7 372.5A4.5 4.5 0 0 1 803.1 380.0" stroke="#1a0f07" stroke-width="2.2"/><path d="M795.0 375.5A4.3 4.3 0 1 1 801.0 377.7" stroke="#27170b" stroke-width="3.0"/><path d="M791.2 368.6A5.4 5.4 0 1 1 798.4 370.8" stroke="#27170b" stroke-width="2.5"/><path d="M793.9 363.8A5.2 5.2 0 1 1 796.1 353.8" stroke="#1a0f07" stroke-width="2.8"/><path d="M791.6 346.5A5.2 5.2 0 1 1 789.0 355.1" stroke="#33200f" stroke-width="2.1"/><path d="M787.4 344.2A4.9 4.9 0 1 1 791.5 350.6" stroke="#27170b" stroke-width="1.6"/><path d="M788.2 334.4A6.9 6.9 0 1 1 788.5 345.5" stroke="#1a0f07" stroke-width="1.8"/><path d="M790.2 328.8A3.4 3.4 0 0 1 796.1 331.8" stroke="#33200f" stroke-width="2.3"/><path d="M788.4 328.1A6.1 6.1 0 1 1 800.0 324.0" stroke="#33200f" stroke-width="2.2"/><path d="M792.0 314.9A5.4 5.4 0 1 1 793.6 323.4" stroke="#1a0f07" stroke-width="2.4"/><path d="M802.6 312.5A5.1 5.1 0 0 1 793.8 307.8" stroke="#1a0f07" stroke-width="1.1"/><path d="M794.6 305.6A6.6 6.6 0 1 1 797.5 313.3" stroke="#27170b" stroke-width="1.3"/><path d="M800.8 304.2A5.9 5.9 0 0 1 805.6 293.7" stroke="#1a0f07" stroke-width="1.5"/><path d="M804.6 288.3A5.9 5.9 0 1 1 803.0 299.1" stroke="#33200f" stroke-width="2.1"/><path d="M813.5 279.4A7.3 7.3 0 0 1 809.7 292.9" stroke="#27170b" stroke-width="2.0"/><path d="M810.9 280.9A4.0 4.0 0 1 1 811.9 274.4" stroke="#1a0f07" stroke-width="1.4"/><path d="M810.2 280.2A7.0 7.0 0 0 1 816.2 267.9" stroke="#27170b" stroke-width="2.5"/><path d="M816.6 265.9A4.0 4.0 0 1 1 811.1 260.2" stroke="#1a0f07" stroke-width="2.8"/><path d="M824.9 259.2A6.0 6.0 0 0 1 814.4 264.1" stroke="#27170b" stroke-width="1.1"/><path d="M816.4 255.4A7.4 7.4 0 1 1 823.8 262.0" stroke="#33200f" stroke-width="2.9"/><path d="M819.9 249.3A4.2 4.2 0 1 1 828.1 247.2" stroke="#1a0f07" stroke-width="1.1"/><path d="M824.9 241.2A6.1 6.1 0 1 1 831.7 247.1" stroke="#27170b" stroke-width="1.8"/><path d="M842.7 231.6A5.3 5.3 0 1 1 834.9 230.9" stroke="#27170b" stroke-width="1.5"/><path d="M843.9 227.7A4.2 4.2 0 1 1 838.9 225.0" stroke="#1a0f07" stroke-width="2.1"/><path d="M846.5 235.2A6.4 6.4 0 0 1 847.8 222.5" stroke="#27170b" stroke-width="2.4"/><path d="M851.9 223.9A4.2 4.2 0 1 1 856.6 228.9" stroke="#3a2416" stroke-width="1.6"/><path d="M860.6 221.6A3.0 3.0 0 1 1 856.2 218.3" stroke="#27170b" stroke-width="1.8"/><path d="M872.4 226.1A4.4 4.4 0 0 1 865.3 220.7" stroke="#33200f" stroke-width="1.7"/><path d="M870.1 221.6A3.7 3.7 0 1 1 875.1 226.6" stroke="#3a2416" stroke-width="2.1"/><path d="M875.8 219.1A5.2 5.2 0 1 1 877.6 229.0" stroke="#3a2416" stroke-width="2.9"/><path d="M880.6 229.2A4.5 4.5 0 1 1 885.0 223.6" stroke="#27170b" stroke-width="1.3"/><path d="M899.7 230.2A7.0 7.0 0 1 1 889.0 223.6" stroke="#27170b" stroke-width="2.1"/><path d="M899.8 222.7A4.8 4.8 0 1 1 891.1 223.8" stroke="#1a0f07" stroke-width="2.7"/><path d="M907.6 229.5A7.0 7.0 0 1 1 904.4 218.9" stroke="#33200f" stroke-width="1.3"/><path d="M912.6 220.5A3.0 3.0 0 1 1 908.7 216.0" stroke="#27170b" stroke-width="1.5"/><path d="M912.1 220.1A5.5 5.5 0 1 1 918.5 223.1" stroke="#3a2416" stroke-width="2.0"/><path d="M918.5 210.8A6.9 6.9 0 1 1 917.4 224.7" stroke="#33200f" stroke-width="2.6"/><path d="M930.3 210.4A5.7 5.7 0 1 1 921.2 214.6" stroke="#3a2416" stroke-width="1.6"/><path d="M931.1 217.0A5.2 5.2 0 1 1 935.5 210.4" stroke="#27170b" stroke-width="2.4"/><path d="M933.0 209.7A5.9 5.9 0 1 1 944.7 210.6" stroke="#3a2416" stroke-width="2.3"/><path d="M946.0 202.8A4.2 4.2 0 1 1 948.2 208.3" stroke="#1a0f07" stroke-width="2.2"/><path d="M954.6 200.8A5.4 5.4 0 1 1 957.4 210.5" stroke="#1a0f07" stroke-width="2.0"/><path d="M966.8 203.2A4.2 4.2 0 1 1 961.2 199.1" stroke="#33200f" stroke-width="2.5"/><path d="M972.2 203.0A6.6 6.6 0 1 1 964.6 199.0" stroke="#27170b" stroke-width="2.4"/><path d="M978.2 207.3A4.9 4.9 0 1 1 981.6 200.5" stroke="#3a2416" stroke-width="2.1"/><path d="M982.6 202.8A4.8 4.8 0 1 1 976.0 201.5" stroke="#33200f" stroke-width="1.0"/><path d="M991.6 198.7A4.2 4.2 0 1 1 988.2 205.7" stroke="#33200f" stroke-width="2.4"/><path d="M999.4 199.5A6.7 6.7 0 1 1 990.2 209.1" stroke="#27170b" stroke-width="2.2"/><path d="M998.4 210.3A5.3 5.3 0 1 1 1004.8 208.6" stroke="#1a0f07" stroke-width="1.4"/><path d="M1010.2 202.8A5.0 5.0 0 1 1 1001.2 207.0" stroke="#33200f" stroke-width="1.5"/><path d="M1007.1 210.7A6.6 6.6 0 0 1 1010.7 198.2" stroke="#1a0f07" stroke-width="1.9"/><path d="M1014.5 204.5A3.6 3.6 0 1 1 1020.8 202.3" stroke="#1a0f07" stroke-width="2.1"/><path d="M1030.3 205.9A6.6 6.6 0 1 1 1020.2 206.9" stroke="#1a0f07" stroke-width="1.8"/><path d="M1032.0 209.8A3.2 3.2 0 1 1 1026.1 207.8" stroke="#1a0f07" stroke-width="1.1"/><path d="M1034.4 210.0A6.6 6.6 0 0 1 1042.2 220.3" stroke="#3a2416" stroke-width="1.5"/><path d="M1045.6 221.6A4.6 4.6 0 1 1 1043.8 213.9" stroke="#33200f" stroke-width="1.5"/><path d="M1048.8 224.3A4.5 4.5 0 1 1 1052.1 216.0" stroke="#3a2416" stroke-width="1.4"/><path d="M1055.8 219.5A6.3 6.3 0 1 1 1044.6 223.4" stroke="#1a0f07" stroke-width="2.4"/><path d="M1065.7 225.8A4.7 4.7 0 1 1 1064.0 219.1" stroke="#3a2416" stroke-width="1.9"/><path d="M1071.8 222.7A3.2 3.2 0 1 1 1066.8 226.6" stroke="#27170b" stroke-width="2.0"/><path d="M1068.9 229.2A5.2 5.2 0 1 1 1075.0 235.0" stroke="#27170b" stroke-width="2.8"/><path d="M1070.5 227.8A6.3 6.3 0 1 1 1073.7 236.7" stroke="#3a2416" stroke-width="2.4"/><path d="M1095.0 235.1A6.5 6.5 0 1 1 1090.3 227.7" stroke="#33200f" stroke-width="2.4"/><path d="M1096.1 234.1A3.7 3.7 0 0 1 1094.0 240.9" stroke="#1a0f07" stroke-width="2.8"/><path d="M1101.4 246.1A7.4 7.4 0 1 1 1097.1 233.7" stroke="#1a0f07" stroke-width="1.5"/><path d="M1104.4 237.9A3.1 3.1 0 1 1 1100.3 242.5" stroke="#33200f" stroke-width="1.4"/><path d="M1105.1 255.4A6.9 6.9 0 1 1 1113.2 244.4" stroke="#27170b" stroke-width="1.2"/><path d="M1115.0 254.6A3.8 3.8 0 0 1 1117.8 247.9" stroke="#3a2416" stroke-width="1.2"/><path d="M1122.7 255.6A5.2 5.2 0 1 1 1119.7 248.9" stroke="#3a2416" stroke-width="1.0"/><path d="M1123.0 266.3A4.2 4.2 0 1 1 1127.0 262.9" stroke="#3a2416" stroke-width="2.5"/><path d="M1120.8 265.3A5.3 5.3 0 1 1 1123.1 272.7" stroke="#3a2416" stroke-width="2.6"/><path d="M1120.5 265.9A6.0 6.0 0 1 1 1122.1 274.5" stroke="#3a2416" stroke-width="1.4"/><path d="M1124.6 277.8A6.5 6.5 0 1 1 1133.3 284.1" stroke="#3a2416" stroke-width="2.1"/><path d="M1131.7 279.3A6.4 6.4 0 0 1 1138.2 290.1" stroke="#1a0f07" stroke-width="1.9"/><path d="M1134.2 292.7A4.4 4.4 0 1 1 1140.3 298.3" stroke="#27170b" stroke-width="2.5"/><path d="M1142.6 291.6A5.4 5.4 0 1 1 1134.1 293.5" stroke="#33200f" stroke-width="1.2"/><path d="M1135.7 306.0A4.5 4.5 0 1 1 1142.8 300.6" stroke="#1a0f07" stroke-width="1.7"/><path d="M1141.2 309.3A3.2 3.2 0 1 1 1146.4 306.0" stroke="#3a2416" stroke-width="1.7"/><path d="M1140.0 319.8A6.6 6.6 0 1 1 1144.1 308.1" stroke="#27170b" stroke-width="2.1"/><path d="M1148.4 324.4A6.1 6.1 0 1 1 1139.5 316.6" stroke="#33200f" stroke-width="2.3"/><path d="M1135.4 324.0A6.7 6.7 0 0 1 1148.7 324.2" stroke="#3a2416" stroke-width="1.3"/><path d="M1146.7 341.1A4.7 4.7 0 0 1 1146.5 331.8" stroke="#33200f" stroke-width="1.1"/><path d="M1147.6 333.9A3.5 3.5 0 0 1 1149.8 340.5" stroke="#1a0f07" stroke-width="1.7"/><path d="M1139.4 345.6A6.5 6.5 0 0 1 1151.5 342.3" stroke="#1a0f07" stroke-width="2.8"/><path d="M1149.7 359.0A4.7 4.7 0 1 1 1154.4 353.0" stroke="#27170b" stroke-width="2.4"/><path d="M1152.3 353.8A7.4 7.4 0 1 1 1142.2 361.6" stroke="#27170b" stroke-width="1.4"/><path d="M1155.3 363.3A6.8 6.8 0 1 1 1147.1 355.8" stroke="#27170b" stroke-width="1.4"/><path d="M1151.4 365.8A5.8 5.8 0 1 1 1144.0 373.6" stroke="#3a2416" stroke-width="1.8"/><path d="M1153.6 383.3A6.1 6.1 0 1 1 1156.2 373.1" stroke="#27170b" stroke-width="1.3"/><path d="M1158.4 382.7A5.1 5.1 0 1 1 1148.6 385.0" stroke="#27170b" stroke-width="2.9"/><path d="M1148.0 383.7A6.0 6.0 0 1 1 1152.6 393.5" stroke="#1a0f07" stroke-width="1.2"/><path d="M1157.1 399.6A3.7 3.7 0 1 1 1156.7 393.5" stroke="#3a2416" stroke-width="2.2"/><path d="M1112.0 458.6A5.9 5.9 0 1 1 1123.6 457.0" stroke="#1f120a" stroke-width="1.3"/><path d="M1113.1 450.2A3.2 3.2 0 0 1 1118.8 447.2" stroke="#2a180c" stroke-width="1.4"/><path d="M1115.6 446.9A3.5 3.5 0 1 1 1122.3 445.4" stroke="#2a180c" stroke-width="1.2"/><path d="M1120.4 433.2A5.3 5.3 0 1 1 1110.2 431.1" stroke="#1f120a" stroke-width="1.8"/><path d="M1116.9 440.1A5.5 5.5 0 1 1 1113.2 430.4" stroke="#2a180c" stroke-width="1.1"/><path d="M1113.1 422.6A3.6 3.6 0 0 1 1107.1 418.6" stroke="#2a180c" stroke-width="1.5"/><path d="M1116.1 421.9A5.2 5.2 0 0 1 1107.0 423.4" stroke="#2a180c" stroke-width="1.7"/><path d="M1108.4 418.6A4.9 4.9 0 1 1 1111.0 410.1" stroke="#1f120a" stroke-width="1.7"/><path d="M1108.2 410.5A5.3 5.3 0 0 1 1106.7 399.9" stroke="#2a180c" stroke-width="1.8"/><path d="M1101.7 408.8A5.6 5.6 0 0 1 1100.2 397.8" stroke="#3a2314" stroke-width="1.5"/><path d="M1097.5 405.5A3.0 3.0 0 1 1 1101.6 401.5" stroke="#2a180c" stroke-width="1.4"/><path d="M1098.4 401.0A4.3 4.3 0 0 1 1090.2 398.6" stroke="#2a180c" stroke-width="1.6"/><path d="M1079.2 396.9A4.7 4.7 0 1 1 1087.6 399.2" stroke="#3a2314" stroke-width="2.0"/><path d="M1072.5 394.4A5.5 5.5 0 0 1 1081.7 389.6" stroke="#2a180c" stroke-width="1.3"/><path d="M1078.3 394.5A5.1 5.1 0 1 1 1074.3 385.9" stroke="#3a2314" stroke-width="1.1"/><path d="M1061.2 388.8A4.8 4.8 0 0 1 1068.6 383.8" stroke="#1f120a" stroke-width="1.2"/><path d="M1061.4 386.7A4.2 4.2 0 0 1 1058.4 380.0" stroke="#3a2314" stroke-width="2.1"/><path d="M1049.9 382.1A3.3 3.3 0 0 1 1055.6 379.6" stroke="#2a180c" stroke-width="1.4"/><path d="M1052.7 381.9A4.1 4.1 0 0 1 1045.8 380.6" stroke="#3a2314" stroke-width="1.4"/><path d="M1050.0 377.9A4.7 4.7 0 1 1 1042.1 373.8" stroke="#2a180c" stroke-width="1.0"/><path d="M1034.8 371.3A3.5 3.5 0 0 1 1040.9 368.6" stroke="#2a180c" stroke-width="1.5"/><path d="M1030.7 372.7A3.9 3.9 0 1 1 1029.7 365.1" stroke="#2a180c" stroke-width="2.2"/><path d="M1021.9 367.1A3.1 3.1 0 0 1 1027.0 363.9" stroke="#1f120a" stroke-width="1.7"/><path d="M1010.5 368.5A6.0 6.0 0 0 1 1014.9 357.9" stroke="#1f120a" stroke-width="1.8"/><path d="M1010.6 367.8A5.1 5.1 0 0 1 1003.2 363.1" stroke="#2a180c" stroke-width="1.1"/><path d="M1007.5 366.1A4.3 4.3 0 0 1 1000.2 365.3" stroke="#2a180c" stroke-width="1.1"/><path d="M987.1 362.9A6.0 6.0 0 1 1 997.8 366.3" stroke="#3a2314" stroke-width="1.8"/><path d="M984.9 363.5A3.9 3.9 0 0 1 988.7 357.1" stroke="#3a2314" stroke-width="1.9"/><path d="M972.8 363.7A5.4 5.4 0 0 1 982.0 359.1" stroke="#3a2314" stroke-width="1.2"/><path d="M973.0 370.9A4.4 4.4 0 1 1 981.3 370.5" stroke="#1f120a" stroke-width="1.8"/><path d="M974.1 377.4A4.3 4.3 0 1 1 979.1 371.0" stroke="#2a180c" stroke-width="1.5"/><path d="M964.5 381.6A3.7 3.7 0 0 1 970.6 377.5" stroke="#1f120a" stroke-width="1.3"/><path d="M964.2 385.5A4.5 4.5 0 1 1 963.2 377.0" stroke="#1f120a" stroke-width="1.0"/><path d="M962.5 384.1A6.0 6.0 0 1 1 955.8 374.5" stroke="#1f120a" stroke-width="2.2"/><path d="M953.6 384.1A5.2 5.2 0 0 1 948.4 375.4" stroke="#2a180c" stroke-width="1.1"/><path d="M944.2 378.6A3.1 3.1 0 0 1 948.5 374.3" stroke="#1f120a" stroke-width="1.5"/><path d="M943.0 379.5A3.0 3.0 0 1 1 944.5 373.9" stroke="#3a2314" stroke-width="1.7"/><path d="M940.9 374.5A3.5 3.5 0 0 1 935.1 372.2" stroke="#1f120a" stroke-width="2.1"/><path d="M925.9 369.8A3.1 3.1 0 1 1 930.9 366.4" stroke="#3a2314" stroke-width="1.1"/><path d="M930.2 369.1A4.4 4.4 0 1 1 924.8 363.3" stroke="#2a180c" stroke-width="1.5"/><path d="M920.5 372.0A4.0 4.0 0 0 1 912.9 369.3" stroke="#1f120a" stroke-width="1.8"/><path d="M913.6 376.2A4.4 4.4 0 0 1 908.3 370.2" stroke="#2a180c" stroke-width="2.1"/><path d="M907.8 381.0A5.1 5.1 0 1 1 904.8 371.3" stroke="#1f120a" stroke-width="1.6"/><path d="M905.8 377.9A3.9 3.9 0 0 1 898.5 379.2" stroke="#3a2314" stroke-width="1.6"/><path d="M892.4 384.8A4.1 4.1 0 0 1 890.6 377.1" stroke="#3a2314" stroke-width="2.0"/><path d="M888.4 385.1A4.1 4.1 0 1 1 880.8 382.0" stroke="#1f120a" stroke-width="1.4"/><path d="M876.6 390.2A3.6 3.6 0 1 1 883.1 388.3" stroke="#2a180c" stroke-width="2.1"/><path d="M879.3 397.2A4.6 4.6 0 1 1 879.8 388.2" stroke="#1f120a" stroke-width="1.2"/><path d="M875.1 401.0A5.6 5.6 0 1 1 866.4 394.3" stroke="#3a2314" stroke-width="1.5"/><path d="M865.7 409.2A5.0 5.0 0 0 1 868.9 399.7" stroke="#3a2314" stroke-width="2.1"/><path d="M863.3 411.9A4.0 4.0 0 0 1 869.5 406.8" stroke="#3a2314" stroke-width="1.7"/><path d="M859.9 421.4A3.7 3.7 0 1 1 862.8 415.1" stroke="#1f120a" stroke-width="1.4"/><path d="M858.1 425.0A3.9 3.9 0 1 1 863.7 419.9" stroke="#1f120a" stroke-width="2.0"/><path d="M857.4 436.5A5.8 5.8 0 1 1 854.8 425.3" stroke="#2a180c" stroke-width="1.6"/><path d="M857.8 437.2A5.6 5.6 0 0 1 846.7 436.5" stroke="#1f120a" stroke-width="2.0"/><path d="M855.0 444.6A3.4 3.4 0 0 1 849.1 441.6" stroke="#1f120a" stroke-width="1.7"/><path d="M851.1 451.0A3.9 3.9 0 0 1 850.5 443.5" stroke="#2a180c" stroke-width="1.5"/><path d="M851.4 455.6A3.7 3.7 0 1 1 847.3 449.6" stroke="#1f120a" stroke-width="1.0"/></g></svg>
<div class="t" style="left:290px;top:80px;font-family:'DejaVu Sans','Liberation Sans',sans-serif;font-size:12px;letter-spacing:.63px;line-height:15px;color:#e8181c">Render: Pixel Shader</div>
<div class="t" style="left:290px;top:96px;font-family:'DejaVu Sans','Liberation Sans',sans-serif;font-size:12px;letter-spacing:.63px;line-height:15px;color:#e8181c">Visible Faces Count: 282712</div>
<div class="t" style="left:290px;top:112px;font-family:'DejaVu Sans','Liberation Sans',sans-serif;font-size:12px;letter-spacing:.63px;line-height:15px;color:#e8181c">Picked Faces Count: 0</div>
<div class="a" style="left:1638px;top:958px;width:30px;height:24px;background:#1e1e1e"></div>
<svg style="left:1638px;top:958px" width="30" height="24" viewBox="0 0 30 24"><g fill="none" stroke="#9a9a9a" stroke-width="1.300"><rect x="7.500" y="9.500" width="11" height="8"/><path d="M11.500 9.500v-3h11v8h-4"/></g></svg>
<div class="a" style="left:289px;top:983px;width:1382px;height:57px;background:#f0f0f0"></div>
<div class="a" style="left:289px;top:983px;width:1382px;height:1px;background:#fdfdfd"></div>
<div class="a" style="left:288px;top:77px;width:1px;height:963px;background:#d8d8d8"></div>
<div class="a" style="left:305px;top:993px;width:1356px;height:5px;background:#404040"></div>
<div class="a" style="left:299px;top:989px;width:8px;height:12px;background:#fff;border:1.5px solid #333;border-radius:3px"></div>
<svg style="left:0;top:0" width="1920" height="1080" viewBox="0 0 1920 1080"><path d="M303 1001v6h-7z" fill="#7ab51d"/><path d="M1656 1001l7 6h-7z" fill="#7ab51d"/><path d="M791 1017l9 5.500-9 5.500z" fill="#b4b4b4"/><rect x="827" y="1018" width="9" height="9" fill="#b4b4b4"/><g fill="#1a1a1a"><rect x="862" y="1017" width="1.600" height="11"/><path d="M872 1017v11l-8-5.500z"/><path d="M903.500 1017v11l-7-5.500zM910 1017v11l-7-5.500z"/><path d="M934 1017v11l7-5.500zM940.500 1017v11l7-5.500z"/><path d="M970 1017v11l8-5.500z"/><rect x="978.500" y="1017" width="1.600" height="11"/><rect x="1524" y="1017" width="2.600" height="11"/><rect x="1529" y="1017" width="2.600" height="11"/><rect x="1534" y="1017" width="2.600" height="11"/></g><path d="M1005 1021v-2.500h12v5M1019 1024v2.500h-12v-5" fill="none" stroke="#bdbdbd" stroke-width="1.500"/><path d="M1014.500 1023.500l2.500 3 2.500-3zM1004.500 1021.500l2.500-3 2.500 3z" fill="#bdbdbd"/></svg>
<div class="a" style="left:1548px;top:1012px;width:113px;height:19px;background:#f0f0f0;border:1px solid #a0a0a0;border-right-color:#fff;border-bottom-color:#fff;text-align:center;font-size:11px;line-height:15px">1 / 3420</div>
<div class="a" style="left:1671px;top:77px;width:249px;height:963px;background:#f0f0f0"></div>
<div class="a" style="left:1912px;top:77px;width:4px;height:963px;background:#b2b2b2"></div>
<div class="a" style="left:1916px;top:77px;width:4px;height:963px;background:#787878"></div>
<div class="a" style="left:1916px;top:559px;width:4px;height:252px;background:#000"></div>
<div class="a" style="left:1917px;top:561px;width:1px;height:248px;background:#8a8a8a"></div>
<div class="gb" style="left:1683px;top:664px;width:222px;height:42px"></div>
<div class="lbl" style="left:1688px;top:657px;background:#f0f0f0;padding:0 3px">Head Model</div>
<div class="btn" style="left:1691px;top:676px;width:97px;height:19px;line-height:17px;font-size:11px">Export Model</div>
<div class="btn" style="left:1799px;top:676px;width:97px;height:19px;line-height:17px;font-size:11px">Import Model</div>
<div class="gb" style="left:1683px;top:718px;width:222px;height:70px"></div>
<div class="lbl" style="left:1688px;top:711px;background:#f0f0f0;padding:0 3px">Head Morph</div>
<div class="a" style="left:1693px;top:735px;width:13px;height:13px;background:#fff;border:1px solid #d0d0d0"></div>
<div class="lbl" style="left:1708px;top:735px;color:#6a6a6a">Reference Model</div>
<div class="btn" style="left:1691px;top:759px;width:97px;height:19px;line-height:17px;font-size:11px">Auto Align</div>
<div class="btn" style="left:1799px;top:759px;width:97px;height:19px;line-height:17px;font-size:11px">Export</div>
<div class="a" style="left:1672px;top:797px;width:240px;height:14px;background:#a0a0a0;text-align:center;font-size:11px;line-height:14px;font-family:'DejaVu Sans',sans-serif;letter-spacing:.3px">Material (Y)</div>
<div class="a" style="left:1897px;top:803px;width:5px;height:1px;background:#fff"></div>
<div class="lbl" style="left:1682px;top:819px">Select Material:</div>
<div class="a" style="left:1683px;top:836px;width:143px;height:21px;background:#fff;border:1px solid #d9d9d9"></div>
<div class="a" style="left:1686px;top:839px;width:120px;height:15px;background:#f0f0f0"></div>
<svg style="left:1809px;top:842px" width="12" height="10" viewBox="0 0 12 10"><path d="M2 3l4 4 4-4" fill="none" stroke="#bbb" stroke-width="1.200"/></svg>
<div class="a" style="left:1833px;top:836px;width:28px;height:21px;background:#f4f4f4;border:1px solid #fff;border-right-color:#696969;border-bottom-color:#696969;box-shadow:inset -1px -1px 0 #a0a0a0"></div>
<div class="a" style="left:1870px;top:836px;width:28px;height:21px;background:#f4f4f4;border:1px solid #fff;border-right-color:#696969;border-bottom-color:#696969;box-shadow:inset -1px -1px 0 #a0a0a0"></div>
<div class="a" style="left:1833px;top:864px;width:28px;height:21px;background:#f4f4f4;border:1px solid #fff;border-right-color:#696969;border-bottom-color:#696969;box-shadow:inset -1px -1px 0 #a0a0a0"></div>
<div class="a" style="left:1870px;top:864px;width:28px;height:21px;background:#f4f4f4;border:1px solid #fff;border-right-color:#696969;border-bottom-color:#696969;box-shadow:inset -1px -1px 0 #a0a0a0"></div>
<svg style="left:1830px;top:830px" width="80" height="60" viewBox="1830 830 80 60"><path d="M1841 853l8-8M1848 842l4 4M1850 841l3-3 2 2-3 3z" stroke="#000" stroke-width="1.800" fill="#000"/><path d="M1878 846l5-5 6 6-5 5zM1889 847c2 2 2 4 0 4" fill="#fff" stroke="#bbb" stroke-width="1.300"/><path d="M1840 879v-9h4l1 1.500h6v2M1840 879l2.500-5h11l-2.500 5zM1848 871l4-3" fill="none" stroke="#000" stroke-width="1.300"/><path d="M1876 870h5l3 4-3 4h-5z" fill="none" stroke="#000" stroke-width="1.300"/><rect x="1883" y="869" width="5" height="5" fill="#000"/><rect x="1888" y="874" width="4" height="4" fill="#000"/><rect x="1883.500" y="869.500" width="9" height="9" fill="none" stroke="#000"/></svg>
<div class="btn" style="left:1684px;top:865px;width:137px;height:19px;line-height:17px;font-size:11px">Load Material</div>
<div class="btn" style="left:1684px;top:891px;width:137px;height:19px;line-height:17px;font-size:11px">Save Material</div>
<div class="btn" style="left:1684px;top:917px;width:137px;height:19px;line-height:17px;font-size:11px">Make Unique</div>
<svg style="left:1691px;top:943px;overflow:hidden" width="48" height="48" viewBox="0 0 48 48"><rect width="48" height="48" fill="#8f8f8f"/><path d="M20 44L34 30 40 36 30 48z" fill="#858585"/><path d="M8 19.500L4.200 33M30.500 11L27 24" stroke="#3c3c3c" stroke-width="1.300" fill="none"/><path d="M15 28.500L28 23.500" stroke="#666" stroke-width="3"/><path d="M11.500 19L18.200 40M32 11.500L39 27" stroke="#e9e9e9" stroke-width="2" fill="none"/><path d="M7.200 13L30.800 3.900 32.200 11 8.600 20.200z" fill="#f4f4f4"/><path d="M9.500 12.100l3.300-1.300 1.400 7.200-3.300 1.300zM15.800 9.700l3.300-1.300 1.400 7.200-3.300 1.300zM22.100 7.300l3.300-1.300 1.400 7.200-3.300 1.300zM28.200 4.900l2.600-1 1.400 7.100-2.600 1z" fill="#0c0c0c"/><path d="M7.200 13l1.400 7.200" stroke="#222" stroke-width="1.500"/><path d="M35.600 26.300L45.800 43.500H25.500z" fill="#f2f2f2" stroke="#fff" stroke-width="1" stroke-linejoin="round"/><rect x="34.700" y="32" width="2" height="6.500" fill="#1a1a1a"/><rect x="34.700" y="40" width="2" height="2" fill="#1a1a1a"/><rect x="1" y="1" width="46" height="46" fill="none" stroke="#000" stroke-width="2"/><rect x="2.500" y="2.500" width="43" height="43" fill="none" stroke="#fff" stroke-width="1"/></svg>
<div class="lbl" style="left:1692px;top:997px;color:#a0a0a0">Diffuse</div>
<svg style="left:1691px;top:1016px;overflow:hidden" width="48" height="24" viewBox="0 0 48 24"><rect width="48" height="48" fill="#8f8f8f"/><path d="M20 44L34 30 40 36 30 48z" fill="#858585"/><path d="M8 19.500L4.200 33M30.500 11L27 24" stroke="#3c3c3c" stroke-width="1.300" fill="none"/><path d="M15 28.500L28 23.500" stroke="#666" stroke-width="3"/><path d="M11.500 19L18.200 40M32 11.500L39 27" stroke="#e9e9e9" stroke-width="2" fill="none"/><path d="M7.200 13L30.800 3.900 32.200 11 8.600 20.200z" fill="#f4f4f4"/><path d="M9.500 12.100l3.300-1.300 1.400 7.200-3.300 1.300zM15.800 9.700l3.300-1.300 1.400 7.200-3.300 1.300zM22.100 7.300l3.300-1.300 1.400 7.200-3.300 1.300zM28.200 4.900l2.600-1 1.400 7.100-2.600 1z" fill="#0c0c0c"/><path d="M7.200 13l1.400 7.200" stroke="#222" stroke-width="1.500"/><path d="M35.600 26.300L45.800 43.500H25.500z" fill="#f2f2f2" stroke="#fff" stroke-width="1" stroke-linejoin="round"/><rect x="34.700" y="32" width="2" height="6.500" fill="#1a1a1a"/><rect x="34.700" y="40" width="2" height="2" fill="#1a1a1a"/></svg>
<svg style="left:1768px;top:943px;overflow:hidden" width="48" height="48" viewBox="0 0 48 48"><rect width="48" height="48" fill="#8f8f8f"/><path d="M20 44L34 30 40 36 30 48z" fill="#858585"/><path d="M8 19.500L4.200 33M30.500 11L27 24" stroke="#3c3c3c" stroke-width="1.300" fill="none"/><path d="M15 28.500L28 23.500" stroke="#666" stroke-width="3"/><path d="M11.500 19L18.200 40M32 11.500L39 27" stroke="#e9e9e9" stroke-width="2" fill="none"/><path d="M7.200 13L30.800 3.900 32.200 11 8.600 20.200z" fill="#f4f4f4"/><path d="M9.500 12.100l3.300-1.300 1.400 7.200-3.300 1.300zM15.800 9.700l3.300-1.300 1.400 7.200-3.300 1.300zM22.100 7.300l3.300-1.300 1.400 7.200-3.300 1.300zM28.200 4.900l2.600-1 1.400 7.100-2.600 1z" fill="#0c0c0c"/><path d="M7.200 13l1.400 7.200" stroke="#222" stroke-width="1.500"/><path d="M35.600 26.300L45.800 43.500H25.500z" fill="#f2f2f2" stroke="#fff" stroke-width="1" stroke-linejoin="round"/><rect x="34.700" y="32" width="2" height="6.500" fill="#1a1a1a"/><rect x="34.700" y="40" width="2" height="2" fill="#1a1a1a"/></svg>
<div class="lbl" style="left:1769px;top:997px;color:#a0a0a0">Opacity</div>
<svg style="left:1768px;top:1016px;overflow:hidden" width="48" height="24" viewBox="0 0 48 24"><rect width="48" height="48" fill="#8f8f8f"/><path d="M20 44L34 30 40 36 30 48z" fill="#858585"/><path d="M8 19.500L4.200 33M30.500 11L27 24" stroke="#3c3c3c" stroke-width="1.300" fill="none"/><path d="M15 28.500L28 23.500" stroke="#666" stroke-width="3"/><path d="M11.500 19L18.200 40M32 11.500L39 27" stroke="#e9e9e9" stroke-width="2" fill="none"/><path d="M7.200 13L30.800 3.900 32.200 11 8.600 20.200z" fill="#f4f4f4"/><path d="M9.500 12.100l3.300-1.300 1.400 7.200-3.300 1.300zM15.800 9.700l3.300-1.300 1.400 7.200-3.300 1.300zM22.100 7.300l3.300-1.300 1.400 7.200-3.300 1.300zM28.200 4.900l2.600-1 1.400 7.100-2.600 1z" fill="#0c0c0c"/><path d="M7.200 13l1.400 7.200" stroke="#222" stroke-width="1.500"/><path d="M35.600 26.300L45.800 43.500H25.500z" fill="#f2f2f2" stroke="#fff" stroke-width="1" stroke-linejoin="round"/><rect x="34.700" y="32" width="2" height="6.500" fill="#1a1a1a"/><rect x="34.700" y="40" width="2" height="2" fill="#1a1a1a"/></svg>
<svg style="left:1843px;top:943px;overflow:hidden" width="48" height="48" viewBox="0 0 48 48"><rect width="48" height="48" fill="#8f8f8f"/><path d="M20 44L34 30 40 36 30 48z" fill="#858585"/><path d="M8 19.500L4.200 33M30.500 11L27 24" stroke="#3c3c3c" stroke-width="1.300" fill="none"/><path d="M15 28.500L28 23.500" stroke="#666" stroke-width="3"/><path d="M11.500 19L18.200 40M32 11.500L39 27" stroke="#e9e9e9" stroke-width="2" fill="none"/><path d="M7.200 13L30.800 3.900 32.200 11 8.600 20.200z" fill="#f4f4f4"/><path d="M9.500 12.100l3.300-1.300 1.400 7.200-3.300 1.300zM15.800 9.700l3.300-1.300 1.400 7.200-3.300 1.300zM22.100 7.300l3.300-1.300 1.400 7.200-3.300 1.300zM28.200 4.900l2.600-1 1.400 7.100-2.600 1z" fill="#0c0c0c"/><path d="M7.200 13l1.400 7.200" stroke="#222" stroke-width="1.500"/><path d="M35.600 26.300L45.800 43.500H25.500z" fill="#f2f2f2" stroke="#fff" stroke-width="1" stroke-linejoin="round"/><rect x="34.700" y="32" width="2" height="6.500" fill="#1a1a1a"/><rect x="34.700" y="40" width="2" height="2" fill="#1a1a1a"/></svg>
<div class="lbl" style="left:1845px;top:997px;color:#a0a0a0">Bump</div>
<svg style="left:1843px;top:1016px;overflow:hidden" width="48" height="24" viewBox="0 0 48 24"><rect width="48" height="48" fill="#8f8f8f"/><path d="M20 44L34 30 40 36 30 48z" fill="#858585"/><path d="M8 19.500L4.200 33M30.500 11L27 24" stroke="#3c3c3c" stroke-width="1.300" fill="none"/><path d="M15 28.500L28 23.500" stroke="#666" stroke-width="3"/><path d="M11.500 19L18.200 40M32 11.500L39 27" stroke="#e9e9e9" stroke-width="2" fill="none"/><path d="M7.200 13L30.800 3.900 32.200 11 8.600 20.200z" fill="#f4f4f4"/><path d="M9.500 12.100l3.300-1.300 1.400 7.200-3.300 1.300zM15.800 9.700l3.300-1.300 1.400 7.200-3.300 1.300zM22.100 7.300l3.300-1.300 1.400 7.200-3.300 1.300zM28.200 4.900l2.600-1 1.400 7.100-2.600 1z" fill="#0c0c0c"/><path d="M7.200 13l1.400 7.200" stroke="#222" stroke-width="1.500"/><path d="M35.600 26.300L45.800 43.500H25.500z" fill="#f2f2f2" stroke="#fff" stroke-width="1" stroke-linejoin="round"/><rect x="34.700" y="32" width="2" height="6.500" fill="#1a1a1a"/><rect x="34.700" y="40" width="2" height="2" fill="#1a1a1a"/></svg>
<div class="a" style="left:1142px;top:76px;width:770px;height:582px;background:#f0f0f0;border-top:1px solid #6e6e6e;box-shadow:0 0 10px 1px rgba(0,0,0,.24)"></div>
<div class="a" style="left:1142px;top:77px;width:770px;height:30px;background:#fff"></div>
<div class="t" style="left:1150.5px;top:84.7px;font-size:11.4px;line-height:15px;color:#9a9a9a">Expression Editor</div>
<svg style="left:1891px;top:85px" width="12" height="12" viewBox="0 0 12 12"><path d="M1 1l10 10M11 1L1 11" stroke="#555" stroke-width="1.100"/></svg>
<div class="btn" style="left:1827px;top:119px;width:74px;height:21px;line-height:19px;font-size:12px">Reset</div>
<div class="tab" style="left:1155px;top:120px;width:69px;height:18px">Head</div>
<div class="tab" style="left:1297px;top:120px;width:68px;height:18px">Jaw</div>
<div class="tab" style="left:1364px;top:120px;width:71px;height:18px">Viseme</div>
<div class="tab" style="left:1434px;top:120px;width:71px;height:18px">Muscle</div>
<div class="tab" style="left:1504px;top:120px;width:69px;height:18px">Custom</div>
<div class="tab" style="left:1223px;top:118px;width:75px;height:21px;background:#fff;padding-left:6px;padding-top:4px">Eye</div>
<div class="a" style="left:1153px;top:138px;width:507px;height:372px;background:#fff;border:1px solid #767676;border-top-color:#5e5e5e;border-left-color:#5e5e5e"></div>
<div class="a" style="left:1223.500px;top:138px;width:74px;height:1px;background:#fff"></div>
<div class="a" style="left:1642px;top:139px;width:17px;height:370px;background:#f0f0f0"></div>
<div class="a" style="left:1642px;top:191px;width:17px;height:306px;background:#cdcdcd"></div>
<svg style="left:1642px;top:139px" width="17" height="370" viewBox="0 0 17 370"><path d="M5 11.500l3.500-3.500 3.500 3.500M5 360l3.500 3.500 3.500-3.500" fill="none" stroke="#505050" stroke-width="1.700"/></svg>
<svg style="left:1169px;top:139px;overflow:hidden" width="80" height="59" viewBox="0 21 80 59"><defs><filter id="ff1169_139" filterUnits="userSpaceOnUse" x="-10" y="-10" width="100" height="100"><feGaussianBlur stdDeviation="1.600"/></filter><filter id="gf1169_139" filterUnits="userSpaceOnUse" x="-10" y="-10" width="100" height="100"><feGaussianBlur stdDeviation=".7"/></filter><filter id="hf1169_139" filterUnits="userSpaceOnUse" x="-10" y="-10" width="100" height="100"><feGaussianBlur stdDeviation="4"/></filter></defs><rect width="80" height="80" fill="#e3e9f8"/><g filter="url(#hf1169_139)"><ellipse cx="40" cy="26" rx="30" ry="8" fill="#fff"/><ellipse cx="18" cy="60" rx="12" ry="14" fill="#f4f6fc"/><ellipse cx="62" cy="60" rx="12" ry="14" fill="#f4f6fc"/><path d="M-4 50L-4 84 12 84C6 72 2 60 0 50z" fill="#5572c2"/><path d="M84 50L84 84 68 84C74 72 78 60 80 50z" fill="#5572c2"/><path d="M-2 24L8 24 2 40-2 44z" fill="#7f97d6"/><path d="M82 24L72 24 78 40 82 44z" fill="#7f97d6"/></g><g filter="url(#ff1169_139)"><path d="M0 36C12 34 26 37 35 44L33 50C24 46 10 47 0 48z" fill="#93a8de"/><path d="M80 36C68 34 54 37 45 44L47 50C56 46 70 47 80 48z" fill="#93a8de"/><path d="M0 30C10 29.500 24 32 35 38.500L33 41.500C24 40 12 39 0 38z" fill="#2a46a0"/><path d="M80 30C70 29.500 56 32 45 38.500L47 41.500C56 40 68 39 80 38z" fill="#2a46a0"/><path d="M18 34C25 35 31 37.500 35 40L33 41.500C28 40 22 38 18 37z" fill="#1a2f80"/><path d="M62 34C55 35 49 37.500 45 40L47 41.500C52 40 58 38 62 37z" fill="#1a2f80"/><path d="M34 44C34 56 33 62 30 67L33 69C36 64 37 56 37 44z" fill="#aab9e6"/><path d="M46 44C46 56 47 62 50 67L47 69C44 64 43 56 43 44z" fill="#aab9e6"/><path d="M37 23h6l2 40c-2 4-8 4-10 0z" fill="#fbfcff"/></g><g filter="url(#gf1169_139)"><path d="M7 42C12 38.500 22 38.500 28 43.500 22 46 12 46 7 42z" fill="#e2e8f7" stroke="#3f5cae" stroke-width=".9"/><path d="M73 42C68 38.500 58 38.500 52 43.500 58 46 68 46 73 42z" fill="#e2e8f7" stroke="#3f5cae" stroke-width=".9"/><circle cx="13" cy="42" r="3.400" fill="#9db0e0" stroke="#3a56a8" stroke-width="1"/><circle cx="60" cy="42" r="3.400" fill="#9db0e0" stroke="#3a56a8" stroke-width="1"/><ellipse cx="31.500" cy="69.500" rx="4" ry="4" fill="#c9d4f0"/><ellipse cx="48.500" cy="69.500" rx="4" ry="4" fill="#c9d4f0"/><ellipse cx="40" cy="69" rx="6" ry="6.500" fill="#f2f5fc"/><path d="M28 70C29 74 32 76 35 73 36 76 38 79 40 79 42 79 44 76 45 73 48 76 51 74 52 70 50 72 47 72 45 70.500 43 74 41 75.500 40 75.500 39 75.500 37 74 35 70.500 33 72 30 72 28 70z" fill="#23409c"/></g><path d="M.5 21v58.500h79V21" fill="none" stroke="#6a80bf"/></svg>
<svg style="left:1279px;top:139px;overflow:hidden" width="80" height="59" viewBox="0 21 80 59"><defs><filter id="ff1279_139" filterUnits="userSpaceOnUse" x="-10" y="-10" width="100" height="100"><feGaussianBlur stdDeviation="1.600"/></filter><filter id="gf1279_139" filterUnits="userSpaceOnUse" x="-10" y="-10" width="100" height="100"><feGaussianBlur stdDeviation=".7"/></filter><filter id="hf1279_139" filterUnits="userSpaceOnUse" x="-10" y="-10" width="100" height="100"><feGaussianBlur stdDeviation="4"/></filter></defs><rect width="80" height="80" fill="#e3e9f8"/><g filter="url(#hf1279_139)"><ellipse cx="40" cy="26" rx="30" ry="8" fill="#fff"/><ellipse cx="18" cy="60" rx="12" ry="14" fill="#f4f6fc"/><ellipse cx="62" cy="60" rx="12" ry="14" fill="#f4f6fc"/><path d="M-4 50L-4 84 12 84C6 72 2 60 0 50z" fill="#5572c2"/><path d="M84 50L84 84 68 84C74 72 78 60 80 50z" fill="#5572c2"/><path d="M-2 24L8 24 2 40-2 44z" fill="#7f97d6"/><path d="M82 24L72 24 78 40 82 44z" fill="#7f97d6"/></g><g filter="url(#ff1279_139)"><path d="M0 36C12 34 26 37 35 44L33 50C24 46 10 47 0 48z" fill="#93a8de"/><path d="M80 36C68 34 54 37 45 44L47 50C56 46 70 47 80 48z" fill="#93a8de"/><path d="M0 30C10 29.500 24 32 35 38.500L33 41.500C24 40 12 39 0 38z" fill="#2a46a0"/><path d="M80 30C70 29.500 56 32 45 38.500L47 41.500C56 40 68 39 80 38z" fill="#2a46a0"/><path d="M18 34C25 35 31 37.500 35 40L33 41.500C28 40 22 38 18 37z" fill="#1a2f80"/><path d="M62 34C55 35 49 37.500 45 40L47 41.500C52 40 58 38 62 37z" fill="#1a2f80"/><path d="M34 44C34 56 33 62 30 67L33 69C36 64 37 56 37 44z" fill="#aab9e6"/><path d="M46 44C46 56 47 62 50 67L47 69C44 64 43 56 43 44z" fill="#aab9e6"/><path d="M37 23h6l2 40c-2 4-8 4-10 0z" fill="#fbfcff"/></g><g filter="url(#gf1279_139)"><path d="M7 42C12 38.500 22 38.500 28 43.500 22 46 12 46 7 42z" fill="#e2e8f7" stroke="#3f5cae" stroke-width=".9"/><path d="M73 42C68 38.500 58 38.500 52 43.500 58 46 68 46 73 42z" fill="#e2e8f7" stroke="#3f5cae" stroke-width=".9"/><circle cx="19" cy="42" r="3.400" fill="#9db0e0" stroke="#3a56a8" stroke-width="1"/><circle cx="66" cy="42" r="3.400" fill="#9db0e0" stroke="#3a56a8" stroke-width="1"/><ellipse cx="31.500" cy="69.500" rx="4" ry="4" fill="#c9d4f0"/><ellipse cx="48.500" cy="69.500" rx="4" ry="4" fill="#c9d4f0"/><ellipse cx="40" cy="69" rx="6" ry="6.500" fill="#f2f5fc"/><path d="M28 70C29 74 32 76 35 73 36 76 38 79 40 79 42 79 44 76 45 73 48 76 51 74 52 70 50 72 47 72 45 70.500 43 74 41 75.500 40 75.500 39 75.500 37 74 35 70.500 33 72 30 72 28 70z" fill="#23409c"/></g><path d="M.5 21v58.500h79V21" fill="none" stroke="#6a80bf"/></svg>
<svg style="left:1389px;top:139px;overflow:hidden" width="80" height="59" viewBox="0 21 80 59"><defs><filter id="ff1389_139" filterUnits="userSpaceOnUse" x="-10" y="-10" width="100" height="100"><feGaussianBlur stdDeviation="1.600"/></filter><filter id="gf1389_139" filterUnits="userSpaceOnUse" x="-10" y="-10" width="100" height="100"><feGaussianBlur stdDeviation=".7"/></filter><filter id="hf1389_139" filterUnits="userSpaceOnUse" x="-10" y="-10" width="100" height="100"><feGaussianBlur stdDeviation="4"/></filter></defs><rect width="80" height="80" fill="#e3e9f8"/><g filter="url(#hf1389_139)"><ellipse cx="40" cy="26" rx="30" ry="8" fill="#fff"/><ellipse cx="18" cy="60" rx="12" ry="14" fill="#f4f6fc"/><ellipse cx="62" cy="60" rx="12" ry="14" fill="#f4f6fc"/><path d="M-4 50L-4 84 12 84C6 72 2 60 0 50z" fill="#5572c2"/><path d="M84 50L84 84 68 84C74 72 78 60 80 50z" fill="#5572c2"/><path d="M-2 24L8 24 2 40-2 44z" fill="#7f97d6"/><path d="M82 24L72 24 78 40 82 44z" fill="#7f97d6"/></g><g filter="url(#ff1389_139)"><path d="M0 36C12 34 26 37 35 44L33 50C24 46 10 47 0 48z" fill="#93a8de"/><path d="M80 36C68 34 54 37 45 44L47 50C56 46 70 47 80 48z" fill="#93a8de"/><path d="M0 30C10 29.500 24 32 35 38.500L33 41.500C24 40 12 39 0 38z" fill="#2a46a0"/><path d="M80 30C70 29.500 56 32 45 38.500L47 41.500C56 40 68 39 80 38z" fill="#2a46a0"/><path d="M18 34C25 35 31 37.500 35 40L33 41.500C28 40 22 38 18 37z" fill="#1a2f80"/><path d="M62 34C55 35 49 37.500 45 40L47 41.500C52 40 58 38 62 37z" fill="#1a2f80"/><path d="M34 44C34 56 33 62 30 67L33 69C36 64 37 56 37 44z" fill="#aab9e6"/><path d="M46 44C46 56 47 62 50 67L47 69C44 64 43 56 43 44z" fill="#aab9e6"/><path d="M37 23h6l2 40c-2 4-8 4-10 0z" fill="#fbfcff"/></g><g filter="url(#gf1389_139)"><path d="M7 42C12 38.500 22 38.500 28 43.500 22 46 12 46 7 42z" fill="#e2e8f7" stroke="#3f5cae" stroke-width=".9"/><path d="M73 42C68 38.500 58 38.500 52 43.500 58 46 68 46 73 42z" fill="#e2e8f7" stroke="#3f5cae" stroke-width=".9"/><circle cx="16" cy="42" r="3.400" fill="#9db0e0" stroke="#3a56a8" stroke-width="1"/><circle cx="63" cy="42" r="3.400" fill="#9db0e0" stroke="#3a56a8" stroke-width="1"/><ellipse cx="31.500" cy="69.500" rx="4" ry="4" fill="#c9d4f0"/><ellipse cx="48.500" cy="69.500" rx="4" ry="4" fill="#c9d4f0"/><ellipse cx="40" cy="69" rx="6" ry="6.500" fill="#f2f5fc"/><path d="M28 70C29 74 32 76 35 73 36 76 38 79 40 79 42 79 44 76 45 73 48 76 51 74 52 70 50 72 47 72 45 70.500 43 74 41 75.500 40 75.500 39 75.500 37 74 35 70.500 33 72 30 72 28 70z" fill="#23409c"/></g><defs><pattern id="dith" width="2" height="2" patternUnits="userSpaceOnUse"><rect width="1" height="1" fill="#3399ff"/><rect x="1" y="1" width="1" height="1" fill="#3399ff"/></pattern></defs><rect y="21" width="80" height="59" fill="#3399ff" opacity=".35"/><rect y="21" width="80" height="59" fill="url(#dith)" opacity=".75"/><path d="M.5 21v58.500h79V21" fill="none" stroke="#6a80bf"/></svg>
<svg style="left:1499px;top:139px;overflow:hidden" width="80" height="59" viewBox="0 21 80 59"><defs><filter id="ff1499_139" filterUnits="userSpaceOnUse" x="-10" y="-10" width="100" height="100"><feGaussianBlur stdDeviation="1.600"/></filter><filter id="gf1499_139" filterUnits="userSpaceOnUse" x="-10" y="-10" width="100" height="100"><feGaussianBlur stdDeviation=".7"/></filter><filter id="hf1499_139" filterUnits="userSpaceOnUse" x="-10" y="-10" width="100" height="100"><feGaussianBlur stdDeviation="4"/></filter></defs><rect width="80" height="80" fill="#e3e9f8"/><g filter="url(#hf1499_139)"><ellipse cx="40" cy="26" rx="30" ry="8" fill="#fff"/><ellipse cx="18" cy="60" rx="12" ry="14" fill="#f4f6fc"/><ellipse cx="62" cy="60" rx="12" ry="14" fill="#f4f6fc"/><path d="M-4 50L-4 84 12 84C6 72 2 60 0 50z" fill="#5572c2"/><path d="M84 50L84 84 68 84C74 72 78 60 80 50z" fill="#5572c2"/><path d="M-2 24L8 24 2 40-2 44z" fill="#7f97d6"/><path d="M82 24L72 24 78 40 82 44z" fill="#7f97d6"/></g><g filter="url(#ff1499_139)"><path d="M0 36C12 34 26 37 35 44L33 50C24 46 10 47 0 48z" fill="#93a8de"/><path d="M80 36C68 34 54 37 45 44L47 50C56 46 70 47 80 48z" fill="#93a8de"/><path d="M0 30C10 29.500 24 32 35 38.500L33 41.500C24 40 12 39 0 38z" fill="#2a46a0"/><path d="M80 30C70 29.500 56 32 45 38.500L47 41.500C56 40 68 39 80 38z" fill="#2a46a0"/><path d="M18 34C25 35 31 37.500 35 40L33 41.500C28 40 22 38 18 37z" fill="#1a2f80"/><path d="M62 34C55 35 49 37.500 45 40L47 41.500C52 40 58 38 62 37z" fill="#1a2f80"/><path d="M34 44C34 56 33 62 30 67L33 69C36 64 37 56 37 44z" fill="#aab9e6"/><path d="M46 44C46 56 47 62 50 67L47 69C44 64 43 56 43 44z" fill="#aab9e6"/><path d="M37 23h6l2 40c-2 4-8 4-10 0z" fill="#fbfcff"/></g><g filter="url(#gf1499_139)"><path d="M7 42C12 38.500 22 38.500 28 43.500 22 46 12 46 7 42z" fill="#e2e8f7" stroke="#3f5cae" stroke-width=".9"/><path d="M73 42C68 38.500 58 38.500 52 43.500 58 46 68 46 73 42z" fill="#e2e8f7" stroke="#3f5cae" stroke-width=".9"/><circle cx="16" cy="42" r="3.400" fill="#9db0e0" stroke="#3a56a8" stroke-width="1"/><circle cx="63" cy="42" r="3.400" fill="#9db0e0" stroke="#3a56a8" stroke-width="1"/><ellipse cx="31.500" cy="69.500" rx="4" ry="4" fill="#c9d4f0"/><ellipse cx="48.500" cy="69.500" rx="4" ry="4" fill="#c9d4f0"/><ellipse cx="40" cy="69" rx="6" ry="6.500" fill="#f2f5fc"/><path d="M28 70C29 74 32 76 35 73 36 76 38 79 40 79 42 79 44 76 45 73 48 76 51 74 52 70 50 72 47 72 45 70.500 43 74 41 75.500 40 75.500 39 75.500 37 74 35 70.500 33 72 30 72 28 70z" fill="#23409c"/></g><path d="M.5 21v58.500h79V21" fill="none" stroke="#6a80bf"/></svg>
<svg style="left:1169px;top:257px;overflow:hidden" width="80" height="80" viewBox="0 0 80 80"><defs><linearGradient id="bge1169_257" x1="0" y1="0" x2="0" y2="1"><stop offset="0" stop-color="#9fb1e0"/><stop offset=".5" stop-color="#c3cfec"/><stop offset="1" stop-color="#e9edf8"/></linearGradient><radialGradient id="ire1169_257" cx=".45" cy=".4" r=".7"><stop offset="0" stop-color="#b9c7ea"/><stop offset=".6" stop-color="#7f97d4"/><stop offset="1" stop-color="#3f5cac"/></radialGradient><filter id="fe1169_257" filterUnits="userSpaceOnUse" x="-10" y="-10" width="100" height="100"><feGaussianBlur stdDeviation="2.200"/></filter><clipPath id="ce1169_257"><path d="M10.4 39.600C18 31 28 28.500 37.500 28.600 52 29 62 36 70.800 44.800 60 49 50 51 37.500 51 26 51 16 46 10.400 39.600z"/></clipPath></defs><g transform="translate(80 0) scale(-1 1)"><rect width="80" height="80" fill="url(#bge1169_257)"/><g filter="url(#fe1169_257)"><path d="M-6 10C20 8 44 12 60 15 70 17 80 14 88 12L88 40C76 36 66 30 54 27 40 24 22 25 4 33L-6 36z" fill="#6d87cd"/><path d="M30 14C46 13 62 15 88 14L88 37C74 33 64 27 50 24 42 22 36 20 30 14z" fill="#2743a0"/><path d="M50 -4L88 -4 88 8C74 10 62 6 50 -4z" fill="#e4eaf7"/><path d="M-4 34C4 30 12 30 18 30L6 42-4 46z" fill="#5f7bc6" opacity=".8"/><path d="M4 44C16 58 44 60 78 50L80 56C50 68 14 64 0 50z" fill="#a3b4e1" opacity=".85"/><path d="M-2 58C20 72 52 70 84 58L84 84-2 84z" fill="#eef1fa" opacity=".9"/><path d="M66 30L84 40 84 60 74 48z" fill="#9fb1e0" opacity=".7"/></g><path d="M7 41C16 28 28 24.500 38 24.500 54 25 66 34 76 45" fill="none" stroke="#4a66b4" stroke-width="1.500" opacity=".9"/><path d="M10.4 39.600C18 31 28 28.500 37.500 28.600 52 29 62 36 70.800 44.800 60 49 50 51 37.500 51 26 51 16 46 10.400 39.600z" fill="#edf1fa" stroke="#2f4a9c" stroke-width="1.300"/><g clip-path="url(#ce1169_257)"><circle cx="48" cy="39.5" r="13.500" fill="url(#ire1169_257)" stroke="#3f5aa8" stroke-width=".9"/><path d="M8 26h66v8C60 28 30 27 8 42z" fill="#5a76c2" opacity=".3"/></g></g><rect x=".5" y=".5" width="79" height="79" fill="none" stroke="#6a80bf"/></svg>
<svg style="left:1169px;top:396px;overflow:hidden" width="80" height="80" viewBox="0 0 80 80"><defs><linearGradient id="bge1169_396" x1="0" y1="0" x2="0" y2="1"><stop offset="0" stop-color="#9fb1e0"/><stop offset=".5" stop-color="#c3cfec"/><stop offset="1" stop-color="#e9edf8"/></linearGradient><radialGradient id="ire1169_396" cx=".45" cy=".4" r=".7"><stop offset="0" stop-color="#b9c7ea"/><stop offset=".6" stop-color="#7f97d4"/><stop offset="1" stop-color="#3f5cac"/></radialGradient><filter id="fe1169_396" filterUnits="userSpaceOnUse" x="-10" y="-10" width="100" height="100"><feGaussianBlur stdDeviation="2.200"/></filter><clipPath id="ce1169_396"><path d="M10.4 39.600C18 31 28 28.500 37.500 28.600 52 29 62 36 70.800 44.800 60 49 50 51 37.500 51 26 51 16 46 10.400 39.600z"/></clipPath></defs><rect width="80" height="80" fill="url(#bge1169_396)"/><g filter="url(#fe1169_396)"><path d="M-6 10C20 8 44 12 60 15 70 17 80 14 88 12L88 40C76 36 66 30 54 27 40 24 22 25 4 33L-6 36z" fill="#6d87cd"/><path d="M30 14C46 13 62 15 88 14L88 37C74 33 64 27 50 24 42 22 36 20 30 14z" fill="#2743a0"/><path d="M50 -4L88 -4 88 8C74 10 62 6 50 -4z" fill="#e4eaf7"/><path d="M-4 34C4 30 12 30 18 30L6 42-4 46z" fill="#5f7bc6" opacity=".8"/><path d="M4 44C16 58 44 60 78 50L80 56C50 68 14 64 0 50z" fill="#a3b4e1" opacity=".85"/><path d="M-2 58C20 72 52 70 84 58L84 84-2 84z" fill="#eef1fa" opacity=".9"/><path d="M66 30L84 40 84 60 74 48z" fill="#9fb1e0" opacity=".7"/></g><path d="M7 41C16 28 28 24.500 38 24.500 54 25 66 34 76 45" fill="none" stroke="#4a66b4" stroke-width="1.500" opacity=".9"/><path d="M10.4 39.600C18 31 28 28.500 37.500 28.600 52 29 62 36 70.800 44.800 60 49 50 51 37.500 51 26 51 16 46 10.400 39.600z" fill="#edf1fa" stroke="#2f4a9c" stroke-width="1.300"/><g clip-path="url(#ce1169_396)"><circle cx="27" cy="39.5" r="13.500" fill="url(#ire1169_396)" stroke="#3f5aa8" stroke-width=".9"/><path d="M8 26h66v8C60 28 30 27 8 42z" fill="#5a76c2" opacity=".3"/></g><rect x=".5" y=".5" width="79" height="79" fill="none" stroke="#6a80bf"/></svg>
<svg style="left:1279px;top:257px;overflow:hidden" width="80" height="80" viewBox="0 0 80 80"><defs><linearGradient id="bge1279_257" x1="0" y1="0" x2="0" y2="1"><stop offset="0" stop-color="#9fb1e0"/><stop offset=".5" stop-color="#c3cfec"/><stop offset="1" stop-color="#e9edf8"/></linearGradient><radialGradient id="ire1279_257" cx=".45" cy=".4" r=".7"><stop offset="0" stop-color="#b9c7ea"/><stop offset=".6" stop-color="#7f97d4"/><stop offset="1" stop-color="#3f5cac"/></radialGradient><filter id="fe1279_257" filterUnits="userSpaceOnUse" x="-10" y="-10" width="100" height="100"><feGaussianBlur stdDeviation="2.200"/></filter><clipPath id="ce1279_257"><path d="M10.4 39.600C18 31 28 28.500 37.500 28.600 52 29 62 36 70.800 44.800 60 49 50 51 37.500 51 26 51 16 46 10.400 39.600z"/></clipPath></defs><g transform="translate(80 0) scale(-1 1)"><rect width="80" height="80" fill="url(#bge1279_257)"/><g filter="url(#fe1279_257)"><path d="M-6 10C20 8 44 12 60 15 70 17 80 14 88 12L88 40C76 36 66 30 54 27 40 24 22 25 4 33L-6 36z" fill="#6d87cd"/><path d="M30 14C46 13 62 15 88 14L88 37C74 33 64 27 50 24 42 22 36 20 30 14z" fill="#2743a0"/><path d="M50 -4L88 -4 88 8C74 10 62 6 50 -4z" fill="#e4eaf7"/><path d="M-4 34C4 30 12 30 18 30L6 42-4 46z" fill="#5f7bc6" opacity=".8"/><path d="M4 44C16 58 44 60 78 50L80 56C50 68 14 64 0 50z" fill="#a3b4e1" opacity=".85"/><path d="M-2 58C20 72 52 70 84 58L84 84-2 84z" fill="#eef1fa" opacity=".9"/><path d="M66 30L84 40 84 60 74 48z" fill="#9fb1e0" opacity=".7"/></g><path d="M7 41C16 28 28 24.500 38 24.500 54 25 66 34 76 45" fill="none" stroke="#4a66b4" stroke-width="1.500" opacity=".9"/><path d="M10.4 39.600C18 31 28 28.500 37.500 28.600 52 29 62 36 70.800 44.800 60 49 50 51 37.500 51 26 51 16 46 10.400 39.600z" fill="#edf1fa" stroke="#2f4a9c" stroke-width="1.300"/><g clip-path="url(#ce1279_257)"><circle cx="27" cy="40" r="13.500" fill="url(#ire1279_257)" stroke="#3f5aa8" stroke-width=".9"/><path d="M8 26h66v8C60 28 30 27 8 42z" fill="#5a76c2" opacity=".3"/></g></g><rect x=".5" y=".5" width="79" height="79" fill="none" stroke="#6a80bf"/></svg>
<svg style="left:1279px;top:396px;overflow:hidden" width="80" height="80" viewBox="0 0 80 80"><defs><linearGradient id="bge1279_396" x1="0" y1="0" x2="0" y2="1"><stop offset="0" stop-color="#9fb1e0"/><stop offset=".5" stop-color="#c3cfec"/><stop offset="1" stop-color="#e9edf8"/></linearGradient><radialGradient id="ire1279_396" cx=".45" cy=".4" r=".7"><stop offset="0" stop-color="#b9c7ea"/><stop offset=".6" stop-color="#7f97d4"/><stop offset="1" stop-color="#3f5cac"/></radialGradient><filter id="fe1279_396" filterUnits="userSpaceOnUse" x="-10" y="-10" width="100" height="100"><feGaussianBlur stdDeviation="2.200"/></filter><clipPath id="ce1279_396"><path d="M10.4 39.600C18 31 28 28.500 37.500 28.600 52 29 62 36 70.800 44.800 60 49 50 51 37.500 51 26 51 16 46 10.400 39.600z"/></clipPath></defs><rect width="80" height="80" fill="url(#bge1279_396)"/><g filter="url(#fe1279_396)"><path d="M-6 10C20 8 44 12 60 15 70 17 80 14 88 12L88 40C76 36 66 30 54 27 40 24 22 25 4 33L-6 36z" fill="#6d87cd"/><path d="M30 14C46 13 62 15 88 14L88 37C74 33 64 27 50 24 42 22 36 20 30 14z" fill="#2743a0"/><path d="M50 -4L88 -4 88 8C74 10 62 6 50 -4z" fill="#e4eaf7"/><path d="M-4 34C4 30 12 30 18 30L6 42-4 46z" fill="#5f7bc6" opacity=".8"/><path d="M4 44C16 58 44 60 78 50L80 56C50 68 14 64 0 50z" fill="#a3b4e1" opacity=".85"/><path d="M-2 58C20 72 52 70 84 58L84 84-2 84z" fill="#eef1fa" opacity=".9"/><path d="M66 30L84 40 84 60 74 48z" fill="#9fb1e0" opacity=".7"/></g><path d="M7 41C16 28 28 24.500 38 24.500 54 25 66 34 76 45" fill="none" stroke="#4a66b4" stroke-width="1.500" opacity=".9"/><path d="M10.4 39.600C18 31 28 28.500 37.500 28.600 52 29 62 36 70.800 44.800 60 49 50 51 37.500 51 26 51 16 46 10.400 39.600z" fill="#edf1fa" stroke="#2f4a9c" stroke-width="1.300"/><g clip-path="url(#ce1279_396)"><circle cx="49" cy="40" r="13.500" fill="url(#ire1279_396)" stroke="#3f5aa8" stroke-width=".9"/><path d="M8 26h66v8C60 28 30 27 8 42z" fill="#5a76c2" opacity=".3"/></g><rect x=".5" y=".5" width="79" height="79" fill="none" stroke="#6a80bf"/></svg>
<svg style="left:1389px;top:257px;overflow:hidden" width="80" height="80" viewBox="0 0 80 80"><defs><linearGradient id="bge1389_257" x1="0" y1="0" x2="0" y2="1"><stop offset="0" stop-color="#9fb1e0"/><stop offset=".5" stop-color="#c3cfec"/><stop offset="1" stop-color="#e9edf8"/></linearGradient><radialGradient id="ire1389_257" cx=".45" cy=".4" r=".7"><stop offset="0" stop-color="#b9c7ea"/><stop offset=".6" stop-color="#7f97d4"/><stop offset="1" stop-color="#3f5cac"/></radialGradient><filter id="fe1389_257" filterUnits="userSpaceOnUse" x="-10" y="-10" width="100" height="100"><feGaussianBlur stdDeviation="2.200"/></filter><clipPath id="ce1389_257"><path d="M10.4 39.600C18 31 28 28.500 37.500 28.600 52 29 62 36 70.800 44.800 60 49 50 51 37.500 51 26 51 16 46 10.400 39.600z"/></clipPath></defs><g transform="translate(80 0) scale(-1 1)"><rect width="80" height="80" fill="url(#bge1389_257)"/><g filter="url(#fe1389_257)"><path d="M-6 10C20 8 44 12 60 15 70 17 80 14 88 12L88 40C76 36 66 30 54 27 40 24 22 25 4 33L-6 36z" fill="#6d87cd"/><path d="M30 14C46 13 62 15 88 14L88 37C74 33 64 27 50 24 42 22 36 20 30 14z" fill="#2743a0"/><path d="M50 -4L88 -4 88 8C74 10 62 6 50 -4z" fill="#e4eaf7"/><path d="M-4 34C4 30 12 30 18 30L6 42-4 46z" fill="#5f7bc6" opacity=".8"/><path d="M4 44C16 58 44 60 78 50L80 56C50 68 14 64 0 50z" fill="#a3b4e1" opacity=".85"/><path d="M-2 58C20 72 52 70 84 58L84 84-2 84z" fill="#eef1fa" opacity=".9"/><path d="M66 30L84 40 84 60 74 48z" fill="#9fb1e0" opacity=".7"/></g><path d="M7 41C16 28 28 24.500 38 24.500 54 25 66 34 76 45" fill="none" stroke="#4a66b4" stroke-width="1.500" opacity=".9"/><path d="M10.4 39.600C18 31 28 28.500 37.500 28.600 52 29 62 36 70.800 44.800 60 49 50 51 37.500 51 26 51 16 46 10.400 39.600z" fill="#edf1fa" stroke="#2f4a9c" stroke-width="1.300"/><g clip-path="url(#ce1389_257)"><circle cx="38" cy="46" r="13.500" fill="url(#ire1389_257)" stroke="#3f5aa8" stroke-width=".9"/><path d="M8 26h66v8C60 28 30 27 8 42z" fill="#5a76c2" opacity=".3"/></g></g><rect x=".5" y=".5" width="79" height="79" fill="none" stroke="#6a80bf"/></svg>
<svg style="left:1389px;top:396px;overflow:hidden" width="80" height="80" viewBox="0 0 80 80"><defs><linearGradient id="bge1389_396" x1="0" y1="0" x2="0" y2="1"><stop offset="0" stop-color="#9fb1e0"/><stop offset=".5" stop-color="#c3cfec"/><stop offset="1" stop-color="#e9edf8"/></linearGradient><radialGradient id="ire1389_396" cx=".45" cy=".4" r=".7"><stop offset="0" stop-color="#b9c7ea"/><stop offset=".6" stop-color="#7f97d4"/><stop offset="1" stop-color="#3f5cac"/></radialGradient><filter id="fe1389_396" filterUnits="userSpaceOnUse" x="-10" y="-10" width="100" height="100"><feGaussianBlur stdDeviation="2.200"/></filter><clipPath id="ce1389_396"><path d="M10.4 39.600C18 31 28 28.500 37.500 28.600 52 29 62 36 70.800 44.800 60 49 50 51 37.500 51 26 51 16 46 10.400 39.600z"/></clipPath></defs><rect width="80" height="80" fill="url(#bge1389_396)"/><g filter="url(#fe1389_396)"><path d="M-6 10C20 8 44 12 60 15 70 17 80 14 88 12L88 40C76 36 66 30 54 27 40 24 22 25 4 33L-6 36z" fill="#6d87cd"/><path d="M30 14C46 13 62 15 88 14L88 37C74 33 64 27 50 24 42 22 36 20 30 14z" fill="#2743a0"/><path d="M50 -4L88 -4 88 8C74 10 62 6 50 -4z" fill="#e4eaf7"/><path d="M-4 34C4 30 12 30 18 30L6 42-4 46z" fill="#5f7bc6" opacity=".8"/><path d="M4 44C16 58 44 60 78 50L80 56C50 68 14 64 0 50z" fill="#a3b4e1" opacity=".85"/><path d="M-2 58C20 72 52 70 84 58L84 84-2 84z" fill="#eef1fa" opacity=".9"/><path d="M66 30L84 40 84 60 74 48z" fill="#9fb1e0" opacity=".7"/></g><path d="M7 41C16 28 28 24.500 38 24.500 54 25 66 34 76 45" fill="none" stroke="#4a66b4" stroke-width="1.500" opacity=".9"/><path d="M10.4 39.600C18 31 28 28.500 37.500 28.600 52 29 62 36 70.800 44.800 60 49 50 51 37.500 51 26 51 16 46 10.400 39.600z" fill="#edf1fa" stroke="#2f4a9c" stroke-width="1.300"/><g clip-path="url(#ce1389_396)"><circle cx="38" cy="46" r="13.500" fill="url(#ire1389_396)" stroke="#3f5aa8" stroke-width=".9"/><path d="M8 26h66v8C60 28 30 27 8 42z" fill="#5a76c2" opacity=".3"/></g><rect x=".5" y=".5" width="79" height="79" fill="none" stroke="#6a80bf"/></svg>
<svg style="left:1499px;top:257px;overflow:hidden" width="80" height="80" viewBox="0 0 80 80"><defs><linearGradient id="bge1499_257" x1="0" y1="0" x2="0" y2="1"><stop offset="0" stop-color="#9fb1e0"/><stop offset=".5" stop-color="#c3cfec"/><stop offset="1" stop-color="#e9edf8"/></linearGradient><radialGradient id="ire1499_257" cx=".45" cy=".4" r=".7"><stop offset="0" stop-color="#b9c7ea"/><stop offset=".6" stop-color="#7f97d4"/><stop offset="1" stop-color="#3f5cac"/></radialGradient><filter id="fe1499_257" filterUnits="userSpaceOnUse" x="-10" y="-10" width="100" height="100"><feGaussianBlur stdDeviation="2.200"/></filter><clipPath id="ce1499_257"><path d="M10.4 39.600C18 31 28 28.500 37.500 28.600 52 29 62 36 70.800 44.800 60 49 50 51 37.500 51 26 51 16 46 10.400 39.600z"/></clipPath></defs><g transform="translate(80 0) scale(-1 1)"><rect width="80" height="80" fill="url(#bge1499_257)"/><g filter="url(#fe1499_257)"><path d="M-6 10C20 8 44 12 60 15 70 17 80 14 88 12L88 40C76 36 66 30 54 27 40 24 22 25 4 33L-6 36z" fill="#6d87cd"/><path d="M30 14C46 13 62 15 88 14L88 37C74 33 64 27 50 24 42 22 36 20 30 14z" fill="#2743a0"/><path d="M50 -4L88 -4 88 8C74 10 62 6 50 -4z" fill="#e4eaf7"/><path d="M-4 34C4 30 12 30 18 30L6 42-4 46z" fill="#5f7bc6" opacity=".8"/><path d="M4 44C16 58 44 60 78 50L80 56C50 68 14 64 0 50z" fill="#a3b4e1" opacity=".85"/><path d="M-2 58C20 72 52 70 84 58L84 84-2 84z" fill="#eef1fa" opacity=".9"/><path d="M66 30L84 40 84 60 74 48z" fill="#9fb1e0" opacity=".7"/></g><path d="M7 41C16 28 28 24.500 38 24.500 54 25 66 34 76 45" fill="none" stroke="#4a66b4" stroke-width="1.500" opacity=".9"/><path d="M10.4 39.600C18 31 28 28.500 37.500 28.600 52 29 62 36 70.800 44.800 60 49 50 51 37.500 51 26 51 16 46 10.400 39.600z" fill="#edf1fa" stroke="#2f4a9c" stroke-width="1.300"/><g clip-path="url(#ce1499_257)"><circle cx="38" cy="34" r="13.500" fill="url(#ire1499_257)" stroke="#3f5aa8" stroke-width=".9"/><path d="M8 26h66v8C60 28 30 27 8 42z" fill="#5a76c2" opacity=".3"/></g></g><rect x=".5" y=".5" width="79" height="79" fill="none" stroke="#6a80bf"/></svg>
<svg style="left:1499px;top:396px;overflow:hidden" width="80" height="80" viewBox="0 0 80 80"><defs><linearGradient id="bge1499_396" x1="0" y1="0" x2="0" y2="1"><stop offset="0" stop-color="#9fb1e0"/><stop offset=".5" stop-color="#c3cfec"/><stop offset="1" stop-color="#e9edf8"/></linearGradient><radialGradient id="ire1499_396" cx=".45" cy=".4" r=".7"><stop offset="0" stop-color="#b9c7ea"/><stop offset=".6" stop-color="#7f97d4"/><stop offset="1" stop-color="#3f5cac"/></radialGradient><filter id="fe1499_396" filterUnits="userSpaceOnUse" x="-10" y="-10" width="100" height="100"><feGaussianBlur stdDeviation="2.200"/></filter><clipPath id="ce1499_396"><path d="M10.4 39.600C18 31 28 28.500 37.500 28.600 52 29 62 36 70.800 44.800 60 49 50 51 37.500 51 26 51 16 46 10.400 39.600z"/></clipPath></defs><rect width="80" height="80" fill="url(#bge1499_396)"/><g filter="url(#fe1499_396)"><path d="M-6 10C20 8 44 12 60 15 70 17 80 14 88 12L88 40C76 36 66 30 54 27 40 24 22 25 4 33L-6 36z" fill="#6d87cd"/><path d="M30 14C46 13 62 15 88 14L88 37C74 33 64 27 50 24 42 22 36 20 30 14z" fill="#2743a0"/><path d="M50 -4L88 -4 88 8C74 10 62 6 50 -4z" fill="#e4eaf7"/><path d="M-4 34C4 30 12 30 18 30L6 42-4 46z" fill="#5f7bc6" opacity=".8"/><path d="M4 44C16 58 44 60 78 50L80 56C50 68 14 64 0 50z" fill="#a3b4e1" opacity=".85"/><path d="M-2 58C20 72 52 70 84 58L84 84-2 84z" fill="#eef1fa" opacity=".9"/><path d="M66 30L84 40 84 60 74 48z" fill="#9fb1e0" opacity=".7"/></g><path d="M7 41C16 28 28 24.500 38 24.500 54 25 66 34 76 45" fill="none" stroke="#4a66b4" stroke-width="1.500" opacity=".9"/><path d="M10.4 39.600C18 31 28 28.500 37.500 28.600 52 29 62 36 70.800 44.800 60 49 50 51 37.500 51 26 51 16 46 10.400 39.600z" fill="#edf1fa" stroke="#2f4a9c" stroke-width="1.300"/><g clip-path="url(#ce1499_396)"><circle cx="38" cy="34" r="13.500" fill="url(#ire1499_396)" stroke="#3f5aa8" stroke-width=".9"/><path d="M8 26h66v8C60 28 30 27 8 42z" fill="#5a76c2" opacity=".3"/></g><rect x=".5" y=".5" width="79" height="79" fill="none" stroke="#6a80bf"/></svg>
<div class="thl" style="left:1154px;top:202px">Rightward</div>
<div class="thl" style="left:1264px;top:202px">Leftward</div>
<div class="a" style="left:1398px;top:201px;width:61px;height:17px;background:#3399ff"></div>
<div class="thl" style="left:1374px;top:202px;color:#fff">Downward</div>
<div class="thl" style="left:1484px;top:202px">Upward</div>
<div class="thl" style="left:1154px;top:341px">Rightward</div>
<div class="thl" style="left:1264px;top:341px">Leftward</div>
<div class="thl" style="left:1374px;top:341px">Downward</div>
<div class="thl" style="left:1484px;top:341px">Upward</div>
<div class="thl" style="left:1154px;top:480px">Rightward</div>
<div class="thl" style="left:1264px;top:480px">Leftward</div>
<div class="thl" style="left:1374px;top:480px">Downward</div>
<div class="thl" style="left:1484px;top:480px">Upward</div>
<div class="t" style="left:1166px;top:236px;font-size:11.5px;color:#1e3287">Left Eye</div>
<div class="a" style="left:1214px;top:243px;width:418px;height:1px;background:#a7b6d0"></div>
<div class="t" style="left:1166px;top:375px;font-size:11.5px;color:#1e3287">Right Eye</div>
<div class="a" style="left:1222px;top:382px;width:410px;height:1px;background:#a7b6d0"></div>
<div class="t" style="left:1670px;top:148px;font-size:13px;font-weight:bold;line-height:16px;letter-spacing:.45px">Genesis2Female</div>
<div class="a" style="left:1663px;top:146px;width:222px;height:500px;overflow:hidden">
<div class="glab" style="left:6px;top:26px;width:181px;overflow:hidden">Genesis2Female__CTRLMouthSmileSir</div>
<div class="strk" style="left:10px;top:49px;width:136px"></div>
<div class="sthm" style="left:75px;top:44px"></div>
<div class="vbox" style="left:153px;top:41px">0</div>
<div class="glab" style="left:6px;top:66px;width:181px;overflow:hidden">Genesis2Female__CTRLMouthNarrow</div>
<div class="strk" style="left:10px;top:89px;width:136px"></div>
<div class="sthm" style="left:75px;top:84px"></div>
<div class="vbox" style="left:153px;top:81px">0</div>
<div class="glab" style="left:6px;top:106px;width:181px;overflow:hidden">Genesis2Female__CTRLLipTopUp</div>
<div class="strk" style="left:10px;top:129px;width:136px"></div>
<div class="sthm" style="left:75px;top:124px"></div>
<div class="vbox" style="left:153px;top:121px">0</div>
<div class="glab" style="left:6px;top:146px;width:181px;overflow:hidden">Genesis2Female__CTRLLipTopDown</div>
<div class="strk" style="left:10px;top:169px;width:136px"></div>
<div class="sthm" style="left:75px;top:164px"></div>
<div class="vbox" style="left:153px;top:161px">0</div>
<div class="glab" style="left:6px;top:186px;width:181px;overflow:hidden">Genesis2Female__CTRLLipBottomUp</div>
<div class="strk" style="left:10px;top:209px;width:136px"></div>
<div class="sthm" style="left:75px;top:204px"></div>
<div class="vbox" style="left:153px;top:201px">0</div>
<div class="glab" style="left:6px;top:226px;width:181px;overflow:hidden">Genesis2Female__CTRLLipBottomOut</div>
<div class="strk" style="left:10px;top:249px;width:136px"></div>
<div class="sthm" style="left:75px;top:244px"></div>
<div class="vbox" style="left:153px;top:241px">0</div>
<div class="glab" style="left:6px;top:266px;width:181px;overflow:hidden">Genesis2Female__CTRLLipBottomIn</div>
<div class="strk" style="left:10px;top:289px;width:136px"></div>
<div class="sthm" style="left:75px;top:284px"></div>
<div class="vbox" style="left:153px;top:281px">0</div>
<div class="glab" style="left:6px;top:306px;width:181px;overflow:hidden">Genesis2Female__CTRLLipBottomDow</div>
<div class="strk" style="left:10px;top:329px;width:136px"></div>
<div class="sthm" style="left:75px;top:324px"></div>
<div class="vbox" style="left:153px;top:321px">0</div>
<div class="glab" style="left:6px;top:346px;width:181px;overflow:hidden">Genesis2Female__CTRLJawSide-Side</div>
<div class="strk" style="left:10px;top:369px;width:136px"></div>
<div class="sthm" style="left:75px;top:364px"></div>
<div class="vbox" style="left:153px;top:361px">0</div>
<div class="glab" style="left:6px;top:386px;width:181px;overflow:hidden">Genesis2Female__CTRLEyeLidsTopUp</div>
<div class="strk" style="left:10px;top:409px;width:136px"></div>
<div class="sthm" style="left:75px;top:404px"></div>
<div class="vbox" style="left:153px;top:401px">0</div>
<div class="glab" style="left:6px;top:426px;width:181px;overflow:hidden">Genesis2Female__CTRLEyeLidsTopDc</div>
<div class="strk" style="left:10px;top:449px;width:136px"></div>
<div class="sthm" style="left:75px;top:444px"></div>
<div class="vbox" style="left:153px;top:441px">0</div>
<div class="glab" style="left:6px;top:466px;width:181px;overflow:hidden">Genesis2Female__CTRLEyeLidsBottor</div>
<div class="strk" style="left:10px;top:489px;width:136px"></div>
<div class="sthm" style="left:75px;top:484px"></div>
<div class="vbox" style="left:153px;top:481px">0</div>
</div>
<div class="a" style="left:1885px;top:146px;width:16px;height:500px;background:#f0f0f0;border-left:1px solid #fafafa"></div>
<div class="a" style="left:1885px;top:163px;width:15px;height:20px;background:#cdcdcd"></div>
<svg style="left:1885px;top:146px" width="16" height="500" viewBox="0 0 16 500"><path d="M4 11l3.500-3.500 3.500 3.500M4 488l3.500 3.500 3.500-3.500" fill="none" stroke="#404040" stroke-width="1.800"/></svg>
<div class="a" style="left:1153px;top:515px;width:24px;height:25px;background:#e6e6e6;border:1px solid #adadad;border-radius:2px"></div>
<div class="a" style="left:1183px;top:515px;width:24px;height:25px;background:#e6e6e6;border:1px solid #adadad;border-radius:2px"></div>
<div class="a" style="left:1222px;top:515px;width:24px;height:25px;background:#e9e9e9;border:1px solid #cfcfcf;border-radius:2px"></div>
<div class="a" style="left:1252px;top:515px;width:24px;height:25px;background:#e9e9e9;border:1px solid #cfcfcf;border-radius:2px"></div>
<div class="a" style="left:1292px;top:515px;width:24px;height:25px;background:#dcdcdc;border:1px solid #7a7a7a;border-radius:2px"></div>
<div class="a" style="left:1393px;top:515px;width:24px;height:25px;background:#e6e6e6;border:1px solid #adadad;border-radius:2px"></div>
<div class="a" style="left:1498px;top:515px;width:24px;height:25px;background:#e6e6e6;border:1px solid #adadad;border-radius:2px"></div>
<div class="sep" style="left:1213px;top:515px;height:26px;background:#b0b0b0"></div>
<div class="sep" style="left:1283px;top:515px;height:26px;background:#b0b0b0"></div>
<div class="sep" style="left:1385px;top:515px;height:26px;background:#b0b0b0"></div>
<div class="sep" style="left:1489px;top:515px;height:26px;background:#b0b0b0"></div>
<svg style="left:0;top:0" width="1920" height="700" viewBox="0 0 1920 700"><g fill="none" stroke="#333" stroke-width="1.200"><path d="M1158.500 520.500h12l2 2v12h-14z" fill="#f4f4f4"/><rect x="1161.500" y="520.500" width="7" height="4.500"/><rect x="1161" y="528.500" width="9" height="6"/></g><g fill="#f4f4f4" stroke="#333" stroke-width="1.200"><path d="M1188.500 534.500v-13h5l1.500 2h7v3"/><path d="M1188.500 534.500l3-8h13l-3 8z"/></g><g fill="#f2f2f2" stroke="#c4c4c4" stroke-width="1.200"><rect x="1228.500" y="520.500" width="8" height="10"/><rect x="1232.500" y="524.500" width="8" height="10"/><rect x="1258.500" y="522.500" width="9" height="12"/><rect x="1261" y="520.500" width="4" height="3"/><rect x="1263.500" y="526.500" width="8" height="9"/></g><g stroke="#333" stroke-width="1.200" fill="#fafafa"><path d="M1298 534.500l9-9c-1.500-3 2-5 3.500-3 2-.5 3 2.500 .5 4-1 .5-2 .5-3 0l-8 9c1.500 2-2 4-3 2-2.500 .5-3-2.500-1-3.500.6-.3 1.300-.3 2 .5z"/></g><rect x="1398.500" y="521.500" width="13" height="13" fill="#fff" stroke="#666"/><rect x="1399" y="522" width="2" height="2" fill="#444"/><rect x="1399" y="526" width="2" height="2" fill="#444"/><rect x="1399" y="530" width="2" height="2" fill="#444"/><rect x="1401" y="524" width="2" height="2" fill="#444"/><rect x="1401" y="528" width="2" height="2" fill="#444"/><rect x="1401" y="532" width="2" height="2" fill="#444"/><rect x="1403" y="522" width="2" height="2" fill="#444"/><rect x="1403" y="526" width="2" height="2" fill="#444"/><rect x="1403" y="530" width="2" height="2" fill="#444"/><rect x="1405" y="524" width="2" height="2" fill="#444"/><rect x="1405" y="528" width="2" height="2" fill="#444"/><rect x="1405" y="532" width="2" height="2" fill="#444"/><rect x="1407" y="522" width="2" height="2" fill="#444"/><rect x="1407" y="526" width="2" height="2" fill="#444"/><rect x="1407" y="530" width="2" height="2" fill="#444"/><rect x="1409" y="524" width="2" height="2" fill="#444"/><rect x="1409" y="528" width="2" height="2" fill="#444"/><rect x="1409" y="532" width="2" height="2" fill="#444"/><g fill="none" stroke="#333" stroke-width="1.300"><circle cx="1506" cy="524" r="3"/><path d="M1509 524h9v3M1515 524v3"/></g><text x="1502" y="537" font-size="6.500" fill="#555" font-family="Liberation Sans,sans-serif">Auto</text></svg>
<div class="a" style="left:1322px;top:517px;width:41px;height:23px;background:#fff;border:1px solid #7a7a7a;color:#000;font-size:11px;line-height:20px;padding-left:5px"><span style="font-size:12px;color:#000">5.0</span></div>
<div class="a" style="left:1362px;top:517px;width:17px;height:23px;border:1px solid #c8c8c8;background:#f4f4f4"></div>
<div class="a" style="left:1363px;top:528px;width:15px;height:1px;background:#c8c8c8"></div>
<svg style="left:1366px;top:517px" width="8" height="23" viewBox="0 0 8 23"><path d="M1 7.8l3-3.500 3 3.500zM1 15.8l3 3.500 3-3.500z" fill="#333"/></svg>
<div class="a" style="left:1424px;top:517px;width:40px;height:23px;background:#f6f6f6;border:1px solid #dadada;color:#8a8a8a;font-size:11px;line-height:20px;padding-left:5px"></div>
<div class="a" style="left:1464px;top:517px;width:17px;height:23px;border:1px solid #e2e2e2;background:#f4f4f4"></div>
<div class="a" style="left:1465px;top:528px;width:15px;height:1px;background:#e2e2e2"></div>
<svg style="left:1468px;top:517px" width="8" height="23" viewBox="0 0 8 23"><path d="M1 7.8l3-3.500 3 3.500zM1 15.8l3 3.500 3-3.500z" fill="#7a7a7a"/></svg>
<div class="a" style="left:1527px;top:516px;width:60px;height:24px;background:#e1e1e1;border:1px solid #adadad;text-align:center;font-size:12px;line-height:22px">Set</div>
<div class="a" style="left:1593px;top:516px;width:60px;height:24px;background:#e1e1e1;border:1px solid #adadad;text-align:center;font-size:12px;line-height:22px">Clear</div>
<div class="lbl" style="left:1155px;top:548px">Tips</div>
<div class="a" style="left:1153px;top:564px;width:227px;height:81px;background:#f0f0f0;border:1px solid #7e7e7e;border-top-color:#5e5e5e;border-left-color:#5e5e5e"></div>
<div class="lbl" style="left:1158px;top:568px">Set the extreme look down degree.</div>
<svg style="left:1364px;top:565px" width="12" height="80" viewBox="0 0 12 80"><path d="M2 12l4-4 4 4M2 68l4 4 4-4" fill="none" stroke="#c0c0c0" stroke-width="1.300"/></svg>
<div class="gb" style="left:1385px;top:550px;width:275px;height:94px;border-color:#e2e2e2"></div>
<div class="lbl" style="left:1389px;top:543px;background:#f0f0f0;padding:0 3px">Transform</div>
<div class="lbl" style="left:1389px;top:558px">Rotate:</div>
<div class="lbl" style="left:1389px;top:603px">Move:</div>
<div class="lbl" style="left:1390px;top:579px">X:</div>
<div class="a" style="left:1406px;top:575px;width:42px;height:21px;background:#f6f6f6;border:1px solid #dadada;color:#8a8a8a;font-size:11px;line-height:18px;padding-left:5px">0.0</div>
<div class="a" style="left:1448px;top:575px;width:17px;height:21px;border:1px solid #e2e2e2;background:#f4f4f4"></div>
<div class="a" style="left:1449px;top:585px;width:15px;height:1px;background:#e2e2e2"></div>
<svg style="left:1452px;top:575px" width="8" height="21" viewBox="0 0 8 21"><path d="M1 7.2l3-3.500 3 3.500zM1 14.2l3 3.500 3-3.500z" fill="#7a7a7a"/></svg>
<div class="lbl" style="left:1485px;top:579px">Y:</div>
<div class="a" style="left:1499px;top:575px;width:38px;height:21px;background:#f6f6f6;border:1px solid #dadada;color:#8a8a8a;font-size:11px;line-height:18px;padding-left:5px">0.00</div>
<div class="a" style="left:1537px;top:575px;width:17px;height:21px;border:1px solid #e2e2e2;background:#f4f4f4"></div>
<div class="a" style="left:1538px;top:585px;width:15px;height:1px;background:#e2e2e2"></div>
<svg style="left:1541px;top:575px" width="8" height="21" viewBox="0 0 8 21"><path d="M1 7.2l3-3.500 3 3.500zM1 14.2l3 3.500 3-3.500z" fill="#7a7a7a"/></svg>
<div class="lbl" style="left:1574px;top:579px">Z:</div>
<div class="a" style="left:1588px;top:575px;width:38px;height:21px;background:#f6f6f6;border:1px solid #dadada;color:#8a8a8a;font-size:11px;line-height:18px;padding-left:5px">0.0</div>
<div class="a" style="left:1626px;top:575px;width:17px;height:21px;border:1px solid #e2e2e2;background:#f4f4f4"></div>
<div class="a" style="left:1627px;top:585px;width:15px;height:1px;background:#e2e2e2"></div>
<svg style="left:1630px;top:575px" width="8" height="21" viewBox="0 0 8 21"><path d="M1 7.2l3-3.500 3 3.500zM1 14.2l3 3.500 3-3.500z" fill="#7a7a7a"/></svg>
<div class="lbl" style="left:1390px;top:623px">X:</div>
<div class="a" style="left:1406px;top:619px;width:42px;height:21px;background:#f6f6f6;border:1px solid #dadada;color:#8a8a8a;font-size:11px;line-height:18px;padding-left:5px">0.00</div>
<div class="a" style="left:1448px;top:619px;width:17px;height:21px;border:1px solid #e2e2e2;background:#f4f4f4"></div>
<div class="a" style="left:1449px;top:629px;width:15px;height:1px;background:#e2e2e2"></div>
<svg style="left:1452px;top:619px" width="8" height="21" viewBox="0 0 8 21"><path d="M1 7.2l3-3.500 3 3.500zM1 14.2l3 3.500 3-3.500z" fill="#7a7a7a"/></svg>
<div class="lbl" style="left:1485px;top:623px">Y:</div>
<div class="a" style="left:1499px;top:619px;width:38px;height:21px;background:#f6f6f6;border:1px solid #dadada;color:#8a8a8a;font-size:11px;line-height:18px;padding-left:5px">0.00</div>
<div class="a" style="left:1537px;top:619px;width:17px;height:21px;border:1px solid #e2e2e2;background:#f4f4f4"></div>
<div class="a" style="left:1538px;top:629px;width:15px;height:1px;background:#e2e2e2"></div>
<svg style="left:1541px;top:619px" width="8" height="21" viewBox="0 0 8 21"><path d="M1 7.2l3-3.500 3 3.500zM1 14.2l3 3.500 3-3.500z" fill="#7a7a7a"/></svg>
<div class="lbl" style="left:1576px;top:623px">Z:</div>
<div class="a" style="left:1588px;top:619px;width:38px;height:21px;background:#f6f6f6;border:1px solid #dadada;color:#8a8a8a;font-size:11px;line-height:18px;padding-left:5px">0.00</div>
<div class="a" style="left:1626px;top:619px;width:17px;height:21px;border:1px solid #e2e2e2;background:#f4f4f4"></div>
<div class="a" style="left:1627px;top:629px;width:15px;height:1px;background:#e2e2e2"></div>
<svg style="left:1630px;top:619px" width="8" height="21" viewBox="0 0 8 21"><path d="M1 7.2l3-3.500 3 3.500zM1 14.2l3 3.500 3-3.500z" fill="#7a7a7a"/></svg>
<div class="a" style="left:0;top:1040px;width:1920px;height:40px;background:#060606"></div>
<div class="a" style="left:0;top:1040px;width:48px;height:40px;background:#2b2b14"></div>
<div class="a" style="left:48px;top:1040px;width:344px;height:40px;background:#f2f2f2"></div>
<div class="t" style="left:88px;top:1051px;font-size:14.4px;line-height:18px;color:#2b2b2b">Type here to search</div>
<svg style="left:0;top:1040px" width="1920" height="40" viewBox="0 1040 1920 40"><path d="M16 1054.500l6.500-1v6.500H16zM23.500 1053.300l8.500-1.300v8H23.500zM16 1061h6.500v6.500l-6.500-1zM23.500 1061H32v8l-8.500-1.300z" fill="#fff"/><circle cx="67.500" cy="1060" r="8.300" fill="none" stroke="#111" stroke-width="2.400"/><g fill="none" stroke="#333" stroke-width="1.300"><rect x="368.500" y="1052" width="5" height="10" rx="2.500"/><path d="M366 1059c0 7 10 7 10 0M371 1064.500v3M368 1067.500h6"/></g><g fill="none" stroke="#fff" stroke-width="1.300"><rect x="410" y="1055" width="9" height="9"/><path d="M408 1052.500v2M408 1064.500v3M408 1052.500h12M408 1067.500h12M423.500 1052v3M423.500 1059v8"/><rect x="422.500" y="1055.500" width="2" height="2" fill="#fff"/></g><circle cx="467" cy="1060" r="11" fill="#dd4b3e"/><path d="M467 1060L457.500 1054.500A11 11 0 0 0 461.500 1069.500z" fill="#1da462"/><path d="M467 1060L461.500 1069.500A11 11 0 0 0 478 1060z" fill="#ffcd46"/><path d="M467 1060H478A11 11 0 0 0 457.500 1054.500z" fill="#dd4b3e"/><circle cx="467" cy="1060" r="5" fill="#fff"/><circle cx="467" cy="1060" r="4" fill="#4c8bf5"/><path d="M506 1059c1-9 7-11 11-11 7 0 10 5 10 12h-14c0 3 3 5 7 5 3 0 5-1 6-1.500v4.500c-2 1-5 2-8 2-7 0-10-4-10-9 0-3 2-6 5-7-2 1-3 3-3 5zM513 1056h8c0-2-1-4-4-4s-4 2-4 4z" fill="#1f7fd8"/><rect x="554" y="1049" width="22" height="22" rx="2" fill="#8bbd26"/><path d="M559 1060a6 5 0 0 1 12 0zM559 1061h12v6h-12z" fill="#fff"/><circle cx="565" cy="1064" r="2.500" fill="#8bbd26"/><rect x="556" y="1061" width="2" height="5" fill="#fff"/><rect x="572" y="1061" width="2" height="5" fill="#fff"/><path d="M603 1054h20v16h-20z" fill="#fff"/><path d="M608 1054v-2a5 4 0 0 1 10 0v2" fill="none" stroke="#fff" stroke-width="1.300"/><rect x="608" y="1058" width="4.500" height="4.500" fill="#f25022"/><rect x="613.500" y="1058" width="4.500" height="4.500" fill="#7fba00"/><rect x="608" y="1063.500" width="4.500" height="4.500" fill="#00a4ef"/><rect x="613.500" y="1063.500" width="4.500" height="4.500" fill="#ffb900"/><path d="M655 1049l16 2-3 20-16-3z" fill="#cfe6f7" stroke="#8fb6d6"/><path d="M657 1053l12 1.500M656.500 1057l12 1.500M656 1061l12 1.500" stroke="#7aa8cc"/><circle cx="716" cy="1060" r="9" fill="#222"/><path d="M700 1052l14-3v22l-14-3z" fill="#e81123"/><circle cx="708" cy="1060" r="3.500" fill="none" stroke="#fff" stroke-width="1.200"/><path d="M748 1056v7M751 1053v12M754 1056v8M757 1051v17M760 1055v10M763 1053v13M766 1056v8M769 1054v11M772 1058v5" stroke="#bbb" stroke-width="1.200"/><path d="M753 1071l16-22" stroke="#2a7fd4" stroke-width="1.600"/><rect x="797" y="1048" width="24" height="24" fill="#f0287a"/><path d="M800 1069v-18l9 10 9-10v18" fill="none" stroke="#fff" stroke-width="4"/><rect x="846" y="1048" width="24" height="24" fill="#1e9bf0"/><path d="M850 1050l8 18 8-18" fill="none" stroke="#fff" stroke-width="5"/><rect x="896.500" y="1049.500" width="21" height="20" fill="#0c1e5c" stroke="#7aa5ff"/><text x="899.500" y="1065" font-size="13" font-weight="bold" fill="#8fb8ff" font-family="Liberation Sans,sans-serif">Ps</text><path d="M946 1051h8l2 2h11v5h-21z" fill="#f8d45c"/><rect x="946" y="1055" width="21" height="12" fill="#fbe27a"/><path d="M950 1067v-5h13v5h-3v3h-7v-3z" fill="#3a9be8"/><rect x="995.500" y="1049.500" width="21" height="20" fill="#2e1a05" stroke="#ff9a1e"/><text x="999" y="1065" font-size="13" font-weight="bold" fill="#ffa826" font-family="Liberation Sans,sans-serif">Ai</text><ellipse cx="1053" cy="1061" rx="11" ry="9" fill="#d8e6f2" stroke="#8aa"/><circle cx="1048" cy="1058" r="2" fill="#e33"/><circle cx="1053" cy="1055.500" r="2" fill="#3a3"/><circle cx="1058.500" cy="1058" r="2" fill="#36c"/><circle cx="1049" cy="1064" r="2" fill="#fc3"/><path d="M1066 1048l-9 16" stroke="#c8862a" stroke-width="2.500"/><circle cx="1104" cy="1060" r="12" fill="#1f1f1f"/><path d="M1104 1053l4 4v6l-4 5-4-5v-6z" fill="#3f7a1c"/><path d="M1096 1056l5 3M1112 1056l-5 3M1096 1065l5-2M1112 1065l-5-2" stroke="#3f7a1c"/><text x="1143" y="1062" font-size="10" font-weight="bold" fill="#fff" font-family="Liberation Sans,sans-serif">360</text><path d="M1140 1060c-3 4 3 8 13 8s15-4 12-8" fill="none" stroke="#fff" stroke-width="1.300"/><circle cx="1202" cy="1060" r="8.500" fill="#0d1a30" stroke="#2d9bf0" stroke-width="3.500"/><path d="M1206 1064l5 6" stroke="#2d9bf0" stroke-width="3.500"/><g fill="none" stroke="#86c232" stroke-width="1.500"><circle cx="1244" cy="1054" r="2.500"/><circle cx="1251" cy="1053" r="2.500"/><circle cx="1258" cy="1054" r="2.500"/><rect x="1240.500" y="1058" width="7" height="9" rx="2"/><rect x="1247.500" y="1057" width="7" height="10" rx="2"/><rect x="1254.500" y="1058" width="7" height="9" rx="2"/><path d="M1240 1070h22"/></g><rect x="1276" y="1040" width="48" height="40" fill="#3a3a3a"/><rect x="1288" y="1049" width="23" height="22" fill="#0a0a0a"/><path d="M1290 1052c6 0 7 5 9.500 8s4 8 10 8M1309.500 1052c-6 0-7 5-10 8s-4 8-9.500 8" stroke="#8cc63f" stroke-width="3.200" fill="none"/><rect x="447" y="1078" width="40" height="2" fill="#e6a0ea"/><rect x="496" y="1078" width="40" height="2" fill="#e6a0ea"/><rect x="938" y="1078" width="40" height="2" fill="#e6a0ea"/><rect x="1036" y="1078" width="40" height="2" fill="#e6a0ea"/><rect x="1233" y="1078" width="40" height="2" fill="#e6a0ea"/><rect x="1276" y="1078" width="48" height="2" fill="#e6a0ea"/><g fill="none" stroke="#fff" stroke-width="1.300"><circle cx="1729" cy="1061" r="3"/><path d="M1724 1069c0-5 10-5 10 0"/><circle cx="1735.500" cy="1055" r="2.200"/><path d="M1733 1060c2-3 6-2 6.500 1"/></g><path d="M1761 1064l5.500-5.500 5.500 5.500" fill="none" stroke="#fff" stroke-width="1.400"/><path d="M1786 1053l4 2.500-4 2.500-4-2.500zM1794 1053l4 2.500-4 2.500-4-2.500zM1786 1058.500l4 2.500-4 2.500-4-2.500zM1794 1058.500l4 2.500-4 2.500-4-2.500zM1790 1062.500l4 2.500-4 2.500-4-2.500z" fill="#fff"/><path d="M1877.500 1053.500h17v12h-7l-4 4v-4h-6z" fill="none" stroke="#fff" stroke-width="1.300"/></svg>
<div class="t" style="left:1800px;top:1044px;width:64px;text-align:center;color:#fff;font-size:12px;line-height:14px">9:13 AM</div>
<div class="t" style="left:1800px;top:1062px;width:64px;text-align:center;color:#fff;font-size:12px;line-height:14px">10/15/2018</div>
</body></html>
